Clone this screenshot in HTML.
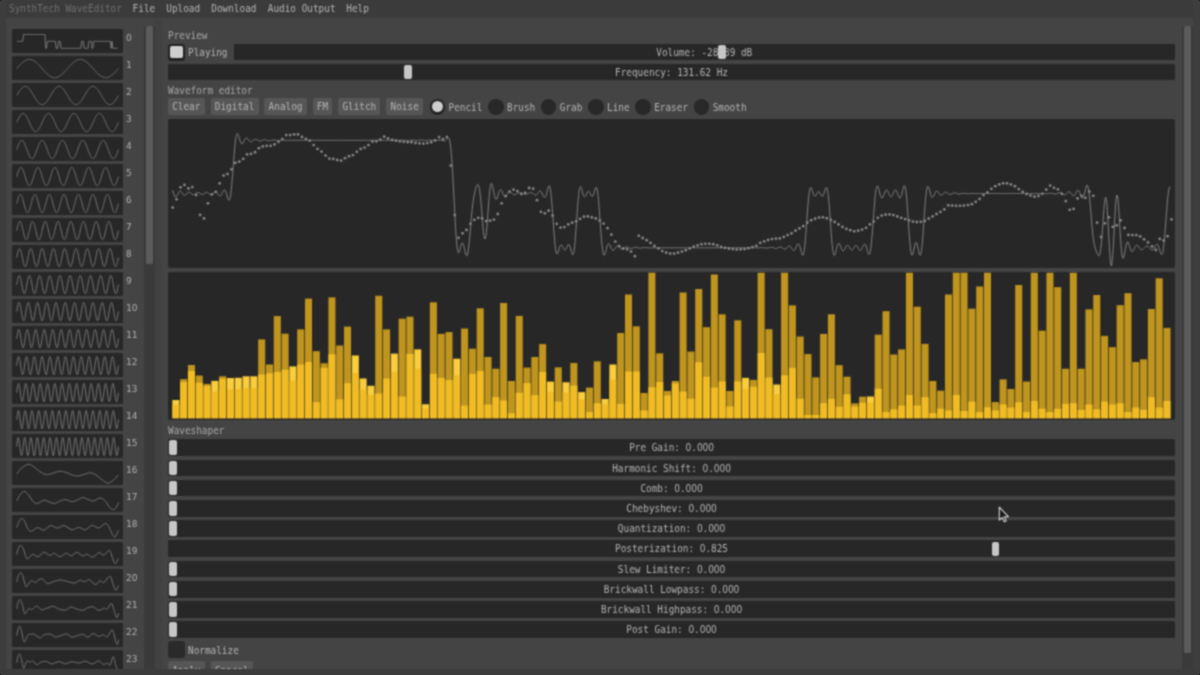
<!DOCTYPE html><html><head><meta charset="utf-8"><title>SynthTech WaveEditor</title><style>
html,body{margin:0;padding:0;background:#151515;overflow:hidden}
#app{position:relative;filter:url(#soft);border-radius:3px;width:1200px;height:675px;overflow:hidden;background:#444444;
 font-family:"DejaVu Sans Mono","Liberation Mono",monospace;font-size:9.4px;line-height:12px;color:#b4b4b4;white-space:pre}
#app div,#app span,#app svg{position:absolute}
.menubar{left:0;top:0;width:1200px;height:18px;background:#3b3b3b}
.menubar span{top:2.9px}
.dim{color:#6f6f6f}
#app b{display:inline-block;width:5.66px;text-align:center;font-weight:normal;font-family:"DejaVu Sans","Liberation Sans",sans-serif;font-size:9.1px;line-height:12px;vertical-align:baseline}
.menubar span,.lbl,.row span,.btn span,.rt,.tx{transform:scaleY(1.11);transform-origin:50% 52%}
.lbl{left:168px;color:#a8a8a8}
.row{left:168px;width:1007px;height:16.8px;background:#272727;border-radius:1.5px;text-align:center}
.row span{left:0;right:0;top:3.05px;text-align:center}
.h{width:7.8px;height:14.4px;background:#c6c6c6;border-radius:2px;top:1.2px}
.btn{top:98px;height:17px;background:#565656;border-radius:2px;text-align:center}
.btn span{left:0;right:0;top:3.3px}
.rad{top:99.3px;width:15.4px;height:15.4px;border-radius:50%;background:#282828}
.rad.on{background:#222}
.rad.on i{position:absolute;left:2.2px;top:2.2px;width:11px;height:11px;border-radius:50%;background:#cdcdcd}
.rt{top:101.5px}
.th{left:12px;width:110.7px;height:23.6px;background:#272727;border-radius:1.5px}
.num{left:126px;color:#b0b0b0}
.cb{width:17px;height:17px;border-radius:3px;background:#222}
.cb i{position:absolute;left:2.2px;top:2.2px;width:12.6px;height:12.6px;border-radius:2px;background:#cfcfcf}
</style></head><body><svg width="0" height="0" style="position:absolute"><defs><filter id="soft" x="0" y="0" width="100%" height="100%" color-interpolation-filters="sRGB"><feConvolveMatrix order="3" kernelMatrix="0.0529 0.1242 0.0529 0.1242 0.2916 0.1242 0.0529 0.1242 0.0529" divisor="1" edgeMode="duplicate" preserveAlpha="true"/></filter></defs></svg><div id="app">
<div class="menubar">
<span class="dim" style="left:9px">SynthTech WaveEditor</span>
<span class="" style="left:132.6px">File</span>
<span class="" style="left:166.3px">Upload</span>
<span class="" style="left:211.3px">Download</span>
<span class="" style="left:267.8px">Audio Output</span>
<span class="" style="left:346.3px">Help</span>
</div>
<div class="th" style="top:29.1px"></div>
<div class="num" style="top:32.1px"><b>0</b></div>
<div class="th" style="top:56.1px"></div>
<div class="num" style="top:59.1px">1</div>
<div class="th" style="top:83.1px"></div>
<div class="num" style="top:86.1px">2</div>
<div class="th" style="top:110.1px"></div>
<div class="num" style="top:113.1px">3</div>
<div class="th" style="top:137.1px"></div>
<div class="num" style="top:140.1px">4</div>
<div class="th" style="top:164.2px"></div>
<div class="num" style="top:167.2px">5</div>
<div class="th" style="top:191.2px"></div>
<div class="num" style="top:194.2px">6</div>
<div class="th" style="top:218.2px"></div>
<div class="num" style="top:221.2px">7</div>
<div class="th" style="top:245.2px"></div>
<div class="num" style="top:248.2px">8</div>
<div class="th" style="top:272.2px"></div>
<div class="num" style="top:275.2px">9</div>
<div class="th" style="top:299.2px"></div>
<div class="num" style="top:302.2px">1<b>0</b></div>
<div class="th" style="top:326.2px"></div>
<div class="num" style="top:329.2px">11</div>
<div class="th" style="top:353.2px"></div>
<div class="num" style="top:356.2px">12</div>
<div class="th" style="top:380.2px"></div>
<div class="num" style="top:383.2px">13</div>
<div class="th" style="top:407.2px"></div>
<div class="num" style="top:410.2px">14</div>
<div class="th" style="top:434.3px"></div>
<div class="num" style="top:437.3px">15</div>
<div class="th" style="top:461.3px"></div>
<div class="num" style="top:464.3px">16</div>
<div class="th" style="top:488.3px"></div>
<div class="num" style="top:491.3px">17</div>
<div class="th" style="top:515.3px"></div>
<div class="num" style="top:518.3px">18</div>
<div class="th" style="top:542.3px"></div>
<div class="num" style="top:545.3px">19</div>
<div class="th" style="top:569.3px"></div>
<div class="num" style="top:572.3px">2<b>0</b></div>
<div class="th" style="top:596.3px"></div>
<div class="num" style="top:599.3px">21</div>
<div class="th" style="top:623.3px"></div>
<div class="num" style="top:626.3px">22</div>
<div class="th" style="top:650.3px"></div>
<div class="num" style="top:653.3px">23</div>
<svg width="160" height="675" viewBox="0 0 160 675" style="left:0;top:0"><polyline fill="none" stroke="#777777" stroke-width="1.0" stroke-linejoin="round" points="17.1,41.3 17.9,41.3 18.7,41.3 19.5,41.3 20.3,41.3 21.1,41.3 21.9,41.3 22.7,41.3 23.5,34.5 24.3,34.5 25.1,34.5 25.9,34.5 26.7,34.5 27.5,34.5 28.3,34.5 29.1,34.5 29.9,34.5 30.7,34.5 31.5,34.5 32.3,34.5 33.1,34.5 33.8,34.5 34.6,34.5 35.4,34.5 36.2,34.5 37.0,34.5 37.8,34.5 38.6,34.5 39.4,34.5 40.2,34.5 41.0,34.5 41.8,34.5 42.6,34.5 43.4,34.5 44.2,34.5 45.0,34.5 45.8,48.3 46.6,48.3 47.4,41.3 48.2,41.3 49.0,41.3 49.8,41.3 50.6,41.3 51.4,41.3 52.2,41.3 53.0,41.3 53.8,41.3 54.6,41.3 55.4,41.3 56.2,48.3 57.0,48.3 57.8,48.3 58.6,41.3 59.4,41.3 60.2,41.3 61.0,48.3 61.8,48.3 62.6,48.3 63.4,48.3 64.2,48.3 65.0,48.3 65.8,48.3 66.6,48.3 67.4,48.3 68.1,48.3 68.9,48.3 69.7,48.3 70.5,48.3 71.3,48.3 72.1,48.3 72.9,48.3 73.7,48.3 74.5,48.3 75.3,48.3 76.1,48.3 76.9,48.3 77.7,48.3 78.5,48.3 79.3,48.3 80.1,48.3 80.9,48.3 81.7,41.3 82.5,41.3 83.3,41.3 84.1,48.3 84.9,48.3 85.7,48.3 86.5,48.3 87.3,48.3 88.1,48.3 88.9,41.3 89.7,41.3 90.5,41.3 91.3,41.3 92.1,48.3 92.9,48.3 93.7,41.3 94.5,41.3 95.3,41.3 96.1,41.3 96.9,41.3 97.7,41.3 98.5,41.3 99.3,41.3 100.1,41.3 100.9,41.3 101.6,41.3 102.4,41.3 103.2,41.3 104.0,41.3 104.8,41.3 105.6,41.3 106.4,41.3 107.2,41.3 108.0,41.3 108.8,41.3 109.6,41.3 110.4,41.3 111.2,48.3 112.0,41.3 112.8,48.3 113.6,48.3 114.4,48.3 115.2,48.3 116.0,48.3 116.8,48.3 117.6,48.3"/><polyline fill="none" stroke="#777777" stroke-width="1.0" stroke-linejoin="round" points="16.7,68.5 17.0,68.2 17.2,67.9 17.5,67.7 17.7,67.4 18.0,67.1 18.2,66.8 18.5,66.5 18.7,66.2 19.0,66.0 19.2,65.7 19.5,65.4 19.8,65.2 20.0,64.9 20.3,64.6 20.5,64.4 20.8,64.1 21.0,63.9 21.3,63.6 21.5,63.4 21.8,63.1 22.1,62.9 22.3,62.7 22.6,62.5 22.8,62.3 23.1,62.1 23.3,61.9 23.6,61.7 23.8,61.5 24.1,61.3 24.3,61.1 24.6,61.0 24.9,60.8 25.1,60.7 25.4,60.5 25.6,60.4 25.9,60.3 26.1,60.1 26.4,60.0 26.6,59.9 26.9,59.8 27.2,59.8 27.4,59.7 27.7,59.6 27.9,59.6 28.2,59.5 28.4,59.5 28.7,59.4 28.9,59.4 29.2,59.4 29.4,59.4 29.7,59.4 30.0,59.4 30.2,59.5 30.5,59.5 30.7,59.5 31.0,59.6 31.2,59.6 31.5,59.7 31.7,59.8 32.0,59.9 32.2,60.0 32.5,60.1 32.8,60.2 33.0,60.3 33.3,60.4 33.5,60.6 33.8,60.7 34.0,60.9 34.3,61.0 34.5,61.2 34.8,61.4 35.1,61.5 35.3,61.7 35.6,61.9 35.8,62.1 36.1,62.3 36.3,62.5 36.6,62.8 36.8,63.0 37.1,63.2 37.3,63.4 37.6,63.7 37.9,63.9 38.1,64.2 38.4,64.4 38.6,64.7 38.9,65.0 39.1,65.2 39.4,65.5 39.6,65.8 39.9,66.0 40.1,66.3 40.4,66.6 40.7,66.9 40.9,67.2 41.2,67.4 41.4,67.7 41.7,68.0 41.9,68.3 42.2,68.6 42.4,68.9 42.7,69.2 43.0,69.4 43.2,69.7 43.5,70.0 43.7,70.3 44.0,70.6 44.2,70.8 44.5,71.1 44.7,71.4 45.0,71.7 45.2,71.9 45.5,72.2 45.8,72.5 46.0,72.7 46.3,73.0 46.5,73.2 46.8,73.5 47.0,73.7 47.3,73.9 47.5,74.2 47.8,74.4 48.1,74.6 48.3,74.8 48.6,75.0 48.8,75.2 49.1,75.4 49.3,75.6 49.6,75.8 49.8,75.9 50.1,76.1 50.3,76.2 50.6,76.4 50.9,76.5 51.1,76.7 51.4,76.8 51.6,76.9 51.9,77.0 52.1,77.1 52.4,77.2 52.6,77.3 52.9,77.3 53.1,77.4 53.4,77.5 53.7,77.5 53.9,77.6 54.2,77.6 54.4,77.6 54.7,77.6 54.9,77.6 55.2,77.6 55.4,77.6 55.7,77.6 56.0,77.5 56.2,77.5 56.5,77.4 56.7,77.4 57.0,77.3 57.2,77.2 57.5,77.1 57.7,77.0 58.0,76.9 58.2,76.8 58.5,76.7 58.8,76.6 59.0,76.4 59.3,76.3 59.5,76.1 59.8,76.0 60.0,75.8 60.3,75.6 60.5,75.4 60.8,75.3 61.1,75.1 61.3,74.9 61.6,74.6 61.8,74.4 62.1,74.2 62.3,74.0 62.6,73.8 62.8,73.5 63.1,73.3 63.3,73.0 63.6,72.8 63.9,72.5 64.1,72.3 64.4,72.0 64.6,71.7 64.9,71.5 65.1,71.2 65.4,70.9 65.6,70.6 65.9,70.4 66.1,70.1 66.4,69.8 66.7,69.5 66.9,69.2 67.2,68.9 67.4,68.7 67.7,68.4 67.9,68.1 68.2,67.8 68.4,67.5 68.7,67.2 69.0,66.9 69.2,66.7 69.5,66.4 69.7,66.1 70.0,65.8 70.2,65.6 70.5,65.3 70.7,65.0 71.0,64.8 71.2,64.5 71.5,64.2 71.8,64.0 72.0,63.7 72.3,63.5 72.5,63.3 72.8,63.0 73.0,62.8 73.3,62.6 73.5,62.4 73.8,62.2 74.0,62.0 74.3,61.8 74.6,61.6 74.8,61.4 75.1,61.2 75.3,61.1 75.6,60.9 75.8,60.7 76.1,60.6 76.3,60.5 76.6,60.3 76.9,60.2 77.1,60.1 77.4,60.0 77.6,59.9 77.9,59.8 78.1,59.7 78.4,59.7 78.6,59.6 78.9,59.5 79.1,59.5 79.4,59.5 79.7,59.4 79.9,59.4 80.2,59.4 80.4,59.4 80.7,59.4 80.9,59.4 81.2,59.5 81.4,59.5 81.7,59.6 82.0,59.6 82.2,59.7 82.5,59.7 82.7,59.8 83.0,59.9 83.2,60.0 83.5,60.1 83.7,60.2 84.0,60.4 84.2,60.5 84.5,60.6 84.8,60.8 85.0,60.9 85.3,61.1 85.5,61.3 85.8,61.4 86.0,61.6 86.3,61.8 86.5,62.0 86.8,62.2 87.0,62.4 87.3,62.6 87.6,62.9 87.8,63.1 88.1,63.3 88.3,63.6 88.6,63.8 88.8,64.1 89.1,64.3 89.3,64.6 89.6,64.8 89.9,65.1 90.1,65.4 90.4,65.6 90.6,65.9 90.9,66.2 91.1,66.5 91.4,66.7 91.6,67.0 91.9,67.3 92.1,67.6 92.4,67.9 92.7,68.2 92.9,68.4 93.2,68.7 93.4,69.0 93.7,69.3 93.9,69.6 94.2,69.9 94.4,70.1 94.7,70.4 95.0,70.7 95.2,71.0 95.5,71.3 95.7,71.5 96.0,71.8 96.2,72.1 96.5,72.3 96.7,72.6 97.0,72.8 97.2,73.1 97.5,73.3 97.8,73.6 98.0,73.8 98.3,74.0 98.5,74.3 98.8,74.5 99.0,74.7 99.3,74.9 99.5,75.1 99.8,75.3 100.0,75.5 100.3,75.7 100.6,75.8 100.8,76.0 101.1,76.2 101.3,76.3 101.6,76.5 101.8,76.6 102.1,76.7 102.3,76.8 102.6,77.0 102.9,77.1 103.1,77.2 103.4,77.2 103.6,77.3 103.9,77.4 104.1,77.4 104.4,77.5 104.6,77.5 104.9,77.6 105.1,77.6 105.4,77.6 105.7,77.6 105.9,77.6 106.2,77.6 106.4,77.6 106.7,77.5 106.9,77.5 107.2,77.5 107.4,77.4 107.7,77.3 107.9,77.3 108.2,77.2 108.5,77.1 108.7,77.0 109.0,76.9 109.2,76.8 109.5,76.6 109.7,76.5 110.0,76.4 110.2,76.2 110.5,76.0 110.8,75.9 111.0,75.7 111.3,75.5 111.5,75.3 111.8,75.2 112.0,75.0 112.3,74.8 112.5,74.5 112.8,74.3 113.0,74.1 113.3,73.9 113.6,73.6 113.8,73.4 114.1,73.2 114.3,72.9 114.6,72.7 114.8,72.4 115.1,72.1 115.3,71.9 115.6,71.6 115.9,71.3 116.1,71.1 116.4,70.8 116.6,70.5 116.9,70.2 117.1,69.9 117.4,69.7 117.6,69.4 117.9,69.1 118.1,68.8 118.4,68.5"/><polyline fill="none" stroke="#777777" stroke-width="1.0" stroke-linejoin="round" points="16.7,95.5 17.0,95.1 17.2,94.7 17.5,94.2 17.7,93.8 18.0,93.4 18.2,93.0 18.5,92.6 18.7,92.2 19.0,91.8 19.2,91.4 19.5,91.0 19.8,90.6 20.0,90.3 20.3,89.9 20.5,89.6 20.8,89.3 21.0,89.0 21.3,88.7 21.5,88.4 21.8,88.1 22.1,87.9 22.3,87.7 22.6,87.5 22.8,87.3 23.1,87.1 23.3,86.9 23.6,86.8 23.8,86.7 24.1,86.6 24.3,86.5 24.6,86.5 24.9,86.4 25.1,86.4 25.4,86.4 25.6,86.5 25.9,86.5 26.1,86.6 26.4,86.6 26.6,86.8 26.9,86.9 27.2,87.0 27.4,87.2 27.7,87.4 27.9,87.6 28.2,87.8 28.4,88.0 28.7,88.3 28.9,88.5 29.2,88.8 29.4,89.1 29.7,89.4 30.0,89.8 30.2,90.1 30.5,90.5 30.7,90.8 31.0,91.2 31.2,91.6 31.5,92.0 31.7,92.4 32.0,92.8 32.2,93.2 32.5,93.6 32.8,94.0 33.0,94.4 33.3,94.9 33.5,95.3 33.8,95.7 34.0,96.2 34.3,96.6 34.5,97.0 34.8,97.4 35.1,97.9 35.3,98.3 35.6,98.7 35.8,99.1 36.1,99.5 36.3,99.9 36.6,100.2 36.8,100.6 37.1,100.9 37.3,101.3 37.6,101.6 37.9,101.9 38.1,102.2 38.4,102.5 38.6,102.8 38.9,103.0 39.1,103.3 39.4,103.5 39.6,103.7 39.9,103.9 40.1,104.0 40.4,104.2 40.7,104.3 40.9,104.4 41.2,104.5 41.4,104.5 41.7,104.6 41.9,104.6 42.2,104.6 42.4,104.6 42.7,104.6 43.0,104.5 43.2,104.4 43.5,104.3 43.7,104.2 44.0,104.1 44.2,103.9 44.5,103.8 44.7,103.6 45.0,103.4 45.2,103.1 45.5,102.9 45.8,102.6 46.0,102.4 46.3,102.1 46.5,101.8 46.8,101.4 47.0,101.1 47.3,100.8 47.5,100.4 47.8,100.0 48.1,99.7 48.3,99.3 48.6,98.9 48.8,98.5 49.1,98.1 49.3,97.6 49.6,97.2 49.8,96.8 50.1,96.4 50.3,95.9 50.6,95.5 50.9,95.1 51.1,94.7 51.4,94.2 51.6,93.8 51.9,93.4 52.1,93.0 52.4,92.6 52.6,92.2 52.9,91.8 53.1,91.4 53.4,91.0 53.7,90.6 53.9,90.3 54.2,89.9 54.4,89.6 54.7,89.3 54.9,89.0 55.2,88.7 55.4,88.4 55.7,88.1 56.0,87.9 56.2,87.7 56.5,87.5 56.7,87.3 57.0,87.1 57.2,86.9 57.5,86.8 57.7,86.7 58.0,86.6 58.2,86.5 58.5,86.5 58.8,86.4 59.0,86.4 59.3,86.4 59.5,86.5 59.8,86.5 60.0,86.6 60.3,86.6 60.5,86.8 60.8,86.9 61.1,87.0 61.3,87.2 61.6,87.4 61.8,87.6 62.1,87.8 62.3,88.0 62.6,88.3 62.8,88.5 63.1,88.8 63.3,89.1 63.6,89.4 63.9,89.8 64.1,90.1 64.4,90.5 64.6,90.8 64.9,91.2 65.1,91.6 65.4,92.0 65.6,92.4 65.9,92.8 66.1,93.2 66.4,93.6 66.7,94.0 66.9,94.4 67.2,94.9 67.4,95.3 67.7,95.7 67.9,96.2 68.2,96.6 68.4,97.0 68.7,97.4 69.0,97.9 69.2,98.3 69.5,98.7 69.7,99.1 70.0,99.5 70.2,99.9 70.5,100.2 70.7,100.6 71.0,100.9 71.2,101.3 71.5,101.6 71.8,101.9 72.0,102.2 72.3,102.5 72.5,102.8 72.8,103.0 73.0,103.3 73.3,103.5 73.5,103.7 73.8,103.9 74.0,104.0 74.3,104.2 74.6,104.3 74.8,104.4 75.1,104.5 75.3,104.5 75.6,104.6 75.8,104.6 76.1,104.6 76.3,104.6 76.6,104.6 76.9,104.5 77.1,104.4 77.4,104.3 77.6,104.2 77.9,104.1 78.1,103.9 78.4,103.8 78.6,103.6 78.9,103.4 79.1,103.1 79.4,102.9 79.7,102.6 79.9,102.4 80.2,102.1 80.4,101.8 80.7,101.4 80.9,101.1 81.2,100.8 81.4,100.4 81.7,100.0 82.0,99.7 82.2,99.3 82.5,98.9 82.7,98.5 83.0,98.1 83.2,97.6 83.5,97.2 83.7,96.8 84.0,96.4 84.2,95.9 84.5,95.5 84.8,95.1 85.0,94.7 85.3,94.2 85.5,93.8 85.8,93.4 86.0,93.0 86.3,92.6 86.5,92.2 86.8,91.8 87.0,91.4 87.3,91.0 87.6,90.6 87.8,90.3 88.1,89.9 88.3,89.6 88.6,89.3 88.8,89.0 89.1,88.7 89.3,88.4 89.6,88.1 89.9,87.9 90.1,87.7 90.4,87.5 90.6,87.3 90.9,87.1 91.1,86.9 91.4,86.8 91.6,86.7 91.9,86.6 92.1,86.5 92.4,86.5 92.7,86.4 92.9,86.4 93.2,86.4 93.4,86.5 93.7,86.5 93.9,86.6 94.2,86.6 94.4,86.8 94.7,86.9 95.0,87.0 95.2,87.2 95.5,87.4 95.7,87.6 96.0,87.8 96.2,88.0 96.5,88.3 96.7,88.5 97.0,88.8 97.2,89.1 97.5,89.4 97.8,89.8 98.0,90.1 98.3,90.5 98.5,90.8 98.8,91.2 99.0,91.6 99.3,92.0 99.5,92.4 99.8,92.8 100.0,93.2 100.3,93.6 100.6,94.0 100.8,94.4 101.1,94.9 101.3,95.3 101.6,95.7 101.8,96.2 102.1,96.6 102.3,97.0 102.6,97.4 102.9,97.9 103.1,98.3 103.4,98.7 103.6,99.1 103.9,99.5 104.1,99.9 104.4,100.2 104.6,100.6 104.9,100.9 105.1,101.3 105.4,101.6 105.7,101.9 105.9,102.2 106.2,102.5 106.4,102.8 106.7,103.0 106.9,103.3 107.2,103.5 107.4,103.7 107.7,103.9 107.9,104.0 108.2,104.2 108.5,104.3 108.7,104.4 109.0,104.5 109.2,104.5 109.5,104.6 109.7,104.6 110.0,104.6 110.2,104.6 110.5,104.6 110.8,104.5 111.0,104.4 111.3,104.3 111.5,104.2 111.8,104.1 112.0,103.9 112.3,103.8 112.5,103.6 112.8,103.4 113.0,103.1 113.3,102.9 113.6,102.6 113.8,102.4 114.1,102.1 114.3,101.8 114.6,101.4 114.8,101.1 115.1,100.8 115.3,100.4 115.6,100.0 115.9,99.7 116.1,99.3 116.4,98.9 116.6,98.5 116.9,98.1 117.1,97.6 117.4,97.2 117.6,96.8 117.9,96.4 118.1,95.9 118.4,95.5"/><polyline fill="none" stroke="#777777" stroke-width="1.0" stroke-linejoin="round" points="16.7,122.5 17.0,122.0 17.2,121.4 17.5,120.8 17.7,120.3 18.0,119.7 18.2,119.2 18.5,118.6 18.7,118.1 19.0,117.6 19.2,117.2 19.5,116.7 19.8,116.3 20.0,115.9 20.3,115.5 20.5,115.2 20.8,114.8 21.0,114.5 21.3,114.3 21.5,114.1 21.8,113.9 22.1,113.7 22.3,113.6 22.6,113.5 22.8,113.4 23.1,113.4 23.3,113.5 23.6,113.5 23.8,113.6 24.1,113.7 24.3,113.9 24.6,114.1 24.9,114.3 25.1,114.6 25.4,114.9 25.6,115.2 25.9,115.6 26.1,115.9 26.4,116.3 26.6,116.8 26.9,117.2 27.2,117.7 27.4,118.2 27.7,118.7 27.9,119.2 28.2,119.8 28.4,120.3 28.7,120.9 28.9,121.5 29.2,122.0 29.4,122.6 29.7,123.2 30.0,123.7 30.2,124.3 30.5,124.9 30.7,125.4 31.0,126.0 31.2,126.5 31.5,127.0 31.7,127.5 32.0,127.9 32.2,128.4 32.5,128.8 32.8,129.2 33.0,129.6 33.3,129.9 33.5,130.3 33.8,130.6 34.0,130.8 34.3,131.0 34.5,131.2 34.8,131.4 35.1,131.5 35.3,131.6 35.6,131.6 35.8,131.6 36.1,131.6 36.3,131.5 36.6,131.4 36.8,131.3 37.1,131.1 37.3,130.9 37.6,130.7 37.9,130.4 38.1,130.1 38.4,129.8 38.6,129.5 38.9,129.1 39.1,128.7 39.4,128.2 39.6,127.8 39.9,127.3 40.1,126.8 40.4,126.3 40.7,125.8 40.9,125.2 41.2,124.7 41.4,124.1 41.7,123.5 41.9,123.0 42.2,122.4 42.4,121.8 42.7,121.2 43.0,120.7 43.2,120.1 43.5,119.6 43.7,119.0 44.0,118.5 44.2,118.0 44.5,117.5 44.7,117.1 45.0,116.6 45.2,116.2 45.5,115.8 45.8,115.4 46.0,115.1 46.3,114.8 46.5,114.5 46.8,114.2 47.0,114.0 47.3,113.8 47.5,113.7 47.8,113.6 48.1,113.5 48.3,113.4 48.6,113.4 48.8,113.5 49.1,113.5 49.3,113.6 49.6,113.8 49.8,113.9 50.1,114.1 50.3,114.4 50.6,114.6 50.9,115.0 51.1,115.3 51.4,115.6 51.6,116.0 51.9,116.4 52.1,116.9 52.4,117.3 52.6,117.8 52.9,118.3 53.1,118.8 53.4,119.4 53.7,119.9 53.9,120.5 54.2,121.0 54.4,121.6 54.7,122.2 54.9,122.7 55.2,123.3 55.4,123.9 55.7,124.5 56.0,125.0 56.2,125.6 56.5,126.1 56.7,126.6 57.0,127.1 57.2,127.6 57.5,128.1 57.7,128.5 58.0,128.9 58.2,129.3 58.5,129.7 58.8,130.0 59.0,130.3 59.3,130.6 59.5,130.9 59.8,131.1 60.0,131.3 60.3,131.4 60.5,131.5 60.8,131.6 61.1,131.6 61.3,131.6 61.6,131.6 61.8,131.5 62.1,131.4 62.3,131.3 62.6,131.1 62.8,130.9 63.1,130.6 63.3,130.4 63.6,130.1 63.9,129.7 64.1,129.4 64.4,129.0 64.6,128.6 64.9,128.1 65.1,127.7 65.4,127.2 65.6,126.7 65.9,126.2 66.1,125.6 66.4,125.1 66.7,124.5 66.9,124.0 67.2,123.4 67.4,122.8 67.7,122.2 67.9,121.7 68.2,121.1 68.4,120.5 68.7,120.0 69.0,119.4 69.2,118.9 69.5,118.4 69.7,117.9 70.0,117.4 70.2,116.9 70.5,116.5 70.7,116.1 71.0,115.7 71.2,115.3 71.5,115.0 71.8,114.7 72.0,114.4 72.3,114.2 72.5,114.0 72.8,113.8 73.0,113.6 73.3,113.5 73.5,113.5 73.8,113.4 74.0,113.4 74.3,113.5 74.6,113.5 74.8,113.7 75.1,113.8 75.3,114.0 75.6,114.2 75.8,114.4 76.1,114.7 76.3,115.0 76.6,115.4 76.9,115.7 77.1,116.1 77.4,116.6 77.6,117.0 77.9,117.5 78.1,117.9 78.4,118.5 78.6,119.0 78.9,119.5 79.1,120.1 79.4,120.6 79.7,121.2 79.9,121.7 80.2,122.3 80.4,122.9 80.7,123.5 80.9,124.0 81.2,124.6 81.4,125.1 81.7,125.7 82.0,126.2 82.2,126.7 82.5,127.2 82.7,127.7 83.0,128.2 83.2,128.6 83.5,129.0 83.7,129.4 84.0,129.8 84.2,130.1 84.5,130.4 84.8,130.7 85.0,130.9 85.3,131.1 85.5,131.3 85.8,131.4 86.0,131.5 86.3,131.6 86.5,131.6 86.8,131.6 87.0,131.6 87.3,131.5 87.6,131.4 87.8,131.2 88.1,131.1 88.3,130.8 88.6,130.6 88.8,130.3 89.1,130.0 89.3,129.6 89.6,129.3 89.9,128.9 90.1,128.5 90.4,128.0 90.6,127.5 90.9,127.0 91.1,126.5 91.4,126.0 91.6,125.5 91.9,124.9 92.1,124.4 92.4,123.8 92.7,123.2 92.9,122.7 93.2,122.1 93.4,121.5 93.7,121.0 93.9,120.4 94.2,119.8 94.4,119.3 94.7,118.8 95.0,118.3 95.2,117.8 95.5,117.3 95.7,116.8 96.0,116.4 96.2,116.0 96.5,115.6 96.7,115.2 97.0,114.9 97.2,114.6 97.5,114.3 97.8,114.1 98.0,113.9 98.3,113.7 98.5,113.6 98.8,113.5 99.0,113.5 99.3,113.4 99.5,113.4 99.8,113.5 100.0,113.6 100.3,113.7 100.6,113.8 100.8,114.0 101.1,114.3 101.3,114.5 101.6,114.8 101.8,115.1 102.1,115.5 102.3,115.8 102.6,116.2 102.9,116.7 103.1,117.1 103.4,117.6 103.6,118.1 103.9,118.6 104.1,119.1 104.4,119.6 104.6,120.2 104.9,120.8 105.1,121.3 105.4,121.9 105.7,122.5 105.9,123.0 106.2,123.6 106.4,124.2 106.7,124.7 106.9,125.3 107.2,125.8 107.4,126.3 107.7,126.9 107.9,127.4 108.2,127.8 108.5,128.3 108.7,128.7 109.0,129.1 109.2,129.5 109.5,129.9 109.7,130.2 110.0,130.5 110.2,130.7 110.5,131.0 110.8,131.2 111.0,131.3 111.3,131.5 111.5,131.6 111.8,131.6 112.0,131.6 112.3,131.6 112.5,131.6 112.8,131.5 113.0,131.4 113.3,131.2 113.6,131.0 113.8,130.8 114.1,130.5 114.3,130.2 114.6,129.9 114.8,129.6 115.1,129.2 115.3,128.8 115.6,128.3 115.9,127.9 116.1,127.4 116.4,126.9 116.6,126.4 116.9,125.9 117.1,125.3 117.4,124.8 117.6,124.2 117.9,123.7 118.1,123.1 118.4,122.5"/><polyline fill="none" stroke="#777777" stroke-width="1.0" stroke-linejoin="round" points="16.7,149.5 17.0,148.8 17.2,148.1 17.5,147.4 17.7,146.7 18.0,146.0 18.2,145.4 18.5,144.8 18.7,144.2 19.0,143.6 19.2,143.1 19.5,142.6 19.8,142.2 20.0,141.8 20.3,141.4 20.5,141.1 20.8,140.9 21.0,140.7 21.3,140.5 21.5,140.5 21.8,140.4 22.1,140.5 22.3,140.6 22.6,140.7 22.8,140.9 23.1,141.1 23.3,141.5 23.6,141.8 23.8,142.2 24.1,142.7 24.3,143.1 24.6,143.7 24.9,144.2 25.1,144.8 25.4,145.5 25.6,146.1 25.9,146.8 26.1,147.5 26.4,148.2 26.6,148.9 26.9,149.6 27.2,150.3 27.4,151.0 27.7,151.7 27.9,152.4 28.2,153.1 28.4,153.7 28.7,154.4 28.9,155.0 29.2,155.5 29.4,156.0 29.7,156.5 30.0,157.0 30.2,157.3 30.5,157.7 30.7,158.0 31.0,158.2 31.2,158.4 31.5,158.5 31.7,158.6 32.0,158.6 32.2,158.6 32.5,158.5 32.8,158.4 33.0,158.2 33.3,157.9 33.5,157.6 33.8,157.2 34.0,156.8 34.3,156.4 34.5,155.9 34.8,155.4 35.1,154.8 35.3,154.2 35.6,153.6 35.8,152.9 36.1,152.2 36.3,151.5 36.6,150.8 36.8,150.1 37.1,149.4 37.3,148.7 37.6,148.0 37.9,147.3 38.1,146.6 38.4,145.9 38.6,145.3 38.9,144.7 39.1,144.1 39.4,143.5 39.6,143.0 39.9,142.5 40.1,142.1 40.4,141.7 40.7,141.4 40.9,141.1 41.2,140.8 41.4,140.7 41.7,140.5 41.9,140.5 42.2,140.4 42.4,140.5 42.7,140.6 43.0,140.7 43.2,140.9 43.5,141.2 43.7,141.5 44.0,141.9 44.2,142.3 44.5,142.7 44.7,143.2 45.0,143.8 45.2,144.4 45.5,145.0 45.8,145.6 46.0,146.2 46.3,146.9 46.5,147.6 46.8,148.3 47.0,149.0 47.3,149.8 47.5,150.5 47.8,151.2 48.1,151.9 48.3,152.6 48.6,153.2 48.8,153.9 49.1,154.5 49.3,155.1 49.6,155.6 49.8,156.1 50.1,156.6 50.3,157.0 50.6,157.4 50.9,157.8 51.1,158.0 51.4,158.3 51.6,158.4 51.9,158.6 52.1,158.6 52.4,158.6 52.6,158.6 52.9,158.5 53.1,158.3 53.4,158.1 53.7,157.8 53.9,157.5 54.2,157.2 54.4,156.7 54.7,156.3 54.9,155.8 55.2,155.2 55.4,154.7 55.7,154.1 56.0,153.4 56.2,152.8 56.5,152.1 56.7,151.4 57.0,150.7 57.2,150.0 57.5,149.3 57.7,148.5 58.0,147.8 58.2,147.1 58.5,146.5 58.8,145.8 59.0,145.1 59.3,144.5 59.5,144.0 59.8,143.4 60.0,142.9 60.3,142.4 60.5,142.0 60.8,141.6 61.1,141.3 61.3,141.0 61.6,140.8 61.8,140.6 62.1,140.5 62.3,140.4 62.6,140.4 62.8,140.5 63.1,140.6 63.3,140.8 63.6,141.0 63.9,141.3 64.1,141.6 64.4,142.0 64.6,142.4 64.9,142.8 65.1,143.4 65.4,143.9 65.6,144.5 65.9,145.1 66.1,145.7 66.4,146.4 66.7,147.1 66.9,147.8 67.2,148.5 67.4,149.2 67.7,149.9 67.9,150.6 68.2,151.3 68.4,152.0 68.7,152.7 69.0,153.4 69.2,154.0 69.5,154.6 69.7,155.2 70.0,155.7 70.2,156.2 70.5,156.7 70.7,157.1 71.0,157.5 71.2,157.8 71.5,158.1 71.8,158.3 72.0,158.5 72.3,158.6 72.5,158.6 72.8,158.6 73.0,158.6 73.3,158.5 73.5,158.3 73.8,158.1 74.0,157.8 74.3,157.5 74.6,157.1 74.8,156.7 75.1,156.2 75.3,155.7 75.6,155.1 75.8,154.5 76.1,153.9 76.3,153.3 76.6,152.6 76.9,151.9 77.1,151.2 77.4,150.5 77.6,149.8 77.9,149.1 78.1,148.4 78.4,147.7 78.6,147.0 78.9,146.3 79.1,145.7 79.4,145.0 79.7,144.4 79.9,143.8 80.2,143.3 80.4,142.8 80.7,142.3 80.9,141.9 81.2,141.6 81.4,141.2 81.7,141.0 82.0,140.8 82.2,140.6 82.5,140.5 82.7,140.4 83.0,140.5 83.2,140.5 83.5,140.6 83.7,140.8 84.0,141.0 84.2,141.3 84.5,141.7 84.8,142.0 85.0,142.5 85.3,142.9 85.5,143.5 85.8,144.0 86.0,144.6 86.3,145.2 86.5,145.9 86.8,146.5 87.0,147.2 87.3,147.9 87.6,148.6 87.8,149.3 88.1,150.0 88.3,150.8 88.6,151.5 88.8,152.2 89.1,152.8 89.3,153.5 89.6,154.1 89.9,154.7 90.1,155.3 90.4,155.8 90.6,156.3 90.9,156.8 91.1,157.2 91.4,157.6 91.6,157.9 91.9,158.1 92.1,158.3 92.4,158.5 92.7,158.6 92.9,158.6 93.2,158.6 93.4,158.6 93.7,158.4 93.9,158.2 94.2,158.0 94.4,157.7 94.7,157.4 95.0,157.0 95.2,156.6 95.5,156.1 95.7,155.6 96.0,155.0 96.2,154.4 96.5,153.8 96.7,153.2 97.0,152.5 97.2,151.8 97.5,151.1 97.8,150.4 98.0,149.7 98.3,149.0 98.5,148.3 98.8,147.6 99.0,146.9 99.3,146.2 99.5,145.5 99.8,144.9 100.0,144.3 100.3,143.7 100.6,143.2 100.8,142.7 101.1,142.3 101.3,141.8 101.6,141.5 101.8,141.2 102.1,140.9 102.3,140.7 102.6,140.6 102.9,140.5 103.1,140.4 103.4,140.5 103.6,140.5 103.9,140.7 104.1,140.9 104.4,141.1 104.6,141.4 104.9,141.7 105.1,142.1 105.4,142.6 105.7,143.0 105.9,143.6 106.2,144.1 106.4,144.7 106.7,145.3 106.9,146.0 107.2,146.7 107.4,147.3 107.7,148.0 107.9,148.8 108.2,149.5 108.5,150.2 108.7,150.9 109.0,151.6 109.2,152.3 109.5,153.0 109.7,153.6 110.0,154.2 110.2,154.8 110.5,155.4 110.8,155.9 111.0,156.4 111.3,156.9 111.5,157.3 111.8,157.6 112.0,157.9 112.3,158.2 112.5,158.4 112.8,158.5 113.0,158.6 113.3,158.6 113.6,158.6 113.8,158.5 114.1,158.4 114.3,158.2 114.6,158.0 114.8,157.7 115.1,157.3 115.3,156.9 115.6,156.5 115.9,156.0 116.1,155.5 116.4,154.9 116.6,154.3 116.9,153.7 117.1,153.0 117.4,152.4 117.6,151.7 117.9,151.0 118.1,150.3 118.4,149.5"/><polyline fill="none" stroke="#777777" stroke-width="1.0" stroke-linejoin="round" points="16.7,176.6 17.0,175.7 17.2,174.8 17.5,174.0 17.7,173.2 18.0,172.4 18.2,171.7 18.5,171.0 18.7,170.3 19.0,169.7 19.2,169.2 19.5,168.7 19.8,168.3 20.0,168.0 20.3,167.7 20.5,167.6 20.8,167.5 21.0,167.5 21.3,167.5 21.5,167.7 21.8,167.9 22.1,168.2 22.3,168.6 22.6,169.1 22.8,169.6 23.1,170.2 23.3,170.8 23.6,171.5 23.8,172.2 24.1,173.0 24.3,173.8 24.6,174.6 24.9,175.5 25.1,176.3 25.4,177.2 25.6,178.0 25.9,178.9 26.1,179.7 26.4,180.5 26.6,181.3 26.9,182.0 27.2,182.6 27.4,183.2 27.7,183.8 27.9,184.3 28.2,184.7 28.4,185.0 28.7,185.3 28.9,185.5 29.2,185.6 29.4,185.6 29.7,185.6 30.0,185.5 30.2,185.3 30.5,185.0 30.7,184.6 31.0,184.2 31.2,183.7 31.5,183.1 31.7,182.5 32.0,181.8 32.2,181.1 32.5,180.3 32.8,179.5 33.0,178.7 33.3,177.8 33.5,177.0 33.8,176.1 34.0,175.3 34.3,174.4 34.5,173.6 34.8,172.8 35.1,172.0 35.3,171.3 35.6,170.6 35.8,170.0 36.1,169.4 36.3,168.9 36.6,168.5 36.8,168.1 37.1,167.8 37.3,167.6 37.6,167.5 37.9,167.5 38.1,167.5 38.4,167.6 38.6,167.8 38.9,168.1 39.1,168.4 39.4,168.8 39.6,169.3 39.9,169.9 40.1,170.5 40.4,171.1 40.7,171.8 40.9,172.6 41.2,173.4 41.4,174.2 41.7,175.1 41.9,175.9 42.2,176.8 42.4,177.6 42.7,178.5 43.0,179.3 43.2,180.1 43.5,180.9 43.7,181.6 44.0,182.3 44.2,182.9 44.5,183.5 44.7,184.0 45.0,184.5 45.2,184.9 45.5,185.2 45.8,185.4 46.0,185.6 46.3,185.6 46.5,185.6 46.8,185.5 47.0,185.4 47.3,185.1 47.5,184.8 47.8,184.4 48.1,183.9 48.3,183.4 48.6,182.8 48.8,182.1 49.1,181.4 49.3,180.7 49.6,179.9 49.8,179.1 50.1,178.3 50.3,177.4 50.6,176.6 50.9,175.7 51.1,174.8 51.4,174.0 51.6,173.2 51.9,172.4 52.1,171.7 52.4,171.0 52.6,170.3 52.9,169.7 53.1,169.2 53.4,168.7 53.7,168.3 53.9,168.0 54.2,167.7 54.4,167.6 54.7,167.5 54.9,167.5 55.2,167.5 55.4,167.7 55.7,167.9 56.0,168.2 56.2,168.6 56.5,169.1 56.7,169.6 57.0,170.2 57.2,170.8 57.5,171.5 57.7,172.2 58.0,173.0 58.2,173.8 58.5,174.6 58.8,175.5 59.0,176.3 59.3,177.2 59.5,178.0 59.8,178.9 60.0,179.7 60.3,180.5 60.5,181.3 60.8,182.0 61.1,182.6 61.3,183.2 61.6,183.8 61.8,184.3 62.1,184.7 62.3,185.0 62.6,185.3 62.8,185.5 63.1,185.6 63.3,185.6 63.6,185.6 63.9,185.5 64.1,185.3 64.4,185.0 64.6,184.6 64.9,184.2 65.1,183.7 65.4,183.1 65.6,182.5 65.9,181.8 66.1,181.1 66.4,180.3 66.7,179.5 66.9,178.7 67.2,177.8 67.4,177.0 67.7,176.1 67.9,175.3 68.2,174.4 68.4,173.6 68.7,172.8 69.0,172.0 69.2,171.3 69.5,170.6 69.7,170.0 70.0,169.4 70.2,168.9 70.5,168.5 70.7,168.1 71.0,167.8 71.2,167.6 71.5,167.5 71.8,167.5 72.0,167.5 72.3,167.6 72.5,167.8 72.8,168.1 73.0,168.4 73.3,168.8 73.5,169.3 73.8,169.9 74.0,170.5 74.3,171.1 74.6,171.8 74.8,172.6 75.1,173.4 75.3,174.2 75.6,175.1 75.8,175.9 76.1,176.8 76.3,177.6 76.6,178.5 76.9,179.3 77.1,180.1 77.4,180.9 77.6,181.6 77.9,182.3 78.1,182.9 78.4,183.5 78.6,184.0 78.9,184.5 79.1,184.9 79.4,185.2 79.7,185.4 79.9,185.6 80.2,185.6 80.4,185.6 80.7,185.5 80.9,185.4 81.2,185.1 81.4,184.8 81.7,184.4 82.0,183.9 82.2,183.4 82.5,182.8 82.7,182.1 83.0,181.4 83.2,180.7 83.5,179.9 83.7,179.1 84.0,178.3 84.2,177.4 84.5,176.6 84.8,175.7 85.0,174.8 85.3,174.0 85.5,173.2 85.8,172.4 86.0,171.7 86.3,171.0 86.5,170.3 86.8,169.7 87.0,169.2 87.3,168.7 87.6,168.3 87.8,168.0 88.1,167.7 88.3,167.6 88.6,167.5 88.8,167.5 89.1,167.5 89.3,167.7 89.6,167.9 89.9,168.2 90.1,168.6 90.4,169.1 90.6,169.6 90.9,170.2 91.1,170.8 91.4,171.5 91.6,172.2 91.9,173.0 92.1,173.8 92.4,174.6 92.7,175.5 92.9,176.3 93.2,177.2 93.4,178.0 93.7,178.9 93.9,179.7 94.2,180.5 94.4,181.3 94.7,182.0 95.0,182.6 95.2,183.2 95.5,183.8 95.7,184.3 96.0,184.7 96.2,185.0 96.5,185.3 96.7,185.5 97.0,185.6 97.2,185.6 97.5,185.6 97.8,185.5 98.0,185.3 98.3,185.0 98.5,184.6 98.8,184.2 99.0,183.7 99.3,183.1 99.5,182.5 99.8,181.8 100.0,181.1 100.3,180.3 100.6,179.5 100.8,178.7 101.1,177.8 101.3,177.0 101.6,176.1 101.8,175.3 102.1,174.4 102.3,173.6 102.6,172.8 102.9,172.0 103.1,171.3 103.4,170.6 103.6,170.0 103.9,169.4 104.1,168.9 104.4,168.5 104.6,168.1 104.9,167.8 105.1,167.6 105.4,167.5 105.7,167.5 105.9,167.5 106.2,167.6 106.4,167.8 106.7,168.1 106.9,168.4 107.2,168.8 107.4,169.3 107.7,169.9 107.9,170.5 108.2,171.1 108.5,171.8 108.7,172.6 109.0,173.4 109.2,174.2 109.5,175.1 109.7,175.9 110.0,176.8 110.2,177.6 110.5,178.5 110.8,179.3 111.0,180.1 111.3,180.9 111.5,181.6 111.8,182.3 112.0,182.9 112.3,183.5 112.5,184.0 112.8,184.5 113.0,184.9 113.3,185.2 113.6,185.4 113.8,185.6 114.1,185.6 114.3,185.6 114.6,185.5 114.8,185.4 115.1,185.1 115.3,184.8 115.6,184.4 115.9,183.9 116.1,183.4 116.4,182.8 116.6,182.1 116.9,181.4 117.1,180.7 117.4,179.9 117.6,179.1 117.9,178.3 118.1,177.4 118.4,176.6"/><polyline fill="none" stroke="#777777" stroke-width="1.0" stroke-linejoin="round" points="16.7,203.6 17.0,202.6 17.2,201.6 17.5,200.6 17.7,199.7 18.0,198.8 18.2,198.0 18.5,197.2 18.7,196.5 19.0,195.9 19.2,195.4 19.5,195.0 19.8,194.7 20.0,194.5 20.3,194.5 20.5,194.5 20.8,194.6 21.0,194.9 21.3,195.2 21.5,195.7 21.8,196.2 22.1,196.9 22.3,197.6 22.6,198.4 22.8,199.2 23.1,200.1 23.3,201.1 23.6,202.1 23.8,203.1 24.1,204.1 24.3,205.1 24.6,206.0 24.9,207.0 25.1,207.9 25.4,208.7 25.6,209.5 25.9,210.3 26.1,210.9 26.4,211.4 26.6,211.9 26.9,212.2 27.2,212.5 27.4,212.6 27.7,212.7 27.9,212.6 28.2,212.4 28.4,212.1 28.7,211.7 28.9,211.2 29.2,210.6 29.4,209.9 29.7,209.1 30.0,208.3 30.2,207.4 30.5,206.5 30.7,205.5 31.0,204.6 31.2,203.6 31.5,202.6 31.7,201.6 32.0,200.6 32.2,199.7 32.5,198.8 32.8,198.0 33.0,197.2 33.3,196.5 33.5,195.9 33.8,195.4 34.0,195.0 34.3,194.7 34.5,194.5 34.8,194.5 35.1,194.5 35.3,194.6 35.6,194.9 35.8,195.2 36.1,195.7 36.3,196.2 36.6,196.9 36.8,197.6 37.1,198.4 37.3,199.2 37.6,200.1 37.9,201.1 38.1,202.1 38.4,203.1 38.6,204.1 38.9,205.1 39.1,206.0 39.4,207.0 39.6,207.9 39.9,208.7 40.1,209.5 40.4,210.3 40.7,210.9 40.9,211.4 41.2,211.9 41.4,212.2 41.7,212.5 41.9,212.6 42.2,212.7 42.4,212.6 42.7,212.4 43.0,212.1 43.2,211.7 43.5,211.2 43.7,210.6 44.0,209.9 44.2,209.1 44.5,208.3 44.7,207.4 45.0,206.5 45.2,205.5 45.5,204.6 45.8,203.6 46.0,202.6 46.3,201.6 46.5,200.6 46.8,199.7 47.0,198.8 47.3,198.0 47.5,197.2 47.8,196.5 48.1,195.9 48.3,195.4 48.6,195.0 48.8,194.7 49.1,194.5 49.3,194.5 49.6,194.5 49.8,194.6 50.1,194.9 50.3,195.2 50.6,195.7 50.9,196.2 51.1,196.9 51.4,197.6 51.6,198.4 51.9,199.2 52.1,200.1 52.4,201.1 52.6,202.1 52.9,203.1 53.1,204.1 53.4,205.1 53.7,206.0 53.9,207.0 54.2,207.9 54.4,208.7 54.7,209.5 54.9,210.3 55.2,210.9 55.4,211.4 55.7,211.9 56.0,212.2 56.2,212.5 56.5,212.6 56.7,212.7 57.0,212.6 57.2,212.4 57.5,212.1 57.7,211.7 58.0,211.2 58.2,210.6 58.5,209.9 58.8,209.1 59.0,208.3 59.3,207.4 59.5,206.5 59.8,205.5 60.0,204.6 60.3,203.6 60.5,202.6 60.8,201.6 61.1,200.6 61.3,199.7 61.6,198.8 61.8,198.0 62.1,197.2 62.3,196.5 62.6,195.9 62.8,195.4 63.1,195.0 63.3,194.7 63.6,194.5 63.9,194.5 64.1,194.5 64.4,194.6 64.6,194.9 64.9,195.2 65.1,195.7 65.4,196.2 65.6,196.9 65.9,197.6 66.1,198.4 66.4,199.2 66.7,200.1 66.9,201.1 67.2,202.1 67.4,203.1 67.7,204.1 67.9,205.1 68.2,206.0 68.4,207.0 68.7,207.9 69.0,208.7 69.2,209.5 69.5,210.3 69.7,210.9 70.0,211.4 70.2,211.9 70.5,212.2 70.7,212.5 71.0,212.6 71.2,212.7 71.5,212.6 71.8,212.4 72.0,212.1 72.3,211.7 72.5,211.2 72.8,210.6 73.0,209.9 73.3,209.1 73.5,208.3 73.8,207.4 74.0,206.5 74.3,205.5 74.6,204.6 74.8,203.6 75.1,202.6 75.3,201.6 75.6,200.6 75.8,199.7 76.1,198.8 76.3,198.0 76.6,197.2 76.9,196.5 77.1,195.9 77.4,195.4 77.6,195.0 77.9,194.7 78.1,194.5 78.4,194.5 78.6,194.5 78.9,194.6 79.1,194.9 79.4,195.2 79.7,195.7 79.9,196.2 80.2,196.9 80.4,197.6 80.7,198.4 80.9,199.2 81.2,200.1 81.4,201.1 81.7,202.1 82.0,203.1 82.2,204.1 82.5,205.1 82.7,206.0 83.0,207.0 83.2,207.9 83.5,208.7 83.7,209.5 84.0,210.3 84.2,210.9 84.5,211.4 84.8,211.9 85.0,212.2 85.3,212.5 85.5,212.6 85.8,212.7 86.0,212.6 86.3,212.4 86.5,212.1 86.8,211.7 87.0,211.2 87.3,210.6 87.6,209.9 87.8,209.1 88.1,208.3 88.3,207.4 88.6,206.5 88.8,205.5 89.1,204.6 89.3,203.6 89.6,202.6 89.9,201.6 90.1,200.6 90.4,199.7 90.6,198.8 90.9,198.0 91.1,197.2 91.4,196.5 91.6,195.9 91.9,195.4 92.1,195.0 92.4,194.7 92.7,194.5 92.9,194.5 93.2,194.5 93.4,194.6 93.7,194.9 93.9,195.2 94.2,195.7 94.4,196.2 94.7,196.9 95.0,197.6 95.2,198.4 95.5,199.2 95.7,200.1 96.0,201.1 96.2,202.1 96.5,203.1 96.7,204.1 97.0,205.1 97.2,206.0 97.5,207.0 97.8,207.9 98.0,208.7 98.3,209.5 98.5,210.3 98.8,210.9 99.0,211.4 99.3,211.9 99.5,212.2 99.8,212.5 100.0,212.6 100.3,212.7 100.6,212.6 100.8,212.4 101.1,212.1 101.3,211.7 101.6,211.2 101.8,210.6 102.1,209.9 102.3,209.1 102.6,208.3 102.9,207.4 103.1,206.5 103.4,205.5 103.6,204.6 103.9,203.6 104.1,202.6 104.4,201.6 104.6,200.6 104.9,199.7 105.1,198.8 105.4,198.0 105.7,197.2 105.9,196.5 106.2,195.9 106.4,195.4 106.7,195.0 106.9,194.7 107.2,194.5 107.4,194.5 107.7,194.5 107.9,194.6 108.2,194.9 108.5,195.2 108.7,195.7 109.0,196.2 109.2,196.9 109.5,197.6 109.7,198.4 110.0,199.2 110.2,200.1 110.5,201.1 110.8,202.1 111.0,203.1 111.3,204.1 111.5,205.1 111.8,206.0 112.0,207.0 112.3,207.9 112.5,208.7 112.8,209.5 113.0,210.3 113.3,210.9 113.6,211.4 113.8,211.9 114.1,212.2 114.3,212.5 114.6,212.6 114.8,212.7 115.1,212.6 115.3,212.4 115.6,212.1 115.9,211.7 116.1,211.2 116.4,210.6 116.6,209.9 116.9,209.1 117.1,208.3 117.4,207.4 117.6,206.5 117.9,205.5 118.1,204.6 118.4,203.6"/><polyline fill="none" stroke="#777777" stroke-width="1.0" stroke-linejoin="round" points="16.7,230.6 17.0,229.4 17.2,228.3 17.5,227.2 17.7,226.2 18.0,225.2 18.2,224.3 18.5,223.5 18.7,222.9 19.0,222.3 19.2,221.9 19.5,221.6 19.8,221.5 20.0,221.5 20.3,221.6 20.5,221.9 20.8,222.4 21.0,222.9 21.3,223.6 21.5,224.4 21.8,225.3 22.1,226.2 22.3,227.3 22.6,228.4 22.8,229.5 23.1,230.6 23.3,231.8 23.6,232.9 23.8,234.0 24.1,235.0 24.3,236.0 24.6,236.9 24.9,237.6 25.1,238.3 25.4,238.8 25.6,239.3 25.9,239.5 26.1,239.7 26.4,239.6 26.6,239.5 26.9,239.2 27.2,238.8 27.4,238.2 27.7,237.5 27.9,236.7 28.2,235.8 28.4,234.8 28.7,233.8 28.9,232.7 29.2,231.6 29.4,230.4 29.7,229.3 30.0,228.2 30.2,227.1 30.5,226.1 30.7,225.1 31.0,224.2 31.2,223.5 31.5,222.8 31.7,222.3 32.0,221.9 32.2,221.6 32.5,221.5 32.8,221.5 33.0,221.7 33.3,222.0 33.5,222.4 33.8,223.0 34.0,223.7 34.3,224.5 34.5,225.4 34.8,226.4 35.1,227.4 35.3,228.5 35.6,229.6 35.8,230.8 36.1,231.9 36.3,233.0 36.6,234.1 36.8,235.2 37.1,236.1 37.3,237.0 37.6,237.7 37.9,238.4 38.1,238.9 38.4,239.3 38.6,239.6 38.9,239.7 39.1,239.6 39.4,239.5 39.6,239.1 39.9,238.7 40.1,238.1 40.4,237.4 40.7,236.6 40.9,235.7 41.2,234.7 41.4,233.7 41.7,232.6 41.9,231.4 42.2,230.3 42.4,229.1 42.7,228.0 43.0,226.9 43.2,225.9 43.5,225.0 43.7,224.1 44.0,223.4 44.2,222.7 44.5,222.2 44.7,221.8 45.0,221.6 45.2,221.5 45.5,221.5 45.8,221.7 46.0,222.0 46.3,222.5 46.5,223.1 46.8,223.8 47.0,224.6 47.3,225.5 47.5,226.5 47.8,227.5 48.1,228.6 48.3,229.8 48.6,230.9 48.8,232.1 49.1,233.2 49.3,234.3 49.6,235.3 49.8,236.2 50.1,237.1 50.3,237.8 50.6,238.5 50.9,239.0 51.1,239.3 51.4,239.6 51.6,239.7 51.9,239.6 52.1,239.4 52.4,239.1 52.6,238.6 52.9,238.0 53.1,237.3 53.4,236.5 53.7,235.6 53.9,234.6 54.2,233.5 54.4,232.4 54.7,231.3 54.9,230.1 55.2,229.0 55.4,227.9 55.7,226.8 56.0,225.8 56.2,224.9 56.5,224.0 56.7,223.3 57.0,222.7 57.2,222.2 57.5,221.8 57.7,221.6 58.0,221.5 58.2,221.5 58.5,221.7 58.8,222.1 59.0,222.5 59.3,223.2 59.5,223.9 59.8,224.7 60.0,225.6 60.3,226.6 60.5,227.7 60.8,228.8 61.1,229.9 61.3,231.1 61.6,232.2 61.8,233.3 62.1,234.4 62.3,235.4 62.6,236.3 62.8,237.2 63.1,237.9 63.3,238.5 63.6,239.0 63.9,239.4 64.1,239.6 64.4,239.7 64.6,239.6 64.9,239.4 65.1,239.0 65.4,238.6 65.6,237.9 65.9,237.2 66.1,236.4 66.4,235.5 66.7,234.5 66.9,233.4 67.2,232.3 67.4,231.1 67.7,230.0 67.9,228.9 68.2,227.8 68.4,226.7 68.7,225.7 69.0,224.8 69.2,223.9 69.5,223.2 69.7,222.6 70.0,222.1 70.2,221.7 70.5,221.5 70.7,221.5 71.0,221.5 71.2,221.8 71.5,222.1 71.8,222.6 72.0,223.2 72.3,224.0 72.5,224.8 72.8,225.7 73.0,226.8 73.3,227.8 73.5,228.9 73.8,230.1 74.0,231.2 74.3,232.3 74.6,233.5 74.8,234.5 75.1,235.5 75.3,236.4 75.6,237.3 75.8,238.0 76.1,238.6 76.3,239.1 76.6,239.4 76.9,239.6 77.1,239.7 77.4,239.6 77.6,239.4 77.9,239.0 78.1,238.5 78.4,237.9 78.6,237.1 78.9,236.3 79.1,235.3 79.4,234.3 79.7,233.3 79.9,232.1 80.2,231.0 80.4,229.9 80.7,228.7 80.9,227.6 81.2,226.6 81.4,225.6 81.7,224.6 82.0,223.8 82.2,223.1 82.5,222.5 82.7,222.0 83.0,221.7 83.2,221.5 83.5,221.5 83.7,221.6 84.0,221.8 84.2,222.2 84.5,222.7 84.8,223.3 85.0,224.1 85.3,224.9 85.5,225.9 85.8,226.9 86.0,228.0 86.3,229.1 86.5,230.2 86.8,231.4 87.0,232.5 87.3,233.6 87.6,234.6 87.8,235.6 88.1,236.5 88.3,237.4 88.6,238.1 88.8,238.7 89.1,239.1 89.3,239.4 89.6,239.6 89.9,239.7 90.1,239.6 90.4,239.3 90.6,238.9 90.9,238.4 91.1,237.8 91.4,237.0 91.6,236.2 91.9,235.2 92.1,234.2 92.4,233.1 92.7,232.0 92.9,230.9 93.2,229.7 93.4,228.6 93.7,227.5 93.9,226.4 94.2,225.4 94.4,224.5 94.7,223.7 95.0,223.0 95.2,222.5 95.5,222.0 95.7,221.7 96.0,221.5 96.2,221.5 96.5,221.6 96.7,221.8 97.0,222.2 97.2,222.8 97.5,223.4 97.8,224.2 98.0,225.0 98.3,226.0 98.5,227.0 98.8,228.1 99.0,229.2 99.3,230.4 99.5,231.5 99.8,232.6 100.0,233.7 100.3,234.8 100.6,235.8 100.8,236.7 101.1,237.5 101.3,238.1 101.6,238.7 101.8,239.2 102.1,239.5 102.3,239.6 102.6,239.7 102.9,239.5 103.1,239.3 103.4,238.9 103.6,238.3 103.9,237.7 104.1,236.9 104.4,236.0 104.6,235.1 104.9,234.1 105.1,233.0 105.4,231.9 105.7,230.7 105.9,229.6 106.2,228.4 106.4,227.3 106.7,226.3 106.9,225.3 107.2,224.4 107.4,223.6 107.7,223.0 107.9,222.4 108.2,222.0 108.5,221.7 108.7,221.5 109.0,221.5 109.2,221.6 109.5,221.9 109.7,222.3 110.0,222.8 110.2,223.5 110.5,224.3 110.8,225.2 111.0,226.1 111.3,227.1 111.5,228.2 111.8,229.4 112.0,230.5 112.3,231.6 112.5,232.8 112.8,233.9 113.0,234.9 113.3,235.9 113.6,236.8 113.8,237.5 114.1,238.2 114.3,238.8 114.6,239.2 114.8,239.5 115.1,239.6 115.3,239.7 115.6,239.5 115.9,239.2 116.1,238.8 116.4,238.3 116.6,237.6 116.9,236.8 117.1,235.9 117.4,235.0 117.6,233.9 117.9,232.8 118.1,231.7 118.4,230.6"/><polyline fill="none" stroke="#777777" stroke-width="1.0" stroke-linejoin="round" points="16.7,257.6 17.0,256.3 17.2,255.0 17.5,253.8 17.7,252.7 18.0,251.7 18.2,250.7 18.5,250.0 18.7,249.3 19.0,248.9 19.2,248.6 19.5,248.5 19.8,248.6 20.0,248.8 20.3,249.2 20.5,249.8 20.8,250.6 21.0,251.5 21.3,252.5 21.5,253.6 21.8,254.8 22.1,256.1 22.3,257.4 22.6,258.7 22.8,259.9 23.1,261.1 23.3,262.3 23.6,263.3 23.8,264.3 24.1,265.1 24.3,265.7 24.6,266.2 24.9,266.5 25.1,266.7 25.4,266.6 25.6,266.4 25.9,266.0 26.1,265.4 26.4,264.7 26.6,263.8 26.9,262.8 27.2,261.7 27.4,260.5 27.7,259.3 27.9,258.0 28.2,256.7 28.4,255.5 28.7,254.2 28.9,253.1 29.2,252.0 29.4,251.0 29.7,250.2 30.0,249.5 30.2,249.0 30.5,248.7 30.7,248.5 31.0,248.5 31.2,248.7 31.5,249.1 31.7,249.6 32.0,250.3 32.2,251.2 32.5,252.2 32.8,253.2 33.0,254.4 33.3,255.7 33.5,256.9 33.8,258.2 34.0,259.5 34.3,260.7 34.5,261.9 34.8,263.0 35.1,264.0 35.3,264.8 35.6,265.5 35.8,266.1 36.1,266.5 36.3,266.6 36.6,266.7 36.8,266.5 37.1,266.2 37.3,265.6 37.6,265.0 37.9,264.1 38.1,263.2 38.4,262.1 38.6,260.9 38.9,259.7 39.1,258.4 39.4,257.2 39.6,255.9 39.9,254.6 40.1,253.4 40.4,252.3 40.7,251.3 40.9,250.5 41.2,249.7 41.4,249.2 41.7,248.8 41.9,248.5 42.2,248.5 42.4,248.6 42.7,248.9 43.0,249.4 43.2,250.1 43.5,250.9 43.7,251.8 44.0,252.9 44.2,254.0 44.5,255.2 44.7,256.5 45.0,257.8 45.2,259.1 45.5,260.3 45.8,261.5 46.0,262.6 46.3,263.7 46.5,264.6 46.8,265.3 47.0,265.9 47.3,266.3 47.5,266.6 47.8,266.7 48.1,266.6 48.3,266.3 48.6,265.8 48.8,265.2 49.1,264.4 49.3,263.5 49.6,262.5 49.8,261.3 50.1,260.1 50.3,258.9 50.6,257.6 50.9,256.3 51.1,255.0 51.4,253.8 51.6,252.7 51.9,251.7 52.1,250.7 52.4,250.0 52.6,249.3 52.9,248.9 53.1,248.6 53.4,248.5 53.7,248.6 53.9,248.8 54.2,249.2 54.4,249.8 54.7,250.6 54.9,251.5 55.2,252.5 55.4,253.6 55.7,254.8 56.0,256.1 56.2,257.4 56.5,258.7 56.7,259.9 57.0,261.1 57.2,262.3 57.5,263.3 57.7,264.3 58.0,265.1 58.2,265.7 58.5,266.2 58.8,266.5 59.0,266.7 59.3,266.6 59.5,266.4 59.8,266.0 60.0,265.4 60.3,264.7 60.5,263.8 60.8,262.8 61.1,261.7 61.3,260.5 61.6,259.3 61.8,258.0 62.1,256.7 62.3,255.5 62.6,254.2 62.8,253.1 63.1,252.0 63.3,251.0 63.6,250.2 63.9,249.5 64.1,249.0 64.4,248.7 64.6,248.5 64.9,248.5 65.1,248.7 65.4,249.1 65.6,249.6 65.9,250.3 66.1,251.2 66.4,252.2 66.7,253.2 66.9,254.4 67.2,255.7 67.4,256.9 67.7,258.2 67.9,259.5 68.2,260.7 68.4,261.9 68.7,263.0 69.0,264.0 69.2,264.8 69.5,265.5 69.7,266.1 70.0,266.5 70.2,266.6 70.5,266.7 70.7,266.5 71.0,266.2 71.2,265.6 71.5,265.0 71.8,264.1 72.0,263.2 72.3,262.1 72.5,260.9 72.8,259.7 73.0,258.4 73.3,257.2 73.5,255.9 73.8,254.6 74.0,253.4 74.3,252.3 74.6,251.3 74.8,250.5 75.1,249.7 75.3,249.2 75.6,248.8 75.8,248.5 76.1,248.5 76.3,248.6 76.6,248.9 76.9,249.4 77.1,250.1 77.4,250.9 77.6,251.8 77.9,252.9 78.1,254.0 78.4,255.2 78.6,256.5 78.9,257.8 79.1,259.1 79.4,260.3 79.7,261.5 79.9,262.6 80.2,263.7 80.4,264.6 80.7,265.3 80.9,265.9 81.2,266.3 81.4,266.6 81.7,266.7 82.0,266.6 82.2,266.3 82.5,265.8 82.7,265.2 83.0,264.4 83.2,263.5 83.5,262.5 83.7,261.3 84.0,260.1 84.2,258.9 84.5,257.6 84.8,256.3 85.0,255.0 85.3,253.8 85.5,252.7 85.8,251.7 86.0,250.7 86.3,250.0 86.5,249.3 86.8,248.9 87.0,248.6 87.3,248.5 87.6,248.6 87.8,248.8 88.1,249.2 88.3,249.8 88.6,250.6 88.8,251.5 89.1,252.5 89.3,253.6 89.6,254.8 89.9,256.1 90.1,257.4 90.4,258.7 90.6,259.9 90.9,261.1 91.1,262.3 91.4,263.3 91.6,264.3 91.9,265.1 92.1,265.7 92.4,266.2 92.7,266.5 92.9,266.7 93.2,266.6 93.4,266.4 93.7,266.0 93.9,265.4 94.2,264.7 94.4,263.8 94.7,262.8 95.0,261.7 95.2,260.5 95.5,259.3 95.7,258.0 96.0,256.7 96.2,255.5 96.5,254.2 96.7,253.1 97.0,252.0 97.2,251.0 97.5,250.2 97.8,249.5 98.0,249.0 98.3,248.7 98.5,248.5 98.8,248.5 99.0,248.7 99.3,249.1 99.5,249.6 99.8,250.3 100.0,251.2 100.3,252.2 100.6,253.2 100.8,254.4 101.1,255.7 101.3,256.9 101.6,258.2 101.8,259.5 102.1,260.7 102.3,261.9 102.6,263.0 102.9,264.0 103.1,264.8 103.4,265.5 103.6,266.1 103.9,266.5 104.1,266.6 104.4,266.7 104.6,266.5 104.9,266.2 105.1,265.6 105.4,265.0 105.7,264.1 105.9,263.2 106.2,262.1 106.4,260.9 106.7,259.7 106.9,258.4 107.2,257.2 107.4,255.9 107.7,254.6 107.9,253.4 108.2,252.3 108.5,251.3 108.7,250.5 109.0,249.7 109.2,249.2 109.5,248.8 109.7,248.5 110.0,248.5 110.2,248.6 110.5,248.9 110.8,249.4 111.0,250.1 111.3,250.9 111.5,251.8 111.8,252.9 112.0,254.0 112.3,255.2 112.5,256.5 112.8,257.8 113.0,259.1 113.3,260.3 113.6,261.5 113.8,262.6 114.1,263.7 114.3,264.6 114.6,265.3 114.8,265.9 115.1,266.3 115.3,266.6 115.6,266.7 115.9,266.6 116.1,266.3 116.4,265.8 116.6,265.2 116.9,264.4 117.1,263.5 117.4,262.5 117.6,261.3 117.9,260.1 118.1,258.9 118.4,257.6"/><polyline fill="none" stroke="#777777" stroke-width="1.0" stroke-linejoin="round" points="16.7,284.6 17.0,283.2 17.2,281.8 17.5,280.4 17.7,279.2 18.0,278.1 18.2,277.2 18.5,276.5 18.7,275.9 19.0,275.6 19.2,275.5 19.5,275.6 19.8,275.9 20.0,276.5 20.3,277.3 20.5,278.2 20.8,279.3 21.0,280.5 21.3,281.8 21.5,283.2 21.8,284.7 22.1,286.1 22.3,287.5 22.6,288.8 22.8,290.0 23.1,291.1 23.3,292.0 23.6,292.7 23.8,293.3 24.1,293.6 24.3,293.7 24.6,293.6 24.9,293.2 25.1,292.6 25.4,291.9 25.6,290.9 25.9,289.8 26.1,288.6 26.4,287.3 26.6,285.9 26.9,284.4 27.2,283.0 27.4,281.6 27.7,280.3 27.9,279.1 28.2,278.0 28.4,277.1 28.7,276.4 28.9,275.9 29.2,275.6 29.4,275.5 29.7,275.6 30.0,276.0 30.2,276.6 30.5,277.3 30.7,278.3 31.0,279.4 31.2,280.6 31.5,282.0 31.7,283.4 32.0,284.8 32.2,286.2 32.5,287.6 32.8,288.9 33.0,290.1 33.3,291.2 33.5,292.1 33.8,292.8 34.0,293.3 34.3,293.6 34.5,293.7 34.8,293.5 35.1,293.2 35.3,292.6 35.6,291.8 35.8,290.8 36.1,289.7 36.3,288.5 36.6,287.1 36.8,285.7 37.1,284.3 37.3,282.9 37.6,281.5 37.9,280.2 38.1,279.0 38.4,277.9 38.6,277.1 38.9,276.3 39.1,275.8 39.4,275.6 39.6,275.5 39.9,275.7 40.1,276.0 40.4,276.6 40.7,277.4 40.9,278.4 41.2,279.5 41.4,280.8 41.7,282.1 41.9,283.5 42.2,284.9 42.4,286.4 42.7,287.7 43.0,289.0 43.2,290.2 43.5,291.3 43.7,292.2 44.0,292.9 44.2,293.4 44.5,293.6 44.7,293.7 45.0,293.5 45.2,293.1 45.5,292.5 45.8,291.7 46.0,290.7 46.3,289.6 46.5,288.3 46.8,287.0 47.0,285.6 47.3,284.2 47.5,282.7 47.8,281.4 48.1,280.1 48.3,278.9 48.6,277.8 48.8,277.0 49.1,276.3 49.3,275.8 49.6,275.5 49.8,275.5 50.1,275.7 50.3,276.1 50.6,276.7 50.9,277.5 51.1,278.5 51.4,279.6 51.6,280.9 51.9,282.3 52.1,283.7 52.4,285.1 52.6,286.5 52.9,287.9 53.1,289.2 53.4,290.3 53.7,291.4 53.9,292.2 54.2,292.9 54.4,293.4 54.7,293.6 54.9,293.7 55.2,293.5 55.4,293.1 55.7,292.4 56.0,291.6 56.2,290.6 56.5,289.5 56.7,288.2 57.0,286.9 57.2,285.4 57.5,284.0 57.7,282.6 58.0,281.2 58.2,279.9 58.5,278.8 58.8,277.8 59.0,276.9 59.3,276.2 59.5,275.8 59.8,275.5 60.0,275.5 60.3,275.7 60.5,276.1 60.8,276.8 61.1,277.6 61.3,278.6 61.6,279.8 61.8,281.0 62.1,282.4 62.3,283.8 62.6,285.2 62.8,286.6 63.1,288.0 63.3,289.3 63.6,290.5 63.9,291.5 64.1,292.3 64.4,293.0 64.6,293.4 64.9,293.7 65.1,293.7 65.4,293.4 65.6,293.0 65.9,292.4 66.1,291.5 66.4,290.5 66.7,289.4 66.9,288.1 67.2,286.7 67.4,285.3 67.7,283.9 67.9,282.5 68.2,281.1 68.4,279.8 68.7,278.7 69.0,277.7 69.2,276.8 69.5,276.2 69.7,275.7 70.0,275.5 70.2,275.5 70.5,275.8 70.7,276.2 71.0,276.9 71.2,277.7 71.5,278.7 71.8,279.9 72.0,281.2 72.3,282.5 72.5,283.9 72.8,285.4 73.0,286.8 73.3,288.1 73.5,289.4 73.8,290.6 74.0,291.6 74.3,292.4 74.6,293.0 74.8,293.5 75.1,293.7 75.3,293.7 75.6,293.4 75.8,293.0 76.1,292.3 76.3,291.4 76.6,290.4 76.9,289.2 77.1,287.9 77.4,286.6 77.6,285.2 77.9,283.7 78.1,282.3 78.4,281.0 78.6,279.7 78.9,278.6 79.1,277.6 79.4,276.7 79.7,276.1 79.9,275.7 80.2,275.5 80.4,275.5 80.7,275.8 80.9,276.3 81.2,276.9 81.4,277.8 81.7,278.8 82.0,280.0 82.2,281.3 82.5,282.7 82.7,284.1 83.0,285.5 83.2,286.9 83.5,288.3 83.7,289.5 84.0,290.7 84.2,291.7 84.5,292.5 84.8,293.1 85.0,293.5 85.3,293.7 85.5,293.6 85.8,293.4 86.0,292.9 86.3,292.2 86.5,291.3 86.8,290.3 87.0,289.1 87.3,287.8 87.6,286.4 87.8,285.0 88.1,283.6 88.3,282.2 88.6,280.8 88.8,279.6 89.1,278.5 89.3,277.5 89.6,276.7 89.9,276.1 90.1,275.7 90.4,275.5 90.6,275.5 90.9,275.8 91.1,276.3 91.4,277.0 91.6,277.9 91.9,278.9 92.1,280.1 92.4,281.4 92.7,282.8 92.9,284.2 93.2,285.7 93.4,287.1 93.7,288.4 93.9,289.7 94.2,290.8 94.4,291.7 94.7,292.5 95.0,293.1 95.2,293.5 95.5,293.7 95.7,293.6 96.0,293.3 96.2,292.8 96.5,292.1 96.7,291.2 97.0,290.2 97.2,289.0 97.5,287.7 97.8,286.3 98.0,284.9 98.3,283.4 98.5,282.0 98.8,280.7 99.0,279.5 99.3,278.3 99.5,277.4 99.8,276.6 100.0,276.0 100.3,275.6 100.6,275.5 100.8,275.6 101.1,275.9 101.3,276.4 101.6,277.1 101.8,278.0 102.1,279.1 102.3,280.3 102.6,281.6 102.9,283.0 103.1,284.4 103.4,285.8 103.6,287.2 103.9,288.5 104.1,289.8 104.4,290.9 104.6,291.8 104.9,292.6 105.1,293.2 105.4,293.5 105.7,293.7 105.9,293.6 106.2,293.3 106.4,292.8 106.7,292.0 106.9,291.1 107.2,290.1 107.4,288.9 107.7,287.5 107.9,286.2 108.2,284.7 108.5,283.3 108.7,281.9 109.0,280.6 109.2,279.3 109.5,278.2 109.7,277.3 110.0,276.5 110.2,276.0 110.5,275.6 110.8,275.5 111.0,275.6 111.3,275.9 111.5,276.4 111.8,277.2 112.0,278.1 112.3,279.2 112.5,280.4 112.8,281.7 113.0,283.1 113.3,284.5 113.6,285.9 113.8,287.3 114.1,288.7 114.3,289.9 114.6,291.0 114.8,291.9 115.1,292.7 115.3,293.2 115.6,293.6 115.9,293.7 116.1,293.6 116.4,293.3 116.6,292.7 116.9,292.0 117.1,291.0 117.4,290.0 117.6,288.7 117.9,287.4 118.1,286.0 118.4,284.6"/><polyline fill="none" stroke="#777777" stroke-width="1.0" stroke-linejoin="round" points="16.7,311.6 17.0,310.0 17.2,308.5 17.5,307.1 17.7,305.8 18.0,304.7 18.2,303.8 18.5,303.1 18.7,302.7 19.0,302.5 19.2,302.6 19.5,303.0 19.8,303.6 20.0,304.5 20.3,305.6 20.5,306.9 20.8,308.3 21.0,309.8 21.3,311.4 21.5,313.0 21.8,314.5 22.1,315.9 22.3,317.2 22.6,318.4 22.8,319.3 23.1,320.0 23.3,320.5 23.6,320.7 23.8,320.6 24.1,320.3 24.3,319.7 24.6,318.8 24.9,317.7 25.1,316.5 25.4,315.1 25.6,313.6 25.9,312.0 26.1,310.5 26.4,308.9 26.6,307.5 26.9,306.1 27.2,305.0 27.4,304.0 27.7,303.2 27.9,302.7 28.2,302.5 28.4,302.6 28.7,302.9 28.9,303.4 29.2,304.3 29.4,305.3 29.7,306.5 30.0,307.9 30.2,309.4 30.5,311.0 30.7,312.5 31.0,314.1 31.2,315.5 31.5,316.9 31.7,318.1 32.0,319.1 32.2,319.9 32.5,320.4 32.8,320.7 33.0,320.7 33.3,320.4 33.5,319.8 33.8,319.1 34.0,318.0 34.3,316.8 34.5,315.5 34.8,314.0 35.1,312.5 35.3,310.9 35.6,309.3 35.8,307.8 36.1,306.5 36.3,305.3 36.6,304.2 36.8,303.4 37.1,302.9 37.3,302.6 37.6,302.5 37.9,302.8 38.1,303.3 38.4,304.0 38.6,305.0 38.9,306.2 39.1,307.5 39.4,309.0 39.6,310.5 39.9,312.1 40.1,313.7 40.4,315.2 40.7,316.5 40.9,317.8 41.2,318.8 41.4,319.7 41.7,320.3 41.9,320.6 42.2,320.7 42.4,320.5 42.7,320.0 43.0,319.3 43.2,318.3 43.5,317.2 43.7,315.9 44.0,314.4 44.2,312.9 44.5,311.3 44.7,309.8 45.0,308.2 45.2,306.8 45.5,305.6 45.8,304.5 46.0,303.6 46.3,303.0 46.5,302.6 46.8,302.5 47.0,302.7 47.3,303.1 47.5,303.8 47.8,304.7 48.1,305.8 48.3,307.1 48.6,308.6 48.8,310.1 49.1,311.7 49.3,313.2 49.6,314.8 49.8,316.2 50.1,317.5 50.3,318.6 50.6,319.5 50.9,320.1 51.1,320.6 51.4,320.7 51.6,320.6 51.9,320.2 52.1,319.5 52.4,318.6 52.6,317.5 52.9,316.2 53.1,314.8 53.4,313.3 53.7,311.7 53.9,310.2 54.2,308.6 54.4,307.2 54.7,305.9 54.9,304.8 55.2,303.8 55.4,303.1 55.7,302.7 56.0,302.5 56.2,302.6 56.5,303.0 56.7,303.6 57.0,304.4 57.2,305.5 57.5,306.8 57.7,308.2 58.0,309.7 58.2,311.2 58.5,312.8 58.8,314.4 59.0,315.8 59.3,317.1 59.5,318.3 59.8,319.3 60.0,320.0 60.3,320.5 60.5,320.7 60.8,320.6 61.1,320.3 61.3,319.7 61.6,318.9 61.8,317.8 62.1,316.6 62.3,315.2 62.6,313.7 62.8,312.2 63.1,310.6 63.3,309.1 63.6,307.6 63.9,306.2 64.1,305.1 64.4,304.1 64.6,303.3 64.9,302.8 65.1,302.5 65.4,302.5 65.6,302.8 65.9,303.4 66.1,304.2 66.4,305.2 66.7,306.4 66.9,307.8 67.2,309.3 67.4,310.8 67.7,312.4 67.9,313.9 68.2,315.4 68.4,316.8 68.7,318.0 69.0,319.0 69.2,319.8 69.5,320.4 69.7,320.7 70.0,320.7 70.2,320.4 70.5,319.9 70.7,319.1 71.0,318.1 71.2,317.0 71.5,315.6 71.8,314.1 72.0,312.6 72.3,311.0 72.5,309.5 72.8,308.0 73.0,306.6 73.3,305.4 73.5,304.3 73.8,303.5 74.0,302.9 74.3,302.6 74.6,302.5 74.8,302.7 75.1,303.2 75.3,303.9 75.6,304.9 75.8,306.1 76.1,307.4 76.3,308.8 76.6,310.4 76.9,312.0 77.1,313.5 77.4,315.0 77.6,316.4 77.9,317.7 78.1,318.8 78.4,319.6 78.6,320.2 78.9,320.6 79.1,320.7 79.4,320.5 79.7,320.1 79.9,319.4 80.2,318.4 80.4,317.3 80.7,316.0 80.9,314.6 81.2,313.0 81.4,311.5 81.7,309.9 82.0,308.4 82.2,307.0 82.5,305.7 82.7,304.6 83.0,303.7 83.2,303.0 83.5,302.6 83.7,302.5 84.0,302.6 84.2,303.1 84.5,303.7 84.8,304.6 85.0,305.7 85.3,307.0 85.5,308.4 85.8,310.0 86.0,311.5 86.3,313.1 86.5,314.6 86.8,316.1 87.0,317.4 87.3,318.5 87.6,319.4 87.8,320.1 88.1,320.5 88.3,320.7 88.6,320.6 88.8,320.2 89.1,319.6 89.3,318.7 89.6,317.6 89.9,316.4 90.1,315.0 90.4,313.4 90.6,311.9 90.9,310.3 91.1,308.8 91.4,307.3 91.6,306.0 91.9,304.9 92.1,303.9 92.4,303.2 92.7,302.7 92.9,302.5 93.2,302.6 93.4,302.9 93.7,303.5 93.9,304.4 94.2,305.4 94.4,306.7 94.7,308.0 95.0,309.5 95.2,311.1 95.5,312.7 95.7,314.2 96.0,315.7 96.2,317.0 96.5,318.2 96.7,319.2 97.0,319.9 97.2,320.4 97.5,320.7 97.8,320.6 98.0,320.3 98.3,319.8 98.5,319.0 98.8,317.9 99.0,316.7 99.3,315.4 99.5,313.9 99.8,312.3 100.0,310.7 100.3,309.2 100.6,307.7 100.8,306.4 101.1,305.2 101.3,304.1 101.6,303.4 101.8,302.8 102.1,302.5 102.3,302.5 102.6,302.8 102.9,303.3 103.1,304.1 103.4,305.1 103.6,306.3 103.9,307.7 104.1,309.1 104.4,310.7 104.6,312.2 104.9,313.8 105.1,315.3 105.4,316.7 105.7,317.9 105.9,318.9 106.2,319.8 106.4,320.3 106.7,320.6 106.9,320.7 107.2,320.5 107.4,320.0 107.7,319.2 107.9,318.2 108.2,317.1 108.5,315.7 108.7,314.3 109.0,312.7 109.2,311.2 109.5,309.6 109.7,308.1 110.0,306.7 110.2,305.5 110.5,304.4 110.8,303.5 111.0,302.9 111.3,302.6 111.5,302.5 111.8,302.7 112.0,303.2 112.3,303.9 112.5,304.8 112.8,306.0 113.0,307.3 113.3,308.7 113.6,310.2 113.8,311.8 114.1,313.4 114.3,314.9 114.6,316.3 114.8,317.6 115.1,318.7 115.3,319.6 115.6,320.2 115.9,320.6 116.1,320.7 116.4,320.5 116.6,320.1 116.9,319.4 117.1,318.5 117.4,317.4 117.6,316.1 117.9,314.7 118.1,313.2 118.4,311.6"/><polyline fill="none" stroke="#777777" stroke-width="1.0" stroke-linejoin="round" points="16.7,338.6 17.0,336.9 17.2,335.3 17.5,333.7 17.7,332.4 18.0,331.2 18.2,330.4 18.5,329.8 18.7,329.5 19.0,329.6 19.2,330.0 19.5,330.7 19.8,331.6 20.0,332.9 20.3,334.3 20.5,335.9 20.8,337.5 21.0,339.3 21.3,340.9 21.5,342.6 21.8,344.0 22.1,345.3 22.3,346.3 22.6,347.1 22.8,347.6 23.1,347.7 23.3,347.5 23.6,347.0 23.8,346.2 24.1,345.2 24.3,343.9 24.6,342.4 24.9,340.7 25.1,339.0 25.4,337.3 25.6,335.7 25.9,334.1 26.1,332.7 26.4,331.5 26.6,330.6 26.9,329.9 27.2,329.6 27.4,329.5 27.7,329.8 27.9,330.5 28.2,331.4 28.4,332.5 28.7,333.9 28.9,335.5 29.2,337.1 29.4,338.8 29.7,340.5 30.0,342.2 30.2,343.7 30.5,345.0 30.7,346.1 31.0,346.9 31.2,347.5 31.5,347.7 31.7,347.6 32.0,347.2 32.2,346.5 32.5,345.4 32.8,344.2 33.0,342.8 33.3,341.2 33.5,339.5 33.8,337.8 34.0,336.1 34.3,334.5 34.5,333.0 34.8,331.8 35.1,330.8 35.3,330.0 35.6,329.6 35.8,329.5 36.1,329.7 36.3,330.3 36.6,331.1 36.8,332.2 37.1,333.5 37.3,335.1 37.6,336.7 37.9,338.4 38.1,340.1 38.4,341.8 38.6,343.3 38.9,344.7 39.1,345.9 39.4,346.8 39.6,347.4 39.9,347.7 40.1,347.7 40.4,347.3 40.7,346.7 40.9,345.7 41.2,344.5 41.4,343.1 41.7,341.6 41.9,339.9 42.2,338.2 42.4,336.5 42.7,334.9 43.0,333.4 43.2,332.1 43.5,331.0 43.7,330.2 44.0,329.7 44.2,329.5 44.5,329.7 44.7,330.1 45.0,330.9 45.2,331.9 45.5,333.2 45.8,334.7 46.0,336.3 46.3,338.0 46.5,339.7 46.8,341.4 47.0,342.9 47.3,344.4 47.5,345.6 47.8,346.6 48.1,347.3 48.3,347.6 48.6,347.7 48.8,347.4 49.1,346.9 49.3,346.0 49.6,344.9 49.8,343.5 50.1,342.0 50.3,340.3 50.6,338.6 50.9,336.9 51.1,335.3 51.4,333.7 51.6,332.4 51.9,331.2 52.1,330.4 52.4,329.8 52.6,329.5 52.9,329.6 53.1,330.0 53.4,330.7 53.7,331.6 53.9,332.9 54.2,334.3 54.4,335.9 54.7,337.5 54.9,339.3 55.2,340.9 55.4,342.6 55.7,344.0 56.0,345.3 56.2,346.3 56.5,347.1 56.7,347.6 57.0,347.7 57.2,347.5 57.5,347.0 57.7,346.2 58.0,345.2 58.2,343.9 58.5,342.4 58.8,340.7 59.0,339.0 59.3,337.3 59.5,335.7 59.8,334.1 60.0,332.7 60.3,331.5 60.5,330.6 60.8,329.9 61.1,329.6 61.3,329.5 61.6,329.8 61.8,330.5 62.1,331.4 62.3,332.5 62.6,333.9 62.8,335.5 63.1,337.1 63.3,338.8 63.6,340.5 63.9,342.2 64.1,343.7 64.4,345.0 64.6,346.1 64.9,346.9 65.1,347.5 65.4,347.7 65.6,347.6 65.9,347.2 66.1,346.5 66.4,345.4 66.7,344.2 66.9,342.8 67.2,341.2 67.4,339.5 67.7,337.8 67.9,336.1 68.2,334.5 68.4,333.0 68.7,331.8 69.0,330.8 69.2,330.0 69.5,329.6 69.7,329.5 70.0,329.7 70.2,330.3 70.5,331.1 70.7,332.2 71.0,333.5 71.2,335.1 71.5,336.7 71.8,338.4 72.0,340.1 72.3,341.8 72.5,343.3 72.8,344.7 73.0,345.9 73.3,346.8 73.5,347.4 73.8,347.7 74.0,347.7 74.3,347.3 74.6,346.7 74.8,345.7 75.1,344.5 75.3,343.1 75.6,341.6 75.8,339.9 76.1,338.2 76.3,336.5 76.6,334.9 76.9,333.4 77.1,332.1 77.4,331.0 77.6,330.2 77.9,329.7 78.1,329.5 78.4,329.7 78.6,330.1 78.9,330.9 79.1,331.9 79.4,333.2 79.7,334.7 79.9,336.3 80.2,338.0 80.4,339.7 80.7,341.4 80.9,342.9 81.2,344.4 81.4,345.6 81.7,346.6 82.0,347.3 82.2,347.6 82.5,347.7 82.7,347.4 83.0,346.9 83.2,346.0 83.5,344.9 83.7,343.5 84.0,342.0 84.2,340.3 84.5,338.6 84.8,336.9 85.0,335.3 85.3,333.7 85.5,332.4 85.8,331.2 86.0,330.4 86.3,329.8 86.5,329.5 86.8,329.6 87.0,330.0 87.3,330.7 87.6,331.6 87.8,332.9 88.1,334.3 88.3,335.9 88.6,337.5 88.8,339.3 89.1,340.9 89.3,342.6 89.6,344.0 89.9,345.3 90.1,346.3 90.4,347.1 90.6,347.6 90.9,347.7 91.1,347.5 91.4,347.0 91.6,346.2 91.9,345.2 92.1,343.9 92.4,342.4 92.7,340.7 92.9,339.0 93.2,337.3 93.4,335.7 93.7,334.1 93.9,332.7 94.2,331.5 94.4,330.6 94.7,329.9 95.0,329.6 95.2,329.5 95.5,329.8 95.7,330.5 96.0,331.4 96.2,332.5 96.5,333.9 96.7,335.5 97.0,337.1 97.2,338.8 97.5,340.5 97.8,342.2 98.0,343.7 98.3,345.0 98.5,346.1 98.8,346.9 99.0,347.5 99.3,347.7 99.5,347.6 99.8,347.2 100.0,346.5 100.3,345.4 100.6,344.2 100.8,342.8 101.1,341.2 101.3,339.5 101.6,337.8 101.8,336.1 102.1,334.5 102.3,333.0 102.6,331.8 102.9,330.8 103.1,330.0 103.4,329.6 103.6,329.5 103.9,329.7 104.1,330.3 104.4,331.1 104.6,332.2 104.9,333.5 105.1,335.1 105.4,336.7 105.7,338.4 105.9,340.1 106.2,341.8 106.4,343.3 106.7,344.7 106.9,345.9 107.2,346.8 107.4,347.4 107.7,347.7 107.9,347.7 108.2,347.3 108.5,346.7 108.7,345.7 109.0,344.5 109.2,343.1 109.5,341.6 109.7,339.9 110.0,338.2 110.2,336.5 110.5,334.9 110.8,333.4 111.0,332.1 111.3,331.0 111.5,330.2 111.8,329.7 112.0,329.5 112.3,329.7 112.5,330.1 112.8,330.9 113.0,331.9 113.3,333.2 113.6,334.7 113.8,336.3 114.1,338.0 114.3,339.7 114.6,341.4 114.8,342.9 115.1,344.4 115.3,345.6 115.6,346.6 115.9,347.3 116.1,347.6 116.4,347.7 116.6,347.4 116.9,346.9 117.1,346.0 117.4,344.9 117.6,343.5 117.9,342.0 118.1,340.3 118.4,338.6"/><polyline fill="none" stroke="#777777" stroke-width="1.0" stroke-linejoin="round" points="16.7,365.6 17.0,363.8 17.2,362.0 17.5,360.4 17.7,359.0 18.0,357.8 18.2,357.0 18.5,356.6 18.7,356.5 19.0,356.9 19.2,357.5 19.5,358.6 19.8,359.9 20.0,361.4 20.3,363.1 20.5,365.0 20.8,366.8 21.0,368.6 21.3,370.3 21.5,371.8 21.8,373.0 22.1,374.0 22.3,374.5 22.6,374.7 22.8,374.5 23.1,374.0 23.3,373.1 23.6,371.9 23.8,370.4 24.1,368.7 24.3,366.9 24.6,365.0 24.9,363.2 25.1,361.5 25.4,359.9 25.6,358.6 25.9,357.6 26.1,356.9 26.4,356.5 26.6,356.6 26.9,357.0 27.2,357.8 27.4,358.9 27.7,360.3 27.9,361.9 28.2,363.7 28.4,365.5 28.7,367.4 28.9,369.2 29.2,370.8 29.4,372.2 29.7,373.4 30.0,374.2 30.2,374.6 30.5,374.7 30.7,374.4 31.0,373.7 31.2,372.7 31.5,371.4 31.7,369.9 32.0,368.2 32.2,366.3 32.5,364.5 32.8,362.7 33.0,361.0 33.3,359.5 33.5,358.2 33.8,357.3 34.0,356.7 34.3,356.5 34.5,356.7 34.8,357.2 35.1,358.1 35.3,359.3 35.6,360.8 35.8,362.5 36.1,364.3 36.3,366.1 36.6,368.0 36.8,369.7 37.1,371.3 37.3,372.6 37.6,373.6 37.9,374.3 38.1,374.7 38.4,374.7 38.6,374.2 38.9,373.5 39.1,372.4 39.4,371.0 39.6,369.4 39.9,367.6 40.1,365.8 40.4,363.9 40.7,362.1 40.9,360.5 41.2,359.1 41.4,357.9 41.7,357.1 41.9,356.6 42.2,356.5 42.4,356.8 42.7,357.5 43.0,358.5 43.2,359.8 43.5,361.3 43.7,363.0 44.0,364.8 44.2,366.7 44.5,368.5 44.7,370.2 45.0,371.7 45.2,373.0 45.5,373.9 45.8,374.5 46.0,374.7 46.3,374.6 46.5,374.0 46.8,373.2 47.0,372.0 47.3,370.5 47.5,368.8 47.8,367.0 48.1,365.2 48.3,363.4 48.6,361.6 48.8,360.0 49.1,358.7 49.3,357.6 49.6,356.9 49.8,356.6 50.1,356.6 50.3,357.0 50.6,357.7 50.9,358.8 51.1,360.2 51.4,361.8 51.6,363.6 51.9,365.4 52.1,367.3 52.4,369.0 52.6,370.7 52.9,372.1 53.1,373.3 53.4,374.1 53.7,374.6 53.9,374.7 54.2,374.4 54.4,373.8 54.7,372.8 54.9,371.5 55.2,370.0 55.4,368.3 55.7,366.5 56.0,364.6 56.2,362.8 56.5,361.1 56.7,359.6 57.0,358.3 57.2,357.4 57.5,356.8 57.7,356.5 58.0,356.7 58.2,357.2 58.5,358.0 58.8,359.2 59.0,360.7 59.3,362.3 59.5,364.1 59.8,366.0 60.0,367.8 60.3,369.6 60.5,371.2 60.8,372.5 61.1,373.6 61.3,374.3 61.6,374.7 61.8,374.7 62.1,374.3 62.3,373.5 62.6,372.5 62.8,371.1 63.1,369.5 63.3,367.7 63.6,365.9 63.9,364.1 64.1,362.3 64.4,360.6 64.6,359.2 64.9,358.0 65.1,357.1 65.4,356.7 65.6,356.5 65.9,356.8 66.1,357.4 66.4,358.4 66.7,359.6 66.9,361.2 67.2,362.9 67.4,364.7 67.7,366.5 67.9,368.4 68.2,370.1 68.4,371.6 68.7,372.9 69.0,373.8 69.2,374.5 69.5,374.7 69.7,374.6 70.0,374.1 70.2,373.2 70.5,372.1 70.7,370.6 71.0,369.0 71.2,367.2 71.5,365.3 71.8,363.5 72.0,361.7 72.3,360.1 72.5,358.8 72.8,357.7 73.0,357.0 73.3,356.6 73.5,356.6 73.8,356.9 74.0,357.7 74.3,358.7 74.6,360.1 74.8,361.7 75.1,363.4 75.3,365.3 75.6,367.1 75.8,368.9 76.1,370.6 76.3,372.0 76.6,373.2 76.9,374.1 77.1,374.6 77.4,374.7 77.6,374.5 77.9,373.9 78.1,372.9 78.4,371.7 78.6,370.1 78.9,368.4 79.1,366.6 79.4,364.8 79.7,362.9 79.9,361.2 80.2,359.7 80.4,358.4 80.7,357.4 80.9,356.8 81.2,356.5 81.4,356.6 81.7,357.1 82.0,358.0 82.2,359.1 82.5,360.6 82.7,362.2 83.0,364.0 83.2,365.8 83.5,367.7 83.7,369.4 84.0,371.0 84.2,372.4 84.5,373.5 84.8,374.3 85.0,374.7 85.3,374.7 85.5,374.3 85.8,373.6 86.0,372.6 86.3,371.2 86.5,369.6 86.8,367.9 87.0,366.0 87.3,364.2 87.6,362.4 87.8,360.7 88.1,359.3 88.3,358.1 88.6,357.2 88.8,356.7 89.1,356.5 89.3,356.7 89.6,357.3 89.9,358.3 90.1,359.5 90.4,361.0 90.6,362.7 90.9,364.5 91.1,366.4 91.4,368.2 91.6,370.0 91.9,371.5 92.1,372.8 92.4,373.8 92.7,374.4 92.9,374.7 93.2,374.6 93.4,374.1 93.7,373.3 93.9,372.2 94.2,370.7 94.4,369.1 94.7,367.3 95.0,365.5 95.2,363.6 95.5,361.9 95.7,360.3 96.0,358.9 96.2,357.8 96.5,357.0 96.7,356.6 97.0,356.6 97.2,356.9 97.5,357.6 97.8,358.6 98.0,360.0 98.3,361.5 98.5,363.3 98.8,365.1 99.0,367.0 99.3,368.8 99.5,370.4 99.8,371.9 100.0,373.1 100.3,374.0 100.6,374.6 100.8,374.7 101.1,374.5 101.3,373.9 101.6,373.0 101.8,371.8 102.1,370.3 102.3,368.6 102.6,366.8 102.9,364.9 103.1,363.1 103.4,361.4 103.6,359.8 103.9,358.5 104.1,357.5 104.4,356.8 104.6,356.5 104.9,356.6 105.1,357.1 105.4,357.9 105.7,359.0 105.9,360.4 106.2,362.1 106.4,363.8 106.7,365.7 106.9,367.5 107.2,369.3 107.4,370.9 107.7,372.3 107.9,373.4 108.2,374.2 108.5,374.6 108.7,374.7 109.0,374.4 109.2,373.7 109.5,372.6 109.7,371.3 110.0,369.8 110.2,368.0 110.5,366.2 110.8,364.3 111.0,362.5 111.3,360.9 111.5,359.4 111.8,358.2 112.0,357.3 112.3,356.7 112.5,356.5 112.8,356.7 113.0,357.3 113.3,358.2 113.6,359.4 113.8,360.9 114.1,362.6 114.3,364.4 114.6,366.3 114.8,368.1 115.1,369.8 115.3,371.4 115.6,372.7 115.9,373.7 116.1,374.4 116.4,374.7 116.6,374.6 116.9,374.2 117.1,373.4 117.4,372.3 117.6,370.9 117.9,369.2 118.1,367.5 118.4,365.6"/><polyline fill="none" stroke="#777777" stroke-width="1.0" stroke-linejoin="round" points="16.7,392.6 17.0,390.6 17.2,388.7 17.5,387.0 17.7,385.6 18.0,384.5 18.2,383.8 18.5,383.5 18.7,383.7 19.0,384.3 19.2,385.3 19.5,386.7 19.8,388.3 20.0,390.2 20.3,392.1 20.5,394.1 20.8,396.1 21.0,397.8 21.3,399.3 21.5,400.5 21.8,401.3 22.1,401.7 22.3,401.6 22.6,401.2 22.8,400.2 23.1,399.0 23.3,397.4 23.6,395.6 23.8,393.6 24.1,391.6 24.3,389.7 24.6,387.9 24.9,386.3 25.1,385.0 25.4,384.1 25.6,383.6 25.9,383.6 26.1,383.9 26.4,384.7 26.6,385.9 26.9,387.4 27.2,389.2 27.4,391.1 27.7,393.1 27.9,395.1 28.2,397.0 28.4,398.6 28.7,400.0 28.9,401.0 29.2,401.6 29.4,401.7 29.7,401.5 30.0,400.7 30.2,399.7 30.5,398.2 30.7,396.5 31.0,394.6 31.2,392.6 31.5,390.6 31.7,388.7 32.0,387.0 32.2,385.6 32.5,384.5 32.8,383.8 33.0,383.5 33.3,383.7 33.5,384.3 33.8,385.3 34.0,386.7 34.3,388.3 34.5,390.2 34.8,392.1 35.1,394.1 35.3,396.1 35.6,397.8 35.8,399.3 36.1,400.5 36.3,401.3 36.6,401.7 36.8,401.6 37.1,401.2 37.3,400.2 37.6,399.0 37.9,397.4 38.1,395.6 38.4,393.6 38.6,391.6 38.9,389.7 39.1,387.9 39.4,386.3 39.6,385.0 39.9,384.1 40.1,383.6 40.4,383.6 40.7,383.9 40.9,384.7 41.2,385.9 41.4,387.4 41.7,389.2 41.9,391.1 42.2,393.1 42.4,395.1 42.7,397.0 43.0,398.6 43.2,400.0 43.5,401.0 43.7,401.6 44.0,401.7 44.2,401.5 44.5,400.7 44.7,399.7 45.0,398.2 45.2,396.5 45.5,394.6 45.8,392.6 46.0,390.6 46.3,388.7 46.5,387.0 46.8,385.6 47.0,384.5 47.3,383.8 47.5,383.5 47.8,383.7 48.1,384.3 48.3,385.3 48.6,386.7 48.8,388.3 49.1,390.2 49.3,392.1 49.6,394.1 49.8,396.1 50.1,397.8 50.3,399.3 50.6,400.5 50.9,401.3 51.1,401.7 51.4,401.6 51.6,401.2 51.9,400.2 52.1,399.0 52.4,397.4 52.6,395.6 52.9,393.6 53.1,391.6 53.4,389.7 53.7,387.9 53.9,386.3 54.2,385.0 54.4,384.1 54.7,383.6 54.9,383.6 55.2,383.9 55.4,384.7 55.7,385.9 56.0,387.4 56.2,389.2 56.5,391.1 56.7,393.1 57.0,395.1 57.2,397.0 57.5,398.6 57.7,400.0 58.0,401.0 58.2,401.6 58.5,401.7 58.8,401.5 59.0,400.7 59.3,399.7 59.5,398.2 59.8,396.5 60.0,394.6 60.3,392.6 60.5,390.6 60.8,388.7 61.1,387.0 61.3,385.6 61.6,384.5 61.8,383.8 62.1,383.5 62.3,383.7 62.6,384.3 62.8,385.3 63.1,386.7 63.3,388.3 63.6,390.2 63.9,392.1 64.1,394.1 64.4,396.1 64.6,397.8 64.9,399.3 65.1,400.5 65.4,401.3 65.6,401.7 65.9,401.6 66.1,401.2 66.4,400.2 66.7,399.0 66.9,397.4 67.2,395.6 67.4,393.6 67.7,391.6 67.9,389.7 68.2,387.9 68.4,386.3 68.7,385.0 69.0,384.1 69.2,383.6 69.5,383.6 69.7,383.9 70.0,384.7 70.2,385.9 70.5,387.4 70.7,389.2 71.0,391.1 71.2,393.1 71.5,395.1 71.8,397.0 72.0,398.6 72.3,400.0 72.5,401.0 72.8,401.6 73.0,401.7 73.3,401.5 73.5,400.7 73.8,399.7 74.0,398.2 74.3,396.5 74.6,394.6 74.8,392.6 75.1,390.6 75.3,388.7 75.6,387.0 75.8,385.6 76.1,384.5 76.3,383.8 76.6,383.5 76.9,383.7 77.1,384.3 77.4,385.3 77.6,386.7 77.9,388.3 78.1,390.2 78.4,392.1 78.6,394.1 78.9,396.1 79.1,397.8 79.4,399.3 79.7,400.5 79.9,401.3 80.2,401.7 80.4,401.6 80.7,401.2 80.9,400.2 81.2,399.0 81.4,397.4 81.7,395.6 82.0,393.6 82.2,391.6 82.5,389.7 82.7,387.9 83.0,386.3 83.2,385.0 83.5,384.1 83.7,383.6 84.0,383.6 84.2,383.9 84.5,384.7 84.8,385.9 85.0,387.4 85.3,389.2 85.5,391.1 85.8,393.1 86.0,395.1 86.3,397.0 86.5,398.6 86.8,400.0 87.0,401.0 87.3,401.6 87.6,401.7 87.8,401.5 88.1,400.7 88.3,399.7 88.6,398.2 88.8,396.5 89.1,394.6 89.3,392.6 89.6,390.6 89.9,388.7 90.1,387.0 90.4,385.6 90.6,384.5 90.9,383.8 91.1,383.5 91.4,383.7 91.6,384.3 91.9,385.3 92.1,386.7 92.4,388.3 92.7,390.2 92.9,392.1 93.2,394.1 93.4,396.1 93.7,397.8 93.9,399.3 94.2,400.5 94.4,401.3 94.7,401.7 95.0,401.6 95.2,401.2 95.5,400.2 95.7,399.0 96.0,397.4 96.2,395.6 96.5,393.6 96.7,391.6 97.0,389.7 97.2,387.9 97.5,386.3 97.8,385.0 98.0,384.1 98.3,383.6 98.5,383.6 98.8,383.9 99.0,384.7 99.3,385.9 99.5,387.4 99.8,389.2 100.0,391.1 100.3,393.1 100.6,395.1 100.8,397.0 101.1,398.6 101.3,400.0 101.6,401.0 101.8,401.6 102.1,401.7 102.3,401.5 102.6,400.7 102.9,399.7 103.1,398.2 103.4,396.5 103.6,394.6 103.9,392.6 104.1,390.6 104.4,388.7 104.6,387.0 104.9,385.6 105.1,384.5 105.4,383.8 105.7,383.5 105.9,383.7 106.2,384.3 106.4,385.3 106.7,386.7 106.9,388.3 107.2,390.2 107.4,392.1 107.7,394.1 107.9,396.1 108.2,397.8 108.5,399.3 108.7,400.5 109.0,401.3 109.2,401.7 109.5,401.6 109.7,401.2 110.0,400.2 110.2,399.0 110.5,397.4 110.8,395.6 111.0,393.6 111.3,391.6 111.5,389.7 111.8,387.9 112.0,386.3 112.3,385.0 112.5,384.1 112.8,383.6 113.0,383.6 113.3,383.9 113.6,384.7 113.8,385.9 114.1,387.4 114.3,389.2 114.6,391.1 114.8,393.1 115.1,395.1 115.3,397.0 115.6,398.6 115.9,400.0 116.1,401.0 116.4,401.6 116.6,401.7 116.9,401.5 117.1,400.7 117.4,399.7 117.6,398.2 117.9,396.5 118.1,394.6 118.4,392.6"/><polyline fill="none" stroke="#777777" stroke-width="1.0" stroke-linejoin="round" points="16.7,419.6 17.0,417.5 17.2,415.5 17.5,413.7 17.7,412.3 18.0,411.2 18.2,410.6 18.5,410.6 18.7,411.0 19.0,411.9 19.2,413.2 19.5,414.9 19.8,416.9 20.0,419.0 20.3,421.1 20.5,423.2 20.8,425.1 21.0,426.6 21.3,427.8 21.5,428.5 21.8,428.7 22.1,428.5 22.3,427.7 22.6,426.5 22.8,424.9 23.1,423.0 23.3,420.9 23.6,418.8 23.8,416.7 24.1,414.8 24.3,413.1 24.6,411.8 24.9,410.9 25.1,410.6 25.4,410.7 25.6,411.3 25.9,412.4 26.1,413.9 26.4,415.7 26.6,417.7 26.9,419.9 27.2,422.0 27.4,424.0 27.7,425.7 27.9,427.1 28.2,428.1 28.4,428.7 28.7,428.7 28.9,428.2 29.2,427.3 29.4,425.9 29.7,424.2 30.0,422.2 30.2,420.1 30.5,417.9 30.7,415.9 31.0,414.1 31.2,412.5 31.5,411.4 31.7,410.7 32.0,410.5 32.2,410.9 32.5,411.7 32.8,412.9 33.0,414.6 33.3,416.5 33.5,418.6 33.8,420.7 34.0,422.8 34.3,424.7 34.5,426.3 34.8,427.6 35.1,428.4 35.3,428.7 35.6,428.6 35.8,427.9 36.1,426.8 36.3,425.2 36.6,423.4 36.8,421.3 37.1,419.2 37.3,417.1 37.6,415.1 37.9,413.4 38.1,412.0 38.4,411.1 38.6,410.6 38.9,410.6 39.1,411.1 39.4,412.1 39.6,413.6 39.9,415.3 40.1,417.3 40.4,419.4 40.7,421.6 40.9,423.6 41.2,425.4 41.4,426.9 41.7,428.0 41.9,428.6 42.2,428.7 42.4,428.3 42.7,427.5 43.0,426.2 43.2,424.5 43.5,422.6 43.7,420.5 44.0,418.4 44.2,416.3 44.5,414.4 44.7,412.8 45.0,411.6 45.2,410.8 45.5,410.5 45.8,410.8 46.0,411.5 46.3,412.7 46.5,414.2 46.8,416.1 47.0,418.1 47.3,420.3 47.5,422.4 47.8,424.3 48.1,426.0 48.3,427.4 48.6,428.3 48.8,428.7 49.1,428.6 49.3,428.1 49.6,427.0 49.8,425.6 50.1,423.8 50.3,421.8 50.6,419.6 50.9,417.5 51.1,415.5 51.4,413.7 51.6,412.3 51.9,411.2 52.1,410.6 52.4,410.6 52.6,411.0 52.9,411.9 53.1,413.2 53.4,414.9 53.7,416.9 53.9,419.0 54.2,421.1 54.4,423.2 54.7,425.1 54.9,426.6 55.2,427.8 55.4,428.5 55.7,428.7 56.0,428.5 56.2,427.7 56.5,426.5 56.7,424.9 57.0,423.0 57.2,420.9 57.5,418.8 57.7,416.7 58.0,414.8 58.2,413.1 58.5,411.8 58.8,410.9 59.0,410.6 59.3,410.7 59.5,411.3 59.8,412.4 60.0,413.9 60.3,415.7 60.5,417.7 60.8,419.9 61.1,422.0 61.3,424.0 61.6,425.7 61.8,427.1 62.1,428.1 62.3,428.7 62.6,428.7 62.8,428.2 63.1,427.3 63.3,425.9 63.6,424.2 63.9,422.2 64.1,420.1 64.4,417.9 64.6,415.9 64.9,414.1 65.1,412.5 65.4,411.4 65.6,410.7 65.9,410.5 66.1,410.9 66.4,411.7 66.7,412.9 66.9,414.6 67.2,416.5 67.4,418.6 67.7,420.7 67.9,422.8 68.2,424.7 68.4,426.3 68.7,427.6 69.0,428.4 69.2,428.7 69.5,428.6 69.7,427.9 70.0,426.8 70.2,425.2 70.5,423.4 70.7,421.3 71.0,419.2 71.2,417.1 71.5,415.1 71.8,413.4 72.0,412.0 72.3,411.1 72.5,410.6 72.8,410.6 73.0,411.1 73.3,412.1 73.5,413.6 73.8,415.3 74.0,417.3 74.3,419.4 74.6,421.6 74.8,423.6 75.1,425.4 75.3,426.9 75.6,428.0 75.8,428.6 76.1,428.7 76.3,428.3 76.6,427.5 76.9,426.2 77.1,424.5 77.4,422.6 77.6,420.5 77.9,418.4 78.1,416.3 78.4,414.4 78.6,412.8 78.9,411.6 79.1,410.8 79.4,410.5 79.7,410.8 79.9,411.5 80.2,412.7 80.4,414.2 80.7,416.1 80.9,418.1 81.2,420.3 81.4,422.4 81.7,424.3 82.0,426.0 82.2,427.4 82.5,428.3 82.7,428.7 83.0,428.6 83.2,428.1 83.5,427.0 83.7,425.6 84.0,423.8 84.2,421.8 84.5,419.6 84.8,417.5 85.0,415.5 85.3,413.7 85.5,412.3 85.8,411.2 86.0,410.6 86.3,410.6 86.5,411.0 86.8,411.9 87.0,413.2 87.3,414.9 87.6,416.9 87.8,419.0 88.1,421.1 88.3,423.2 88.6,425.1 88.8,426.6 89.1,427.8 89.3,428.5 89.6,428.7 89.9,428.5 90.1,427.7 90.4,426.5 90.6,424.9 90.9,423.0 91.1,420.9 91.4,418.8 91.6,416.7 91.9,414.8 92.1,413.1 92.4,411.8 92.7,410.9 92.9,410.6 93.2,410.7 93.4,411.3 93.7,412.4 93.9,413.9 94.2,415.7 94.4,417.7 94.7,419.9 95.0,422.0 95.2,424.0 95.5,425.7 95.7,427.1 96.0,428.1 96.2,428.7 96.5,428.7 96.7,428.2 97.0,427.3 97.2,425.9 97.5,424.2 97.8,422.2 98.0,420.1 98.3,417.9 98.5,415.9 98.8,414.1 99.0,412.5 99.3,411.4 99.5,410.7 99.8,410.5 100.0,410.9 100.3,411.7 100.6,412.9 100.8,414.6 101.1,416.5 101.3,418.6 101.6,420.7 101.8,422.8 102.1,424.7 102.3,426.3 102.6,427.6 102.9,428.4 103.1,428.7 103.4,428.6 103.6,427.9 103.9,426.8 104.1,425.2 104.4,423.4 104.6,421.3 104.9,419.2 105.1,417.1 105.4,415.1 105.7,413.4 105.9,412.0 106.2,411.1 106.4,410.6 106.7,410.6 106.9,411.1 107.2,412.1 107.4,413.6 107.7,415.3 107.9,417.3 108.2,419.4 108.5,421.6 108.7,423.6 109.0,425.4 109.2,426.9 109.5,428.0 109.7,428.6 110.0,428.7 110.2,428.3 110.5,427.5 110.8,426.2 111.0,424.5 111.3,422.6 111.5,420.5 111.8,418.4 112.0,416.3 112.3,414.4 112.5,412.8 112.8,411.6 113.0,410.8 113.3,410.5 113.6,410.8 113.8,411.5 114.1,412.7 114.3,414.2 114.6,416.1 114.8,418.1 115.1,420.3 115.3,422.4 115.6,424.3 115.9,426.0 116.1,427.4 116.4,428.3 116.6,428.7 116.9,428.6 117.1,428.1 117.4,427.0 117.6,425.6 117.9,423.8 118.1,421.8 118.4,419.6"/><polyline fill="none" stroke="#777777" stroke-width="1.0" stroke-linejoin="round" points="16.7,446.7 17.0,444.4 17.2,442.3 17.5,440.4 17.7,439.0 18.0,438.0 18.2,437.6 18.5,437.7 18.7,438.4 19.0,439.7 19.2,441.3 19.5,443.4 19.8,445.6 20.0,447.9 20.3,450.1 20.5,452.1 20.8,453.7 21.0,454.9 21.3,455.6 21.5,455.7 21.8,455.3 22.1,454.3 22.3,452.8 22.6,450.9 22.8,448.8 23.1,446.5 23.3,444.2 23.6,442.1 23.8,440.3 24.1,438.9 24.3,437.9 24.6,437.6 24.9,437.7 25.1,438.5 25.4,439.8 25.6,441.5 25.9,443.5 26.1,445.7 26.4,448.0 26.6,450.2 26.9,452.2 27.2,453.8 27.4,455.0 27.7,455.6 27.9,455.7 28.2,455.2 28.4,454.2 28.7,452.7 28.9,450.8 29.2,448.6 29.4,446.4 29.7,444.1 30.0,442.0 30.2,440.2 30.5,438.8 30.7,437.9 31.0,437.6 31.2,437.8 31.5,438.6 31.7,439.9 32.0,441.6 32.2,443.6 32.5,445.9 32.8,448.1 33.0,450.3 33.3,452.3 33.5,453.9 33.8,455.0 34.0,455.7 34.3,455.7 34.5,455.2 34.8,454.1 35.1,452.6 35.3,450.7 35.6,448.5 35.8,446.2 36.1,444.0 36.3,441.9 36.6,440.1 36.8,438.7 37.1,437.9 37.3,437.6 37.6,437.8 37.9,438.6 38.1,440.0 38.4,441.7 38.6,443.8 38.9,446.0 39.1,448.3 39.4,450.5 39.6,452.4 39.9,454.0 40.1,455.1 40.4,455.7 40.7,455.7 40.9,455.1 41.2,454.0 41.4,452.5 41.7,450.5 41.9,448.4 42.2,446.1 42.4,443.8 42.7,441.8 43.0,440.0 43.2,438.7 43.5,437.8 43.7,437.6 44.0,437.8 44.2,438.7 44.5,440.1 44.7,441.8 45.0,443.9 45.2,446.1 45.5,448.4 45.8,450.6 46.0,452.5 46.3,454.1 46.5,455.1 46.8,455.7 47.0,455.7 47.3,455.1 47.5,453.9 47.8,452.4 48.1,450.4 48.3,448.2 48.6,445.9 48.8,443.7 49.1,441.6 49.3,439.9 49.6,438.6 49.8,437.8 50.1,437.6 50.3,437.9 50.6,438.8 50.9,440.2 51.1,441.9 51.4,444.0 51.6,446.3 51.9,448.6 52.1,450.7 52.4,452.6 52.6,454.1 52.9,455.2 53.1,455.7 53.4,455.6 53.7,455.0 53.9,453.9 54.2,452.2 54.4,450.3 54.7,448.1 54.9,445.8 55.2,443.6 55.4,441.5 55.7,439.8 56.0,438.5 56.2,437.8 56.5,437.6 56.7,437.9 57.0,438.8 57.2,440.3 57.5,442.1 57.7,444.2 58.0,446.4 58.2,448.7 58.5,450.9 58.8,452.7 59.0,454.2 59.3,455.2 59.5,455.7 59.8,455.6 60.0,455.0 60.3,453.8 60.5,452.1 60.8,450.1 61.1,447.9 61.3,445.6 61.6,443.4 61.8,441.4 62.1,439.7 62.3,438.5 62.6,437.7 62.8,437.6 63.1,438.0 63.3,438.9 63.6,440.4 63.9,442.2 64.1,444.3 64.4,446.6 64.6,448.8 64.9,451.0 65.1,452.8 65.4,454.3 65.6,455.3 65.9,455.7 66.1,455.6 66.4,454.9 66.7,453.7 66.9,452.0 67.2,450.0 67.4,447.8 67.7,445.5 67.9,443.3 68.2,441.3 68.4,439.6 68.7,438.4 69.0,437.7 69.2,437.6 69.5,438.0 69.7,439.0 70.0,440.5 70.2,442.3 70.5,444.5 70.7,446.7 71.0,449.0 71.2,451.1 71.5,452.9 71.8,454.4 72.0,455.3 72.3,455.7 72.5,455.6 72.8,454.8 73.0,453.6 73.3,451.9 73.5,449.9 73.8,447.7 74.0,445.4 74.3,443.2 74.6,441.2 74.8,439.5 75.1,438.3 75.3,437.7 75.6,437.6 75.8,438.1 76.1,439.1 76.3,440.6 76.6,442.4 76.9,444.6 77.1,446.9 77.4,449.1 77.6,451.2 77.9,453.0 78.1,454.5 78.4,455.4 78.6,455.7 78.9,455.5 79.1,454.8 79.4,453.5 79.7,451.8 79.9,449.7 80.2,447.5 80.4,445.2 80.7,443.0 80.9,441.1 81.2,439.4 81.4,438.3 81.7,437.7 82.0,437.6 82.2,438.1 82.5,439.2 82.7,440.7 83.0,442.6 83.2,444.7 83.5,447.0 83.7,449.3 84.0,451.4 84.2,453.1 84.5,454.5 84.8,455.4 85.0,455.7 85.3,455.5 85.5,454.7 85.8,453.4 86.0,451.7 86.3,449.6 86.5,447.4 86.8,445.1 87.0,442.9 87.3,440.9 87.6,439.4 87.8,438.2 88.1,437.6 88.3,437.6 88.6,438.2 88.8,439.2 89.1,440.8 89.3,442.7 89.6,444.9 89.9,447.2 90.1,449.4 90.4,451.5 90.6,453.2 90.9,454.6 91.1,455.5 91.4,455.7 91.6,455.5 91.9,454.6 92.1,453.3 92.4,451.5 92.7,449.5 92.9,447.2 93.2,444.9 93.4,442.8 93.7,440.8 93.9,439.3 94.2,438.2 94.4,437.6 94.7,437.6 95.0,438.2 95.2,439.3 95.5,440.9 95.7,442.8 96.0,445.0 96.2,447.3 96.5,449.5 96.7,451.6 97.0,453.3 97.2,454.7 97.5,455.5 97.8,455.7 98.0,455.4 98.3,454.6 98.5,453.2 98.8,451.4 99.0,449.3 99.3,447.1 99.5,444.8 99.8,442.6 100.0,440.7 100.3,439.2 100.6,438.1 100.8,437.6 101.1,437.6 101.3,438.3 101.6,439.4 101.8,441.0 102.1,443.0 102.3,445.2 102.6,447.4 102.9,449.7 103.1,451.7 103.4,453.4 103.6,454.7 103.9,455.5 104.1,455.7 104.4,455.4 104.6,454.5 104.9,453.1 105.1,451.3 105.4,449.2 105.7,446.9 105.9,444.7 106.2,442.5 106.4,440.6 106.7,439.1 106.9,438.1 107.2,437.6 107.4,437.7 107.7,438.3 107.9,439.5 108.2,441.1 108.5,443.1 108.7,445.3 109.0,447.6 109.2,449.8 109.5,451.8 109.7,453.5 110.0,454.8 110.2,455.6 110.5,455.7 110.8,455.4 111.0,454.4 111.3,453.0 111.5,451.2 111.8,449.1 112.0,446.8 112.3,444.5 112.5,442.4 112.8,440.5 113.0,439.0 113.3,438.0 113.6,437.6 113.8,437.7 114.1,438.4 114.3,439.6 114.6,441.2 114.8,443.2 115.1,445.4 115.3,447.7 115.6,449.9 115.9,452.0 116.1,453.6 116.4,454.9 116.6,455.6 116.9,455.7 117.1,455.3 117.4,454.3 117.6,452.9 117.9,451.0 118.1,448.9 118.4,446.7"/><polyline fill="none" stroke="#777777" stroke-width="1.0" stroke-linejoin="round" points="16.7,474.1 17.0,473.6 17.5,473.0 18.0,472.3 18.6,471.4 19.2,470.6 19.9,469.8 20.6,469.0 21.3,468.3 22.1,467.7 22.9,467.1 23.7,466.4 24.6,465.8 25.5,465.3 26.4,464.9 27.2,464.5 28.0,464.3 28.7,464.3 29.4,464.3 30.0,464.5 30.7,464.7 31.3,465.1 31.9,465.5 32.6,465.9 33.3,466.3 34.1,466.9 34.9,467.5 35.7,468.2 36.6,468.9 37.4,469.7 38.3,470.4 39.2,471.1 40.0,471.7 40.8,472.2 41.7,472.7 42.5,473.1 43.3,473.6 44.2,473.9 45.0,474.2 45.8,474.5 46.7,474.6 47.5,474.6 48.3,474.5 49.2,474.3 50.0,474.1 50.8,473.8 51.7,473.5 52.5,473.2 53.3,473.0 54.2,472.8 55.0,472.5 55.8,472.2 56.7,471.9 57.5,471.7 58.3,471.5 59.2,471.3 60.0,471.3 60.8,471.3 61.7,471.4 62.5,471.5 63.3,471.7 64.2,472.0 65.0,472.2 65.8,472.5 66.7,472.7 67.5,473.0 68.4,473.4 69.2,473.7 70.1,474.1 70.9,474.5 71.8,474.9 72.6,475.2 73.3,475.4 74.1,475.6 74.7,475.7 75.4,475.9 76.0,475.9 76.6,476.0 77.3,476.0 77.9,476.0 78.7,475.9 79.4,475.8 80.3,475.6 81.1,475.4 82.0,475.1 82.9,474.8 83.7,474.6 84.6,474.3 85.3,474.1 86.1,473.8 86.8,473.6 87.4,473.4 88.1,473.1 88.7,472.9 89.4,472.8 90.0,472.7 90.7,472.7 91.3,472.8 92.0,473.0 92.6,473.2 93.2,473.4 93.9,473.8 94.6,474.1 95.3,474.5 96.0,475.0 96.8,475.5 97.6,476.2 98.5,476.9 99.3,477.6 100.2,478.4 101.1,479.1 101.9,479.8 102.7,480.3 103.4,480.8 104.1,481.3 104.8,481.8 105.4,482.2 106.1,482.5 106.7,482.8 107.3,482.9 108.0,483.0 108.7,482.9 109.3,482.8 110.0,482.5 110.7,482.2 111.4,481.8 112.0,481.3 112.7,480.8 113.3,480.3 114.0,479.8 114.7,479.1 115.5,478.3 116.2,477.5 116.9,476.7 117.5,476.0 118.0,475.4 118.4,475.0"/><polyline fill="none" stroke="#777777" stroke-width="1.0" stroke-linejoin="round" points="16.7,501.0 16.9,500.5 17.3,499.9 17.6,499.1 18.1,498.2 18.6,497.3 19.0,496.5 19.5,495.7 20.0,495.0 20.5,494.4 21.0,493.7 21.5,493.1 22.0,492.6 22.5,492.1 23.0,491.7 23.5,491.4 24.0,491.3 24.5,491.3 25.0,491.5 25.4,491.7 25.9,492.1 26.4,492.6 26.9,493.1 27.4,493.7 28.0,494.3 28.6,495.1 29.3,496.0 30.0,497.0 30.7,498.1 31.4,499.1 32.1,500.1 32.7,501.0 33.3,501.7 33.9,502.2 34.4,502.6 34.8,502.9 35.2,503.2 35.7,503.3 36.2,503.4 36.7,503.5 37.3,503.4 38.0,503.2 38.8,502.9 39.7,502.4 40.6,501.9 41.5,501.3 42.4,500.9 43.2,500.5 44.0,500.3 44.7,500.3 45.4,500.4 46.1,500.6 46.8,500.9 47.4,501.2 48.0,501.5 48.7,501.8 49.3,502.1 50.0,502.3 50.7,502.5 51.3,502.8 52.0,503.0 52.7,503.2 53.3,503.3 54.0,503.4 54.7,503.4 55.3,503.3 56.0,503.0 56.7,502.7 57.3,502.4 58.0,502.0 58.7,501.6 59.3,501.3 60.0,501.0 60.7,500.8 61.3,500.5 61.9,500.3 62.6,500.1 63.2,499.9 63.9,499.7 64.6,499.7 65.3,499.7 66.1,499.8 66.9,500.0 67.8,500.3 68.7,500.7 69.5,501.0 70.4,501.4 71.2,501.6 72.0,501.7 72.7,501.6 73.4,501.5 74.1,501.3 74.7,501.1 75.4,500.8 76.0,500.5 76.7,500.2 77.3,499.9 78.0,499.6 78.7,499.3 79.3,498.9 80.0,498.6 80.7,498.2 81.3,498.0 82.0,497.8 82.7,497.7 83.3,497.7 84.0,497.8 84.7,498.0 85.3,498.3 86.0,498.6 86.7,498.9 87.3,499.2 88.0,499.4 88.7,499.6 89.3,499.9 89.9,500.2 90.6,500.5 91.2,500.7 91.9,500.9 92.6,501.0 93.3,501.0 94.1,500.8 94.9,500.4 95.8,500.0 96.7,499.4 97.5,498.9 98.4,498.5 99.2,498.2 100.0,498.1 100.7,498.1 101.5,498.3 102.2,498.6 102.8,499.0 103.5,499.4 104.1,499.9 104.7,500.4 105.3,501.0 105.9,501.6 106.4,502.4 106.9,503.2 107.4,504.0 107.9,504.9 108.4,505.7 108.8,506.4 109.3,507.0 109.8,507.5 110.4,508.0 110.9,508.4 111.4,508.8 111.9,509.2 112.4,509.4 112.9,509.6 113.3,509.7 113.7,509.7 114.1,509.6 114.4,509.4 114.8,509.2 115.1,508.9 115.4,508.5 115.7,508.1 116.0,507.7 116.4,507.1 116.7,506.4 117.1,505.7 117.5,504.9 117.9,504.1 118.2,503.4 118.5,502.8 118.7,502.3"/><polyline fill="none" stroke="#777777" stroke-width="1.0" stroke-linejoin="round" points="16.7,527.7 16.9,527.1 17.1,526.4 17.5,525.5 17.8,524.5 18.2,523.5 18.6,522.5 19.0,521.7 19.3,521.0 19.7,520.4 20.0,519.9 20.3,519.4 20.7,519.0 21.0,518.7 21.3,518.5 21.7,518.4 22.0,518.3 22.3,518.4 22.7,518.7 23.0,519.0 23.3,519.4 23.6,519.9 24.0,520.4 24.3,521.0 24.7,521.7 25.1,522.4 25.5,523.3 25.9,524.3 26.3,525.4 26.7,526.4 27.2,527.4 27.6,528.3 28.0,529.0 28.4,529.6 28.8,530.1 29.1,530.5 29.5,530.8 29.9,531.1 30.3,531.2 30.8,531.3 31.3,531.3 32.0,531.1 32.6,530.6 33.4,530.1 34.1,529.5 34.9,528.8 35.7,528.3 36.5,527.9 37.3,527.7 38.1,527.7 39.0,528.0 39.8,528.4 40.6,528.9 41.5,529.4 42.3,529.8 43.2,530.1 44.0,530.1 44.8,529.8 45.7,529.3 46.5,528.6 47.3,527.9 48.2,527.1 49.0,526.5 49.8,525.9 50.7,525.7 51.5,525.7 52.3,525.9 53.2,526.2 54.0,526.7 54.8,527.1 55.7,527.5 56.5,527.8 57.3,527.9 58.2,527.8 59.0,527.5 59.8,527.1 60.6,526.7 61.4,526.3 62.2,525.9 63.1,525.7 64.0,525.7 64.9,525.9 65.9,526.4 67.0,527.0 68.0,527.7 69.0,528.4 70.1,529.0 71.1,529.4 72.0,529.7 72.9,529.7 73.8,529.4 74.6,529.1 75.4,528.6 76.2,528.2 77.0,527.8 77.8,527.5 78.7,527.4 79.5,527.5 80.3,527.8 81.2,528.2 82.0,528.7 82.8,529.1 83.7,529.5 84.5,529.7 85.3,529.7 86.2,529.4 87.0,528.9 87.8,528.2 88.7,527.5 89.5,526.8 90.3,526.1 91.2,525.7 92.0,525.4 92.8,525.4 93.7,525.7 94.5,526.2 95.3,526.7 96.2,527.2 97.0,527.6 97.8,527.9 98.7,527.9 99.5,527.6 100.4,527.1 101.3,526.4 102.2,525.6 103.0,524.8 103.9,524.1 104.6,523.6 105.3,523.4 106.0,523.5 106.5,523.8 107.1,524.2 107.5,524.8 108.0,525.5 108.4,526.2 108.9,526.9 109.3,527.7 109.8,528.5 110.2,529.4 110.7,530.4 111.1,531.5 111.5,532.5 111.9,533.5 112.3,534.3 112.7,535.0 113.0,535.5 113.4,536.0 113.7,536.4 114.0,536.7 114.3,536.9 114.7,537.0 115.0,536.9 115.3,536.7 115.7,536.3 116.1,535.6 116.6,534.6 117.0,533.6 117.5,532.6 117.8,531.7 118.2,530.9 118.4,530.3"/><polyline fill="none" stroke="#777777" stroke-width="1.0" stroke-linejoin="round" points="16.7,554.6 16.8,554.0 17.0,553.2 17.3,552.3 17.5,551.3 17.8,550.2 18.1,549.2 18.4,548.4 18.7,547.7 18.9,547.1 19.2,546.6 19.4,546.2 19.6,545.9 19.9,545.6 20.1,545.4 20.4,545.4 20.7,545.4 21.0,545.5 21.3,545.8 21.6,546.1 22.0,546.6 22.3,547.1 22.7,547.7 23.0,548.3 23.3,549.0 23.7,549.8 24.0,550.8 24.4,552.0 24.7,553.1 25.0,554.3 25.4,555.3 25.7,556.3 26.0,557.0 26.3,557.5 26.5,558.0 26.7,558.3 26.9,558.6 27.1,558.7 27.3,558.8 27.6,558.7 28.0,558.6 28.5,558.3 29.0,557.8 29.5,557.1 30.1,556.4 30.8,555.7 31.4,555.1 32.0,554.6 32.7,554.3 33.3,554.4 33.9,554.6 34.6,555.0 35.2,555.5 35.9,556.0 36.6,556.5 37.3,556.7 38.0,556.7 38.7,556.5 39.5,555.9 40.2,555.3 41.0,554.5 41.7,553.7 42.5,553.1 43.2,552.6 44.0,552.3 44.8,552.4 45.5,552.7 46.3,553.2 47.1,553.7 47.9,554.3 48.6,554.8 49.3,555.2 50.0,555.4 50.6,555.3 51.1,555.1 51.6,554.7 52.0,554.3 52.4,553.9 52.9,553.5 53.4,553.3 54.0,553.3 54.7,553.5 55.4,553.9 56.1,554.5 56.9,555.1 57.7,555.7 58.5,556.2 59.2,556.6 60.0,556.7 60.8,556.6 61.5,556.2 62.3,555.7 63.0,555.1 63.8,554.4 64.5,553.9 65.3,553.5 66.0,553.3 66.7,553.3 67.4,553.6 68.0,554.0 68.7,554.5 69.4,554.9 70.0,555.3 70.7,555.6 71.3,555.7 72.0,555.5 72.7,555.1 73.3,554.5 74.0,553.9 74.6,553.3 75.3,552.8 76.0,552.5 76.7,552.3 77.4,552.5 78.2,552.8 78.9,553.3 79.7,553.9 80.5,554.5 81.2,555.0 82.0,555.4 82.7,555.7 83.3,555.7 83.9,555.6 84.5,555.3 85.0,555.0 85.6,554.7 86.2,554.5 86.7,554.3 87.3,554.3 88.0,554.5 88.6,554.9 89.3,555.4 89.9,556.0 90.6,556.5 91.3,557.0 92.0,557.2 92.7,557.3 93.4,557.0 94.1,556.5 94.9,555.8 95.7,555.0 96.4,554.3 97.2,553.6 97.9,553.0 98.7,552.7 99.4,552.7 100.0,553.0 100.7,553.4 101.4,553.9 102.0,554.4 102.7,554.8 103.3,555.0 104.0,555.0 104.7,554.7 105.4,554.0 106.1,553.2 106.8,552.3 107.5,551.5 108.1,550.8 108.8,550.4 109.3,550.3 109.9,550.7 110.3,551.5 110.8,552.5 111.2,553.7 111.6,555.0 111.9,556.2 112.3,557.4 112.7,558.3 113.0,559.2 113.4,560.1 113.7,561.0 114.0,561.8 114.3,562.6 114.7,563.1 115.0,563.5 115.3,563.7 115.7,563.5 116.1,563.0 116.6,562.2 117.0,561.3 117.5,560.4 117.8,559.5 118.2,558.8 118.4,558.3"/><polyline fill="none" stroke="#777777" stroke-width="1.0" stroke-linejoin="round" points="16.7,582.1 16.8,581.5 17.0,580.7 17.3,579.7 17.5,578.7 17.8,577.6 18.1,576.6 18.4,575.7 18.7,575.0 18.9,574.4 19.2,573.9 19.4,573.5 19.7,573.2 19.9,572.9 20.2,572.7 20.4,572.6 20.7,572.6 20.9,572.7 21.2,572.8 21.4,573.1 21.6,573.4 21.9,573.8 22.1,574.3 22.4,574.9 22.7,575.7 23.0,576.6 23.3,577.7 23.7,579.0 24.0,580.4 24.4,581.8 24.7,583.1 25.1,584.2 25.3,585.0 25.5,585.6 25.7,586.1 25.8,586.5 25.9,586.8 26.0,586.9 26.1,586.9 26.3,586.8 26.7,586.6 27.1,586.2 27.6,585.5 28.2,584.6 28.8,583.7 29.5,582.7 30.1,581.9 30.8,581.2 31.3,580.7 31.9,580.6 32.3,580.7 32.8,581.0 33.2,581.4 33.7,581.8 34.2,582.1 34.7,582.3 35.3,582.3 36.0,582.1 36.7,581.6 37.4,581.0 38.2,580.3 39.0,579.7 39.8,579.2 40.6,578.8 41.3,578.7 42.1,579.0 42.8,579.5 43.6,580.2 44.3,581.0 45.1,581.8 45.8,582.5 46.6,583.1 47.3,583.4 48.1,583.5 48.8,583.4 49.6,583.2 50.3,582.9 51.0,582.6 51.8,582.2 52.6,581.9 53.3,581.7 54.1,581.4 55.0,581.2 55.8,580.9 56.6,580.6 57.5,580.4 58.3,580.2 59.2,580.0 60.0,579.9 60.8,580.0 61.6,580.0 62.4,580.2 63.3,580.4 64.1,580.6 64.9,580.8 65.8,581.1 66.7,581.3 67.6,581.5 68.6,581.8 69.7,582.1 70.8,582.4 71.8,582.7 72.8,582.9 73.8,583.0 74.7,583.0 75.5,582.8 76.2,582.5 76.9,582.1 77.5,581.7 78.2,581.2 78.8,580.8 79.4,580.5 80.0,580.3 80.6,580.3 81.2,580.5 81.8,580.7 82.4,581.0 82.9,581.2 83.5,581.5 84.1,581.6 84.7,581.7 85.2,581.5 85.8,581.2 86.4,580.9 86.9,580.5 87.5,580.1 88.1,579.8 88.7,579.6 89.3,579.7 90.0,580.0 90.8,580.6 91.5,581.3 92.3,582.1 93.1,582.9 93.9,583.6 94.6,584.1 95.3,584.3 96.0,584.3 96.6,584.0 97.2,583.5 97.8,582.9 98.4,582.3 98.9,581.7 99.5,581.2 100.0,581.0 100.5,581.0 101.0,581.2 101.5,581.5 101.9,581.8 102.4,582.2 102.9,582.4 103.4,582.5 104.0,582.3 104.7,581.8 105.4,581.0 106.2,580.0 107.0,578.9 107.9,577.8 108.6,577.0 109.4,576.4 110.0,576.3 110.5,576.7 111.0,577.5 111.5,578.7 111.9,580.0 112.2,581.3 112.6,582.7 113.0,584.0 113.3,585.0 113.7,585.9 114.1,586.8 114.4,587.7 114.7,588.5 115.0,589.2 115.4,589.8 115.7,590.2 116.0,590.3 116.3,590.2 116.7,589.8 117.0,589.1 117.4,588.3 117.7,587.5 118.0,586.7 118.2,586.1 118.4,585.7"/><polyline fill="none" stroke="#777777" stroke-width="1.0" stroke-linejoin="round" points="16.7,609.0 16.8,608.4 17.0,607.6 17.2,606.6 17.4,605.5 17.7,604.3 17.9,603.3 18.2,602.4 18.4,601.7 18.6,601.1 18.8,600.7 19.0,600.3 19.2,600.0 19.4,599.7 19.6,599.6 19.8,599.6 20.0,599.7 20.2,599.9 20.5,600.2 20.7,600.6 21.0,601.0 21.2,601.6 21.5,602.2 21.7,602.9 22.0,603.7 22.3,604.5 22.5,605.5 22.8,606.6 23.0,607.8 23.3,608.9 23.5,610.0 23.8,610.9 24.0,611.7 24.2,612.3 24.3,612.8 24.5,613.2 24.6,613.5 24.7,613.7 24.9,613.8 25.1,613.8 25.3,613.7 25.7,613.3 26.0,612.8 26.4,612.1 26.9,611.3 27.3,610.5 27.8,609.7 28.2,609.1 28.7,608.7 29.1,608.6 29.5,608.6 29.9,608.7 30.2,609.0 30.7,609.2 31.1,609.4 31.5,609.5 32.0,609.4 32.5,609.1 33.1,608.7 33.7,608.1 34.2,607.5 34.9,607.0 35.5,606.5 36.1,606.2 36.7,606.1 37.2,606.2 37.8,606.6 38.4,607.1 39.0,607.7 39.5,608.4 40.1,609.0 40.7,609.4 41.3,609.7 42.0,609.7 42.6,609.7 43.2,609.6 43.9,609.4 44.5,609.1 45.2,608.8 45.9,608.6 46.7,608.3 47.4,608.1 48.3,607.8 49.1,607.4 50.0,607.1 50.9,606.8 51.7,606.5 52.6,606.4 53.3,606.3 54.1,606.5 54.7,606.7 55.4,607.1 56.0,607.5 56.6,607.9 57.3,608.3 57.9,608.7 58.7,609.0 59.4,609.2 60.3,609.5 61.1,609.7 62.0,609.9 62.9,610.0 63.7,610.1 64.6,610.1 65.3,610.1 66.1,609.8 66.8,609.5 67.4,609.0 68.1,608.5 68.7,608.0 69.4,607.5 70.0,607.2 70.7,607.0 71.3,607.0 72.0,607.1 72.6,607.3 73.2,607.6 73.9,607.9 74.6,608.2 75.3,608.5 76.0,608.7 76.8,609.0 77.6,609.2 78.5,609.5 79.3,609.8 80.2,610.1 81.1,610.2 81.9,610.3 82.7,610.3 83.4,610.2 84.1,609.9 84.8,609.6 85.4,609.1 86.1,608.7 86.7,608.3 87.3,607.9 88.0,607.7 88.7,607.5 89.3,607.3 90.0,607.1 90.7,607.0 91.3,606.9 92.0,606.8 92.7,606.9 93.3,607.0 94.0,607.3 94.7,607.7 95.3,608.2 96.0,608.8 96.7,609.3 97.3,609.8 98.0,610.1 98.7,610.3 99.3,610.3 100.0,610.1 100.8,609.9 101.5,609.5 102.1,609.1 102.8,608.8 103.4,608.5 104.0,608.3 104.5,608.3 105.0,608.5 105.4,608.7 105.8,608.9 106.1,609.1 106.5,609.2 106.9,609.2 107.3,609.0 107.8,608.5 108.3,607.7 108.8,606.8 109.4,605.8 109.9,604.9 110.4,604.1 110.9,603.5 111.3,603.4 111.7,603.7 112.1,604.2 112.4,605.1 112.8,606.1 113.1,607.2 113.4,608.3 113.7,609.4 114.0,610.3 114.3,611.3 114.7,612.4 115.0,613.6 115.4,614.7 115.7,615.8 116.0,616.7 116.4,617.3 116.7,617.7 117.0,617.6 117.3,617.2 117.6,616.6 117.8,615.8 118.1,614.9 118.3,614.1 118.5,613.4 118.7,613.0"/><polyline fill="none" stroke="#777777" stroke-width="1.0" stroke-linejoin="round" points="16.7,635.7 16.8,635.1 17.0,634.2 17.2,633.2 17.4,632.1 17.7,631.0 18.0,630.0 18.2,629.0 18.4,628.3 18.6,627.8 18.8,627.3 18.9,626.9 19.1,626.6 19.2,626.4 19.4,626.3 19.6,626.3 19.7,626.3 19.9,626.5 20.1,626.8 20.3,627.2 20.5,627.6 20.7,628.2 20.9,628.8 21.1,629.5 21.3,630.3 21.6,631.3 21.8,632.5 22.1,633.8 22.3,635.1 22.6,636.5 22.9,637.7 23.1,638.8 23.3,639.7 23.5,640.3 23.7,640.9 23.8,641.3 23.9,641.7 24.0,641.9 24.2,641.9 24.4,641.9 24.7,641.7 25.0,641.2 25.4,640.5 25.8,639.5 26.2,638.5 26.7,637.5 27.1,636.5 27.6,635.6 28.0,635.0 28.4,634.6 28.8,634.3 29.2,634.2 29.7,634.1 30.1,634.1 30.5,634.1 30.9,634.1 31.3,634.1 31.7,634.0 32.1,634.0 32.5,634.0 32.9,634.1 33.3,634.2 33.7,634.3 34.2,634.4 34.7,634.6 35.2,634.9 35.9,635.3 36.5,635.8 37.2,636.4 38.0,636.9 38.7,637.3 39.4,637.6 40.0,637.7 40.6,637.6 41.2,637.3 41.7,636.8 42.3,636.3 42.8,635.8 43.4,635.3 44.0,634.9 44.7,634.6 45.4,634.4 46.1,634.3 46.8,634.2 47.6,634.1 48.4,634.1 49.2,634.1 49.9,634.2 50.7,634.3 51.4,634.6 52.0,634.9 52.7,635.3 53.4,635.8 54.0,636.2 54.7,636.6 55.3,636.9 56.0,637.0 56.7,637.0 57.3,636.9 58.0,636.7 58.7,636.4 59.3,636.2 60.0,635.9 60.7,635.6 61.3,635.4 62.0,635.2 62.7,634.9 63.3,634.7 64.0,634.5 64.7,634.2 65.3,634.1 66.0,634.0 66.7,634.1 67.3,634.3 68.0,634.6 68.7,635.0 69.3,635.5 70.0,636.0 70.7,636.5 71.3,636.8 72.0,637.0 72.7,637.0 73.3,637.0 74.0,636.8 74.7,636.6 75.3,636.4 76.0,636.1 76.7,635.9 77.3,635.7 78.0,635.5 78.7,635.2 79.3,635.0 80.0,634.8 80.7,634.5 81.3,634.4 82.0,634.3 82.7,634.3 83.3,634.5 84.0,634.9 84.7,635.3 85.3,635.8 86.0,636.3 86.7,636.7 87.3,636.9 88.0,637.0 88.7,636.8 89.3,636.4 90.0,635.9 90.7,635.3 91.3,634.7 92.0,634.2 92.7,633.8 93.3,633.7 94.0,633.7 94.7,634.0 95.4,634.4 96.0,634.9 96.7,635.4 97.4,635.8 98.0,636.2 98.7,636.3 99.3,636.3 99.9,636.2 100.5,636.0 101.1,635.7 101.7,635.5 102.2,635.2 102.8,635.0 103.3,635.0 103.9,635.1 104.4,635.4 104.9,635.8 105.4,636.2 105.9,636.5 106.3,636.8 106.8,636.9 107.3,636.7 107.8,636.3 108.4,635.5 108.9,634.6 109.5,633.6 110.0,632.5 110.5,631.6 110.9,630.8 111.3,630.3 111.7,630.1 112.0,629.9 112.2,629.9 112.4,629.9 112.6,630.1 112.8,630.5 113.1,631.0 113.3,631.7 113.6,632.6 114.0,633.9 114.3,635.4 114.7,637.0 115.0,638.6 115.4,640.1 115.7,641.4 116.0,642.3 116.3,643.0 116.5,643.6 116.7,644.0 116.9,644.3 117.1,644.5 117.3,644.5 117.4,644.5 117.6,644.3 117.8,644.0 117.9,643.5 118.1,642.9 118.2,642.1 118.4,641.4 118.5,640.7 118.6,640.1 118.7,639.7"/><polyline fill="none" stroke="#777777" stroke-width="1.0" stroke-linejoin="round" points="16.7,663.0 16.8,662.5 16.9,661.7 17.1,660.8 17.2,659.8 17.4,658.8 17.6,657.9 17.8,657.0 18.0,656.3 18.2,655.8 18.4,655.3 18.6,654.9 18.8,654.5 19.0,654.2 19.2,654.0 19.4,653.9 19.6,653.9 19.8,654.1 20.0,654.3 20.1,654.7 20.3,655.1 20.5,655.6 20.7,656.2 20.9,656.9 21.1,657.7 21.3,658.6 21.5,659.7 21.8,660.9 22.0,662.1 22.3,663.4 22.5,664.5 22.7,665.6 22.9,666.3 23.1,666.9 23.2,667.4 23.3,667.8 23.4,668.1 23.5,668.2 23.6,668.3 23.8,668.2 24.0,667.9 24.3,667.4 24.5,666.7 24.9,665.7 25.2,664.7 25.5,663.6 25.9,662.6 26.3,661.8 26.7,661.3 27.1,661.0 27.5,661.0 27.9,661.1 28.3,661.3 28.8,661.6 29.2,661.8 29.6,662.0 30.0,662.1 30.4,662.0 30.7,661.8 31.0,661.5 31.3,661.2 31.6,660.9 31.9,660.7 32.3,660.7 32.7,660.7 33.1,661.0 33.6,661.5 34.0,662.1 34.5,662.8 35.1,663.5 35.6,664.1 36.1,664.5 36.7,664.7 37.2,664.7 37.8,664.5 38.3,664.1 38.9,663.7 39.5,663.2 40.1,662.7 40.7,662.3 41.3,662.1 42.0,661.9 42.6,661.7 43.3,661.6 44.0,661.6 44.6,661.5 45.3,661.5 46.0,661.6 46.7,661.7 47.3,661.9 48.0,662.2 48.6,662.5 49.2,662.9 49.9,663.3 50.6,663.6 51.3,663.8 52.0,663.9 52.8,663.8 53.6,663.6 54.4,663.2 55.2,662.8 56.1,662.4 57.0,662.0 57.8,661.8 58.7,661.7 59.5,661.7 60.3,662.0 61.2,662.3 62.0,662.6 62.8,663.0 63.7,663.3 64.5,663.6 65.3,663.7 66.2,663.6 67.0,663.4 67.8,663.1 68.7,662.7 69.5,662.3 70.3,662.0 71.2,661.8 72.0,661.7 72.8,661.7 73.7,661.8 74.5,662.1 75.3,662.3 76.2,662.6 77.0,662.8 77.8,663.0 78.7,663.0 79.5,662.9 80.3,662.7 81.2,662.4 82.0,662.0 82.8,661.7 83.7,661.5 84.5,661.3 85.3,661.3 86.2,661.4 87.0,661.8 87.8,662.2 88.7,662.7 89.5,663.2 90.3,663.6 91.2,663.8 92.0,663.9 92.8,663.8 93.7,663.4 94.6,663.0 95.5,662.4 96.3,661.9 97.1,661.4 97.9,661.1 98.7,661.0 99.4,661.1 100.0,661.5 100.6,662.0 101.2,662.6 101.7,663.1 102.3,663.7 102.8,664.1 103.3,664.3 103.9,664.4 104.4,664.2 104.9,664.0 105.5,663.8 106.0,663.5 106.4,663.2 106.9,663.0 107.3,663.0 107.7,663.2 108.1,663.5 108.4,664.0 108.7,664.4 109.0,664.9 109.3,665.1 109.7,665.2 110.0,665.0 110.4,664.4 110.8,663.4 111.2,662.1 111.6,660.7 112.0,659.4 112.4,658.2 112.8,657.2 113.1,656.7 113.3,656.6 113.6,656.8 113.8,657.3 113.9,657.9 114.1,658.6 114.3,659.4 114.5,660.2 114.7,661.0 114.9,661.8 115.2,662.7 115.4,663.7 115.7,664.7 115.9,665.7 116.2,666.7 116.4,667.6 116.7,668.3 116.9,669.0 117.1,669.5 117.3,670.0 117.5,670.5 117.6,670.8 117.8,671.2 117.9,671.4 118.0,671.7"/></svg>
<div style="left:144.3px;top:25.5px;width:10.4px;height:643px;background:#3a3a3a"></div>
<div style="left:154.7px;top:19px;width:7.3px;height:650px;background:#414141"></div>
<div style="left:146.2px;top:26px;width:6.9px;height:238px;background:#5b5b5b;border-radius:1.5px"></div>
<div class="lbl" style="top:29.5px">Preview</div>
<div class="cb" style="left:168px;top:43.5px"><i></i></div>
<div class="tx" style="left:188px;top:46.8px">Playing</div>
<div class="row" style="left:233.5px;width:941.5px;top:43.7px"><span>Volume: -28.89 dB</span><div class="h" style="left:484.5px"></div></div>
<div class="row" style="top:63.6px"><span>Frequency: 131.62 Hz</span><div class="h" style="left:236.3px"></div></div>
<div class="lbl" style="top:84.5px">Waveform editor</div>
<div class="btn" style="left:168px;width:36.6px"><span>Clear</span></div>
<div class="btn" style="left:210.6px;width:48px"><span>Digital</span></div>
<div class="btn" style="left:264.4px;width:42.3px"><span>Analog</span></div>
<div class="btn" style="left:312.6px;width:19.7px"><span>FM</span></div>
<div class="btn" style="left:338.2px;width:42.3px"><span>Glitch</span></div>
<div class="btn" style="left:386.4px;width:36.6px"><span>Noise</span></div>
<div class="rad on" style="left:429.7px"><i></i></div>
<div class="rt" style="left:448.5px">Pencil</div>
<div class="rad" style="left:488.2px"></div>
<div class="rt" style="left:507px">Brush</div>
<div class="rad" style="left:541px"></div>
<div class="rt" style="left:559.8px">Grab</div>
<div class="rad" style="left:588.2px"></div>
<div class="rt" style="left:607px">Line</div>
<div class="rad" style="left:635.4px"></div>
<div class="rt" style="left:654.2px">Eraser</div>
<div class="rad" style="left:693.9px"></div>
<div class="rt" style="left:712.7px">Smooth</div>
<div style="left:168px;top:118.9px;width:1007px;height:149.2px;background:#272727;border-radius:2px"></div>
<svg width="1012" height="156" viewBox="166 117 1012 156" style="left:166px;top:117px"><polyline fill="none" stroke="#808080" stroke-width="1.0" stroke-linejoin="round" points="172.7,190.3 173.2,192.0 173.7,193.7 174.2,195.1 174.7,196.2 175.1,196.8 175.6,197.0 176.1,196.8 176.6,196.2 177.1,195.4 177.6,194.4 178.1,193.5 178.6,192.6 179.0,191.9 179.5,191.4 180.0,191.2 180.5,191.3 181.0,191.7 181.5,192.2 182.0,192.8 182.5,193.5 182.9,194.1 183.4,194.7 183.9,195.0 184.4,195.2 184.9,195.1 185.4,194.9 185.9,194.5 186.4,194.0 186.8,193.5 187.3,193.0 187.8,192.6 188.3,192.3 188.8,192.2 189.3,192.2 189.8,192.4 190.3,192.7 190.7,193.1 191.2,193.5 191.7,193.9 192.2,194.3 192.7,194.5 193.2,194.6 193.7,194.6 194.2,194.4 194.7,194.2 195.1,193.8 195.6,193.5 196.1,193.1 196.6,192.8 197.1,192.6 197.6,192.5 198.1,192.5 198.6,192.6 199.0,192.9 199.5,193.2 200.0,193.5 200.5,193.9 201.0,194.2 201.5,194.4 202.0,194.5 202.5,194.5 202.9,194.4 203.4,194.1 203.9,193.8 204.4,193.4 204.9,193.1 205.4,192.7 205.9,192.5 206.4,192.4 206.8,192.4 207.3,192.5 207.8,192.8 208.3,193.1 208.8,193.6 209.3,194.0 209.8,194.4 210.3,194.7 210.7,194.8 211.2,194.8 211.7,194.7 212.2,194.4 212.7,194.0 213.2,193.5 213.7,192.9 214.2,192.4 214.7,192.1 215.1,191.8 215.6,191.8 216.1,192.0 216.6,192.3 217.1,192.9 217.6,193.5 218.1,194.2 218.6,194.9 219.0,195.4 219.5,195.7 220.0,195.8 220.5,195.6 221.0,195.2 221.5,194.5 222.0,193.6 222.5,192.6 222.9,191.6 223.4,190.8 223.9,190.2 224.4,190.0 224.9,190.2 225.4,190.8 225.9,191.8 226.4,193.3 226.8,194.9 227.3,196.6 227.8,198.2 228.3,199.4 228.8,200.1 229.3,200.1 229.8,199.1 230.3,197.2 230.7,194.2 231.2,190.2 231.7,185.3 232.2,179.6 232.7,173.4 233.2,166.9 233.7,160.4 234.2,154.2 234.7,148.5 235.1,143.6 235.6,139.6 236.1,136.6 236.6,134.7 237.1,133.7 237.6,133.7 238.1,134.4 238.6,135.6 239.0,137.2 239.5,138.9 240.0,140.5 240.5,141.9 241.0,143.0 241.5,143.6 242.0,143.8 242.5,143.6 242.9,143.0 243.4,142.2 243.9,141.2 244.4,140.3 244.9,139.4 245.4,138.7 245.9,138.2 246.4,138.0 246.8,138.1 247.3,138.4 247.8,139.0 248.3,139.6 248.8,140.2 249.3,140.9 249.8,141.4 250.3,141.7 250.8,141.9 251.2,141.9 251.7,141.7 252.2,141.3 252.7,140.9 253.2,140.4 253.7,140.0 254.2,139.6 254.7,139.3 255.1,139.2 255.6,139.2 256.1,139.3 256.6,139.5 257.1,139.8 257.6,140.2 258.1,140.5 258.6,140.8 259.0,141.0 259.5,141.1 260.0,141.1 260.5,141.1 261.0,140.9 261.5,140.7 262.0,140.4 262.5,140.2 262.9,140.0 263.4,139.8 263.9,139.7 264.4,139.7 264.9,139.7 265.4,139.8 265.9,140.0 266.4,140.2 266.8,140.4 267.3,140.5 267.8,140.6 268.3,140.7 268.8,140.7 269.3,140.7 269.8,140.6 270.3,140.5 270.8,140.4 271.2,140.3 271.7,140.2 272.2,140.1 272.7,140.0 273.2,140.0 273.7,140.0 274.2,140.1 274.7,140.1 275.1,140.2 275.6,140.3 276.1,140.4 276.6,140.4 277.1,140.5 277.6,140.5 278.1,140.5 278.6,140.5 279.0,140.4 279.5,140.4 280.0,140.3 280.5,140.3 281.0,140.2 281.5,140.2 282.0,140.2 282.5,140.2 282.9,140.2 283.4,140.2 283.9,140.3 284.4,140.3 284.9,140.3 285.4,140.3 285.9,140.4 286.4,140.4 286.8,140.4 287.3,140.4 287.8,140.3 288.3,140.3 288.8,140.3 289.3,140.3 289.8,140.3 290.3,140.3 290.8,140.3 291.2,140.3 291.7,140.3 292.2,140.3 292.7,140.3 293.2,140.3 293.7,140.3 294.2,140.3 294.7,140.3 295.1,140.3 295.6,140.3 296.1,140.3 296.6,140.3 297.1,140.3 297.6,140.3 298.1,140.3 298.6,140.3 299.0,140.3 299.5,140.3 300.0,140.3 300.5,140.3 301.0,140.3 301.5,140.3 302.0,140.3 302.5,140.3 302.9,140.3 303.4,140.3 303.9,140.3 304.4,140.3 304.9,140.3 305.4,140.3 305.9,140.3 306.4,140.3 306.8,140.3 307.3,140.3 307.8,140.3 308.3,140.3 308.8,140.3 309.3,140.3 309.8,140.3 310.3,140.3 310.8,140.3 311.2,140.3 311.7,140.3 312.2,140.3 312.7,140.3 313.2,140.3 313.7,140.3 314.2,140.3 314.7,140.3 315.1,140.3 315.6,140.3 316.1,140.3 316.6,140.3 317.1,140.3 317.6,140.3 318.1,140.3 318.6,140.3 319.0,140.3 319.5,140.3 320.0,140.3 320.5,140.3 321.0,140.3 321.5,140.3 322.0,140.3 322.5,140.3 322.9,140.3 323.4,140.3 323.9,140.3 324.4,140.3 324.9,140.3 325.4,140.3 325.9,140.3 326.4,140.3 326.8,140.3 327.3,140.3 327.8,140.3 328.3,140.3 328.8,140.3 329.3,140.3 329.8,140.3 330.3,140.3 330.8,140.3 331.2,140.3 331.7,140.3 332.2,140.3 332.7,140.3 333.2,140.3 333.7,140.3 334.2,140.3 334.7,140.3 335.1,140.3 335.6,140.3 336.1,140.3 336.6,140.3 337.1,140.3 337.6,140.3 338.1,140.3 338.6,140.3 339.0,140.3 339.5,140.3 340.0,140.3 340.5,140.3 341.0,140.3 341.5,140.3 342.0,140.3 342.5,140.3 342.9,140.3 343.4,140.3 343.9,140.3 344.4,140.3 344.9,140.3 345.4,140.3 345.9,140.3 346.4,140.3 346.8,140.3 347.3,140.3 347.8,140.3 348.3,140.3 348.8,140.3 349.3,140.3 349.8,140.3 350.3,140.3 350.8,140.3 351.2,140.3 351.7,140.3 352.2,140.3 352.7,140.3 353.2,140.3 353.7,140.3 354.2,140.3 354.7,140.3 355.1,140.3 355.6,140.3 356.1,140.3 356.6,140.3 357.1,140.3 357.6,140.3 358.1,140.3 358.6,140.3 359.0,140.3 359.5,140.3 360.0,140.3 360.5,140.3 361.0,140.3 361.5,140.3 362.0,140.3 362.5,140.3 362.9,140.3 363.4,140.3 363.9,140.3 364.4,140.3 364.9,140.3 365.4,140.3 365.9,140.3 366.4,140.3 366.8,140.3 367.3,140.3 367.8,140.3 368.3,140.3 368.8,140.3 369.3,140.3 369.8,140.3 370.3,140.3 370.8,140.3 371.2,140.3 371.7,140.3 372.2,140.3 372.7,140.3 373.2,140.3 373.7,140.3 374.2,140.3 374.7,140.3 375.1,140.3 375.6,140.3 376.1,140.3 376.6,140.3 377.1,140.3 377.6,140.3 378.1,140.3 378.6,140.3 379.0,140.3 379.5,140.3 380.0,140.3 380.5,140.3 381.0,140.3 381.5,140.3 382.0,140.3 382.5,140.3 382.9,140.3 383.4,140.3 383.9,140.3 384.4,140.3 384.9,140.3 385.4,140.3 385.9,140.3 386.4,140.3 386.8,140.3 387.3,140.3 387.8,140.3 388.3,140.3 388.8,140.3 389.3,140.4 389.8,140.4 390.3,140.4 390.8,140.3 391.2,140.3 391.7,140.3 392.2,140.3 392.7,140.3 393.2,140.2 393.7,140.2 394.2,140.2 394.7,140.2 395.1,140.2 395.6,140.3 396.1,140.3 396.6,140.3 397.1,140.3 397.6,140.4 398.1,140.4 398.6,140.4 399.0,140.4 399.5,140.4 400.0,140.4 400.5,140.3 401.0,140.3 401.5,140.2 402.0,140.2 402.5,140.2 402.9,140.2 403.4,140.2 403.9,140.2 404.4,140.2 404.9,140.3 405.4,140.3 405.9,140.4 406.4,140.4 406.8,140.4 407.3,140.5 407.8,140.5 408.3,140.4 408.8,140.4 409.3,140.4 409.8,140.3 410.3,140.3 410.8,140.2 411.2,140.2 411.7,140.1 412.2,140.1 412.7,140.1 413.2,140.2 413.7,140.2 414.2,140.3 414.7,140.3 415.1,140.4 415.6,140.4 416.1,140.5 416.6,140.5 417.1,140.5 417.6,140.4 418.1,140.4 418.6,140.3 419.0,140.3 419.5,140.2 420.0,140.2 420.5,140.1 421.0,140.1 421.5,140.1 422.0,140.2 422.5,140.2 422.9,140.2 423.4,140.3 423.9,140.3 424.4,140.4 424.9,140.4 425.4,140.5 425.9,140.5 426.4,140.5 426.9,140.4 427.3,140.4 427.8,140.3 428.3,140.3 428.8,140.2 429.3,140.2 429.8,140.2 430.3,140.1 430.8,140.1 431.2,140.2 431.7,140.2 432.2,140.2 432.7,140.3 433.2,140.3 433.7,140.4 434.2,140.4 434.7,140.5 435.1,140.5 435.6,140.5 436.1,140.5 436.6,140.4 437.1,140.3 437.6,140.3 438.1,140.2 438.6,140.1 439.0,140.1 439.5,140.0 440.0,140.0 440.5,140.1 441.0,140.2 441.5,140.3 442.0,140.5 442.5,140.6 442.9,140.8 443.4,140.9 443.9,141.0 444.4,140.9 444.9,140.7 445.4,140.4 445.9,139.9 446.4,139.4 446.9,138.8 447.3,138.3 447.8,137.9 448.3,137.8 448.8,138.3 449.3,139.3 449.8,141.1 450.3,143.9 450.8,147.7 451.2,152.6 451.7,158.6 452.2,165.7 452.7,173.8 453.2,182.6 453.7,192.0 454.2,201.6 454.7,211.1 455.1,220.2 455.6,228.6 456.1,236.0 456.6,242.2 457.1,247.0 457.6,250.3 458.1,252.3 458.6,252.9 459.0,252.5 459.5,251.2 460.0,249.4 460.5,247.4 461.0,245.5 461.5,244.0 462.0,243.1 462.5,242.9 462.9,243.4 463.4,244.6 463.9,246.4 464.4,248.6 464.9,250.8 465.4,253.0 465.9,254.6 466.4,255.6 466.9,255.8 467.3,254.9 467.8,252.9 468.3,249.9 468.8,246.0 469.3,241.3 469.8,236.0 470.3,230.5 470.8,224.8 471.2,219.3 471.7,214.0 472.2,209.2 472.7,204.9 473.2,201.2 473.7,198.0 474.2,195.2 474.7,192.7 475.1,190.7 475.6,188.8 476.1,187.2 476.6,185.9 477.1,185.0 477.6,184.5 478.1,184.5 478.6,185.3 479.0,186.9 479.5,189.4 480.0,192.8 480.5,197.2 481.0,202.4 481.5,208.2 482.0,214.3 482.5,220.4 482.9,226.2 483.4,231.3 483.9,235.3 484.4,238.0 484.9,239.1 485.4,238.5 485.9,236.3 486.4,232.6 486.9,227.5 487.3,221.5 487.8,214.9 488.3,208.1 488.8,201.5 489.3,195.6 489.8,190.7 490.3,186.9 490.8,184.5 491.2,183.3 491.7,183.4 492.2,184.6 492.7,186.6 493.2,189.1 493.7,191.7 494.2,194.3 494.7,196.5 495.1,198.2 495.6,199.1 496.1,199.4 496.6,199.0 497.1,198.0 497.6,196.6 498.1,195.0 498.6,193.3 499.0,191.8 499.5,190.7 500.0,189.9 500.5,189.6 501.0,189.7 501.5,190.3 502.0,191.1 502.5,192.2 502.9,193.4 503.4,194.4 503.9,195.3 504.4,195.9 504.9,196.2 505.4,196.2 505.9,195.9 506.4,195.3 506.9,194.6 507.3,193.8 507.8,193.0 508.3,192.4 508.8,191.9 509.3,191.6 509.8,191.6 510.3,191.8 510.8,192.1 511.2,192.6 511.7,193.1 512.2,193.6 512.7,194.1 513.2,194.5 513.7,194.7 514.2,194.8 514.7,194.7 515.1,194.5 515.6,194.3 516.1,194.0 516.6,193.6 517.1,193.3 517.6,193.1 518.1,192.9 518.6,192.8 519.0,192.8 519.5,192.8 520.0,192.9 520.5,193.0 521.0,193.2 521.5,193.3 522.0,193.5 522.5,193.6 522.9,193.7 523.4,193.8 523.9,193.9 524.4,194.0 524.9,194.0 525.4,194.1 525.9,194.1 526.4,194.0 526.9,193.9 527.3,193.8 527.8,193.6 528.3,193.4 528.8,193.2 529.3,193.0 529.8,192.7 530.3,192.6 530.8,192.5 531.2,192.5 531.7,192.6 532.2,192.9 532.7,193.2 533.2,193.6 533.7,194.1 534.2,194.5 534.7,194.8 535.1,195.1 535.6,195.1 536.1,195.0 536.6,194.7 537.1,194.2 537.6,193.6 538.1,192.9 538.6,192.2 539.0,191.6 539.5,191.2 540.0,191.0 540.5,191.1 541.0,191.5 541.5,192.2 542.0,193.1 542.5,194.2 542.9,195.3 543.4,196.3 543.9,197.1 544.4,197.5 544.9,197.4 545.4,196.9 545.9,195.8 546.4,194.3 546.9,192.5 547.3,190.5 547.8,188.7 548.3,187.1 548.8,186.1 549.3,186.0 549.8,186.8 550.3,188.8 550.8,191.9 551.2,196.2 551.7,201.6 552.2,207.7 552.7,214.5 553.2,221.5 553.7,228.4 554.2,234.9 554.7,240.8 555.1,245.7 555.6,249.5 556.1,252.1 556.6,253.6 557.1,254.0 557.6,253.5 558.1,252.3 558.6,250.8 559.0,249.1 559.5,247.5 560.0,246.1 560.5,245.3 561.0,244.9 561.5,245.0 562.0,245.6 562.5,246.5 563.0,247.5 563.4,248.6 563.9,249.4 564.4,250.0 564.9,250.1 565.4,249.8 565.9,249.2 566.4,248.2 566.9,247.1 567.3,246.0 567.8,245.1 568.3,244.5 568.8,244.5 569.3,245.0 569.8,246.0 570.3,247.5 570.8,249.3 571.2,251.2 571.7,252.9 572.2,254.2 572.7,254.7 573.2,254.3 573.7,252.7 574.2,249.9 574.7,245.9 575.1,240.7 575.6,234.6 576.1,227.8 576.6,220.6 577.1,213.5 577.6,206.7 578.1,200.6 578.6,195.4 579.0,191.4 579.5,188.6 580.0,187.1 580.5,186.6 581.0,187.2 581.5,188.5 582.0,190.2 582.5,192.0 583.0,193.8 583.4,195.3 583.9,196.3 584.4,196.8 584.9,196.7 585.4,196.2 585.9,195.3 586.4,194.2 586.9,193.1 587.3,192.1 587.8,191.5 588.3,191.2 588.8,191.4 589.3,191.9 589.8,192.8 590.3,193.8 590.8,194.8 591.2,195.7 591.7,196.3 592.2,196.4 592.7,196.0 593.2,195.1 593.7,193.8 594.2,192.2 594.7,190.5 595.1,188.9 595.6,187.8 596.1,187.3 596.6,187.7 597.1,189.2 597.6,191.9 598.1,195.7 598.6,200.6 599.0,206.4 599.5,212.9 600.0,219.9 600.5,226.8 601.0,233.6 601.5,239.7 602.0,245.0 602.5,249.3 603.0,252.5 603.4,254.5 603.9,255.3 604.4,255.2 604.9,254.2 605.4,252.7 605.9,250.8 606.4,248.8 606.9,247.0 607.3,245.5 607.8,244.4 608.3,243.8 608.8,243.8 609.3,244.2 609.8,244.9 610.3,246.0 610.8,247.1 611.2,248.2 611.7,249.2 612.2,249.9 612.7,250.3 613.2,250.4 613.7,250.2 614.2,249.8 614.7,249.1 615.1,248.4 615.6,247.6 616.1,246.9 616.6,246.4 617.1,246.1 617.6,246.0 618.1,246.1 618.6,246.3 619.0,246.8 619.5,247.3 620.0,247.8 620.5,248.3 621.0,248.7 621.5,249.0 622.0,249.1 622.5,249.1 623.0,248.9 623.4,248.6 623.9,248.2 624.4,247.9 624.9,247.5 625.4,247.2 625.9,247.0 626.4,246.9 626.9,246.9 627.3,247.0 627.8,247.2 628.3,247.4 628.8,247.7 629.3,248.0 629.8,248.2 630.3,248.3 630.8,248.4 631.2,248.5 631.7,248.4 632.2,248.3 632.7,248.1 633.2,247.9 633.7,247.7 634.2,247.6 634.7,247.5 635.1,247.4 635.6,247.3 636.1,247.4 636.6,247.4 637.1,247.5 637.6,247.7 638.1,247.8 638.6,247.9 639.0,248.0 639.5,248.1 640.0,248.1 640.5,248.1 641.0,248.1 641.5,248.0 642.0,247.9 642.5,247.8 643.0,247.8 643.4,247.7 643.9,247.6 644.4,247.6 644.9,247.6 645.4,247.6 645.9,247.7 646.4,247.7 646.9,247.8 647.3,247.8 647.8,247.8 648.3,247.9 648.8,247.9 649.3,247.9 649.8,247.9 650.3,247.9 650.8,247.9 651.2,247.8 651.7,247.8 652.2,247.8 652.7,247.8 653.2,247.8 653.7,247.8 654.2,247.8 654.7,247.8 655.1,247.8 655.6,247.8 656.1,247.8 656.6,247.8 657.1,247.8 657.6,247.8 658.1,247.8 658.6,247.8 659.0,247.8 659.5,247.8 660.0,247.8 660.5,247.8 661.0,247.8 661.5,247.8 662.0,247.8 662.5,247.8 663.0,247.8 663.4,247.8 663.9,247.8 664.4,247.8 664.9,247.8 665.4,247.8 665.9,247.8 666.4,247.8 666.9,247.8 667.3,247.8 667.8,247.8 668.3,247.8 668.8,247.8 669.3,247.8 669.8,247.8 670.3,247.8 670.8,247.8 671.2,247.8 671.7,247.8 672.2,247.8 672.7,247.8 673.2,247.8 673.7,247.8 674.2,247.8 674.7,247.8 675.1,247.8 675.6,247.8 676.1,247.8 676.6,247.8 677.1,247.8 677.6,247.8 678.1,247.8 678.6,247.8 679.0,247.8 679.5,247.8 680.0,247.8 680.5,247.8 681.0,247.8 681.5,247.8 682.0,247.8 682.5,247.8 683.0,247.8 683.4,247.8 683.9,247.8 684.4,247.8 684.9,247.8 685.4,247.8 685.9,247.8 686.4,247.8 686.9,247.8 687.3,247.8 687.8,247.8 688.3,247.8 688.8,247.8 689.3,247.8 689.8,247.8 690.3,247.8 690.8,247.8 691.2,247.8 691.7,247.8 692.2,247.8 692.7,247.8 693.2,247.8 693.7,247.8 694.2,247.8 694.7,247.8 695.1,247.8 695.6,247.8 696.1,247.8 696.6,247.8 697.1,247.8 697.6,247.8 698.1,247.8 698.6,247.8 699.0,247.8 699.5,247.8 700.0,247.8 700.5,247.8 701.0,247.8 701.5,247.8 702.0,247.8 702.5,247.8 703.0,247.8 703.4,247.8 703.9,247.8 704.4,247.8 704.9,247.8 705.4,247.8 705.9,247.8 706.4,247.8 706.9,247.8 707.3,247.8 707.8,247.8 708.3,247.8 708.8,247.8 709.3,247.8 709.8,247.8 710.3,247.8 710.8,247.8 711.2,247.8 711.7,247.8 712.2,247.8 712.7,247.8 713.2,247.8 713.7,247.8 714.2,247.8 714.7,247.8 715.1,247.8 715.6,247.8 716.1,247.8 716.6,247.8 717.1,247.8 717.6,247.8 718.1,247.8 718.6,247.8 719.0,247.8 719.5,247.8 720.0,247.8 720.5,247.8 721.0,247.8 721.5,247.8 722.0,247.8 722.5,247.8 723.0,247.8 723.4,247.8 723.9,247.8 724.4,247.8 724.9,247.8 725.4,247.8 725.9,247.8 726.4,247.8 726.9,247.8 727.3,247.8 727.8,247.8 728.3,247.8 728.8,247.8 729.3,247.8 729.8,247.8 730.3,247.8 730.8,247.8 731.2,247.8 731.7,247.8 732.2,247.8 732.7,247.8 733.2,247.8 733.7,247.8 734.2,247.8 734.7,247.8 735.1,247.8 735.6,247.8 736.1,247.8 736.6,247.8 737.1,247.8 737.6,247.8 738.1,247.8 738.6,247.8 739.1,247.8 739.5,247.8 740.0,247.8 740.5,247.8 741.0,247.8 741.5,247.8 742.0,247.8 742.5,247.8 743.0,247.8 743.4,247.8 743.9,247.8 744.4,247.8 744.9,247.8 745.4,247.8 745.9,247.8 746.4,247.8 746.9,247.8 747.3,247.8 747.8,247.8 748.3,247.8 748.8,247.8 749.3,247.8 749.8,247.8 750.3,247.8 750.8,247.8 751.2,247.8 751.7,247.8 752.2,247.8 752.7,247.8 753.2,247.8 753.7,247.8 754.2,247.8 754.7,247.8 755.1,247.8 755.6,247.8 756.1,247.8 756.6,247.9 757.1,247.9 757.6,247.9 758.1,247.9 758.6,247.9 759.1,247.9 759.5,247.8 760.0,247.8 760.5,247.7 761.0,247.7 761.5,247.6 762.0,247.6 762.5,247.6 763.0,247.6 763.4,247.7 763.9,247.7 764.4,247.8 764.9,247.9 765.4,248.0 765.9,248.0 766.4,248.1 766.9,248.1 767.3,248.1 767.8,248.0 768.3,247.9 768.8,247.8 769.3,247.7 769.8,247.6 770.3,247.5 770.8,247.4 771.2,247.3 771.7,247.4 772.2,247.4 772.7,247.6 773.2,247.7 773.7,247.9 774.2,248.1 774.7,248.3 775.1,248.4 775.6,248.5 776.1,248.5 776.6,248.4 777.1,248.2 777.6,248.0 778.1,247.7 778.6,247.4 779.1,247.2 779.5,247.0 780.0,246.9 780.5,246.9 781.0,247.0 781.5,247.2 782.0,247.5 782.5,247.9 783.0,248.2 783.4,248.6 783.9,248.9 784.4,249.1 784.9,249.1 785.4,249.0 785.9,248.7 786.4,248.3 786.9,247.8 787.3,247.3 787.8,246.8 788.3,246.3 788.8,246.0 789.3,245.9 789.8,246.1 790.3,246.4 790.8,246.9 791.2,247.6 791.7,248.4 792.2,249.2 792.7,249.8 793.2,250.3 793.7,250.5 794.2,250.3 794.7,249.9 795.1,249.2 795.6,248.2 796.1,247.1 796.6,245.9 797.1,244.9 797.6,244.1 798.1,243.8 798.6,243.8 799.1,244.4 799.5,245.5 800.0,247.1 800.5,248.9 801.0,250.9 801.5,252.7 802.0,254.2 802.5,255.2 803.0,255.3 803.4,254.4 803.9,252.4 804.4,249.2 804.9,244.9 805.4,239.6 805.9,233.5 806.4,226.8 806.9,219.9 807.3,213.0 807.8,206.5 808.3,200.8 808.8,195.9 809.3,192.1 809.8,189.4 810.3,187.9 810.8,187.4 811.2,187.8 811.7,188.8 812.2,190.3 812.7,191.9 813.2,193.5 813.7,194.8 814.2,195.7 814.7,196.2 815.1,196.2 815.6,195.7 816.1,195.0 816.6,194.1 817.1,193.1 817.6,192.3 818.1,191.8 818.6,191.6 819.1,191.7 819.5,192.3 820.0,193.0 820.5,194.0 821.0,194.9 821.5,195.7 822.0,196.2 822.5,196.2 823.0,195.8 823.4,194.9 823.9,193.6 824.4,192.1 824.9,190.4 825.4,188.9 825.9,187.8 826.4,187.4 826.9,187.8 827.3,189.3 827.8,191.9 828.3,195.7 828.8,200.5 829.3,206.3 829.8,212.9 830.3,219.8 830.8,226.8 831.2,233.6 831.7,239.8 832.2,245.2 832.7,249.5 833.2,252.7 833.7,254.7 834.2,255.5 834.7,255.3 835.1,254.2 835.6,252.6 836.1,250.6 836.6,248.5 837.1,246.6 837.6,245.1 838.1,244.0 838.6,243.5 839.1,243.5 839.5,244.1 840.0,245.0 840.5,246.2 841.0,247.5 841.5,248.8 842.0,249.8 842.5,250.5 843.0,250.8 843.4,250.8 843.9,250.4 844.4,249.7 844.9,248.8 845.4,247.8 845.9,246.9 846.4,246.1 846.9,245.6 847.3,245.3 847.8,245.4 848.3,245.8 848.8,246.4 849.3,247.2 849.8,248.0 850.3,248.8 850.8,249.5 851.2,249.9 851.7,250.0 852.2,249.9 852.7,249.4 853.2,248.8 853.7,248.1 854.2,247.3 854.7,246.6 855.1,246.0 855.6,245.6 856.1,245.6 856.6,245.8 857.1,246.3 857.6,247.0 858.1,247.8 858.6,248.7 859.1,249.5 859.5,250.0 860.0,250.4 860.5,250.4 861.0,250.0 861.5,249.4 862.0,248.5 862.5,247.4 863.0,246.3 863.4,245.4 863.9,244.6 864.4,244.2 864.9,244.2 865.4,244.7 865.9,245.7 866.4,247.1 866.9,248.7 867.3,250.5 867.8,252.2 868.3,253.5 868.8,254.4 869.3,254.4 869.8,253.6 870.3,251.8 870.8,248.8 871.2,244.8 871.7,239.9 872.2,234.1 872.7,227.7 873.2,221.0 873.7,214.3 874.2,207.9 874.7,201.9 875.1,196.7 875.6,192.5 876.1,189.3 876.6,187.2 877.1,186.2 877.6,186.1 878.1,186.9 878.6,188.3 879.1,190.1 879.5,192.1 880.0,194.0 880.5,195.7 881.0,197.0 881.5,197.7 882.0,198.0 882.5,197.7 883.0,197.0 883.4,195.9 883.9,194.6 884.4,193.2 884.9,192.0 885.4,191.0 885.9,190.3 886.4,190.0 886.9,190.1 887.3,190.6 887.8,191.4 888.3,192.4 888.8,193.6 889.3,194.7 889.8,195.7 890.3,196.4 890.8,196.8 891.2,196.8 891.7,196.4 892.2,195.7 892.7,194.7 893.2,193.5 893.7,192.3 894.2,191.2 894.7,190.4 895.2,189.9 895.6,189.9 896.1,190.2 896.6,191.0 897.1,192.1 897.6,193.5 898.1,194.9 898.6,196.2 899.1,197.3 899.5,198.0 900.0,198.2 900.5,197.8 901.0,196.8 901.5,195.3 902.0,193.4 902.5,191.2 903.0,189.1 903.4,187.3 903.9,186.1 904.4,185.6 904.9,186.2 905.4,187.9 905.9,190.9 906.4,195.2 906.9,200.5 907.3,206.8 907.8,213.8 908.3,221.1 908.8,228.4 909.3,235.4 909.8,241.6 910.3,246.9 910.8,250.9 911.2,253.6 911.7,255.0 912.2,255.2 912.7,254.3 913.2,252.6 913.7,250.3 914.2,248.0 914.7,245.7 915.2,243.9 915.6,242.8 916.1,242.4 916.6,242.9 917.1,244.2 917.6,246.1 918.1,248.4 918.6,250.8 919.1,253.0 919.5,254.6 920.0,255.4 920.5,255.1 921.0,253.6 921.5,250.7 922.0,246.5 922.5,241.1 923.0,234.8 923.4,227.9 923.9,220.7 924.4,213.5 924.9,206.6 925.4,200.5 925.9,195.4 926.4,191.3 926.9,188.5 927.3,186.8 927.8,186.3 928.3,186.7 928.8,187.8 929.3,189.4 929.8,191.3 930.3,193.2 930.8,194.8 931.2,196.1 931.7,197.0 932.2,197.3 932.7,197.2 933.2,196.6 933.7,195.8 934.2,194.7 934.7,193.6 935.2,192.6 935.6,191.8 936.1,191.3 936.6,191.0 937.1,191.1 937.6,191.4 938.1,192.0 938.6,192.7 939.1,193.4 939.5,194.1 940.0,194.6 940.5,195.1 941.0,195.2 941.5,195.2 942.0,195.0 942.5,194.6 943.0,194.2 943.4,193.6 943.9,193.1 944.4,192.7 944.9,192.4 945.4,192.2 945.9,192.2 946.4,192.4 946.9,192.6 947.3,193.0 947.8,193.3 948.3,193.7 948.8,194.0 949.3,194.3 949.8,194.4 950.3,194.4 950.8,194.4 951.2,194.2 951.7,193.9 952.2,193.7 952.7,193.4 953.2,193.2 953.7,193.0 954.2,192.8 954.7,192.8 955.2,192.9 955.6,193.0 956.1,193.1 956.6,193.3 957.1,193.5 957.6,193.7 958.1,193.9 958.6,194.0 959.1,194.0 959.5,194.0 960.0,193.9 960.5,193.8 961.0,193.7 961.5,193.5 962.0,193.4 962.5,193.3 963.0,193.2 963.4,193.2 963.9,193.2 964.4,193.2 964.9,193.3 965.4,193.4 965.9,193.5 966.4,193.6 966.9,193.6 967.3,193.7 967.8,193.7 968.3,193.7 968.8,193.7 969.3,193.7 969.8,193.6 970.3,193.5 970.8,193.5 971.2,193.4 971.7,193.4 972.2,193.4 972.7,193.4 973.2,193.4 973.7,193.4 974.2,193.4 974.7,193.5 975.2,193.5 975.6,193.5 976.1,193.5 976.6,193.6 977.1,193.6 977.6,193.6 978.1,193.6 978.6,193.5 979.1,193.5 979.5,193.5 980.0,193.5 980.5,193.5 981.0,193.5 981.5,193.5 982.0,193.5 982.5,193.5 983.0,193.5 983.4,193.5 983.9,193.5 984.4,193.5 984.9,193.5 985.4,193.5 985.9,193.5 986.4,193.5 986.9,193.5 987.3,193.5 987.8,193.5 988.3,193.5 988.8,193.5 989.3,193.5 989.8,193.5 990.3,193.5 990.8,193.5 991.2,193.5 991.7,193.5 992.2,193.5 992.7,193.5 993.2,193.5 993.7,193.5 994.2,193.5 994.7,193.5 995.2,193.5 995.6,193.5 996.1,193.5 996.6,193.5 997.1,193.5 997.6,193.5 998.1,193.5 998.6,193.5 999.1,193.5 999.5,193.5 1000.0,193.5 1000.5,193.5 1001.0,193.5 1001.5,193.5 1002.0,193.5 1002.5,193.5 1003.0,193.5 1003.4,193.5 1003.9,193.5 1004.4,193.5 1004.9,193.5 1005.4,193.5 1005.9,193.5 1006.4,193.5 1006.9,193.5 1007.3,193.5 1007.8,193.5 1008.3,193.5 1008.8,193.5 1009.3,193.5 1009.8,193.5 1010.3,193.5 1010.8,193.5 1011.2,193.5 1011.7,193.5 1012.2,193.5 1012.7,193.5 1013.2,193.5 1013.7,193.5 1014.2,193.5 1014.7,193.5 1015.2,193.5 1015.6,193.5 1016.1,193.5 1016.6,193.5 1017.1,193.5 1017.6,193.5 1018.1,193.5 1018.6,193.5 1019.1,193.4 1019.5,193.4 1020.0,193.4 1020.5,193.5 1021.0,193.5 1021.5,193.5 1022.0,193.5 1022.5,193.5 1023.0,193.5 1023.4,193.6 1023.9,193.6 1024.4,193.6 1024.9,193.5 1025.4,193.5 1025.9,193.5 1026.4,193.5 1026.9,193.5 1027.3,193.5 1027.8,193.5 1028.3,193.4 1028.8,193.5 1029.3,193.5 1029.8,193.5 1030.3,193.5 1030.8,193.5 1031.2,193.5 1031.7,193.5 1032.2,193.5 1032.7,193.5 1033.2,193.5 1033.7,193.5 1034.2,193.5 1034.7,193.5 1035.2,193.5 1035.6,193.5 1036.1,193.5 1036.6,193.5 1037.1,193.5 1037.6,193.5 1038.1,193.5 1038.6,193.5 1039.1,193.5 1039.5,193.5 1040.0,193.5 1040.5,193.5 1041.0,193.5 1041.5,193.4 1042.0,193.4 1042.5,193.4 1043.0,193.4 1043.4,193.4 1043.9,193.5 1044.4,193.5 1044.9,193.6 1045.4,193.6 1045.9,193.7 1046.4,193.7 1046.9,193.7 1047.3,193.7 1047.8,193.6 1048.3,193.6 1048.8,193.5 1049.3,193.4 1049.8,193.3 1050.3,193.2 1050.8,193.2 1051.3,193.2 1051.7,193.2 1052.2,193.3 1052.7,193.4 1053.2,193.5 1053.7,193.7 1054.2,193.8 1054.7,193.9 1055.2,194.0 1055.6,194.0 1056.1,194.0 1056.6,193.9 1057.1,193.7 1057.6,193.5 1058.1,193.3 1058.6,193.1 1059.1,192.9 1059.5,192.7 1060.0,192.7 1060.5,192.7 1061.0,192.9 1061.5,193.1 1062.0,193.4 1062.5,193.7 1063.0,194.1 1063.4,194.4 1063.9,194.6 1064.4,194.7 1064.9,194.6 1065.4,194.4 1065.9,194.1 1066.4,193.7 1066.9,193.2 1067.3,192.8 1067.8,192.3 1068.3,192.0 1068.8,191.9 1069.3,191.9 1069.8,192.1 1070.3,192.5 1070.8,193.1 1071.3,193.7 1071.7,194.4 1072.2,195.0 1072.7,195.5 1073.2,195.8 1073.7,195.8 1074.2,195.5 1074.7,195.0 1075.2,194.2 1075.6,193.3 1076.1,192.4 1076.6,191.5 1077.1,190.8 1077.6,190.3 1078.1,190.2 1078.6,190.5 1079.1,191.2 1079.5,192.2 1080.0,193.4 1080.5,194.8 1081.0,196.1 1081.5,197.3 1082.0,198.1 1082.5,198.4 1083.0,198.1 1083.4,197.3 1083.9,195.9 1084.4,194.1 1084.9,192.0 1085.4,189.8 1085.9,187.8 1086.4,186.2 1086.9,185.2 1087.3,185.2 1087.8,186.1 1088.3,188.1 1088.8,191.1 1089.3,195.2 1089.8,200.0 1090.3,205.5 1090.8,211.3 1091.3,217.3 1091.7,223.0 1092.2,228.4 1092.7,233.3 1093.2,237.5 1093.7,241.0 1094.2,243.8 1094.7,246.1 1095.2,248.0 1095.6,249.5 1096.1,250.8 1096.6,252.1 1097.1,253.2 1097.6,254.3 1098.1,255.2 1098.6,255.7 1099.1,255.8 1099.5,255.1 1100.0,253.5 1100.5,250.9 1101.0,247.1 1101.5,242.3 1102.0,236.4 1102.5,229.8 1103.0,222.8 1103.4,215.8 1103.9,209.3 1104.4,203.8 1104.9,199.7 1105.4,197.5 1105.9,197.5 1106.4,199.7 1106.9,204.0 1107.3,210.4 1107.8,218.3 1108.3,227.2 1108.8,236.6 1109.3,245.6 1109.8,253.6 1110.3,260.0 1110.8,264.2 1111.3,266.0 1111.7,265.1 1112.2,261.6 1112.7,255.8 1113.2,248.1 1113.7,239.1 1114.2,229.4 1114.7,219.9 1115.2,211.1 1115.6,203.9 1116.1,198.5 1116.6,195.5 1117.1,195.0 1117.6,196.8 1118.1,200.9 1118.6,206.8 1119.1,214.1 1119.5,222.1 1120.0,230.2 1120.5,238.0 1121.0,244.9 1121.5,250.6 1122.0,254.8 1122.5,257.3 1123.0,258.4 1123.4,258.0 1123.9,256.5 1124.4,254.2 1124.9,251.5 1125.4,248.7 1125.9,246.1 1126.4,244.0 1126.9,242.6 1127.3,241.9 1127.8,242.0 1128.3,242.7 1128.8,243.9 1129.3,245.4 1129.8,247.1 1130.3,248.7 1130.8,250.0 1131.3,251.0 1131.7,251.6 1132.2,251.7 1132.7,251.3 1133.2,250.6 1133.7,249.7 1134.2,248.7 1134.7,247.6 1135.2,246.6 1135.6,245.9 1136.1,245.4 1136.6,245.1 1137.1,245.2 1137.6,245.5 1138.1,246.1 1138.6,246.7 1139.1,247.4 1139.5,248.1 1140.0,248.8 1140.5,249.3 1141.0,249.6 1141.5,249.8 1142.0,249.7 1142.5,249.5 1143.0,249.2 1143.4,248.7 1143.9,248.2 1144.4,247.7 1144.9,247.1 1145.4,246.7 1145.9,246.3 1146.4,246.1 1146.9,246.0 1147.3,246.1 1147.8,246.3 1148.3,246.7 1148.8,247.1 1149.3,247.7 1149.8,248.3 1150.3,248.9 1150.8,249.4 1151.3,249.8 1151.7,250.0 1152.2,250.0 1152.7,249.9 1153.2,249.4 1153.7,248.8 1154.2,248.0 1154.7,247.1 1155.2,246.2 1155.6,245.4 1156.1,244.7 1156.6,244.4 1157.1,244.3 1157.6,244.7 1158.1,245.5 1158.6,246.6 1159.1,248.1 1159.5,249.7 1160.0,251.3 1160.5,252.8 1161.0,254.0 1161.5,254.5 1162.0,254.4 1162.5,253.3 1163.0,251.3 1163.4,248.2 1163.9,244.1 1164.4,239.1 1164.9,233.4 1165.4,227.1 1165.9,220.6 1166.4,214.1 1166.9,207.8 1167.3,202.0 1167.8,197.1 1168.3,193.0 1168.8,189.9 1169.3,187.9 1169.8,186.9 1170.3,186.8"/><circle cx="172.7" cy="207.6" r="1.4" fill="#888888"/><circle cx="176.6" cy="199.3" r="1.4" fill="#888888"/><circle cx="180.5" cy="187.3" r="1.4" fill="#888888"/><circle cx="184.5" cy="184.9" r="1.4" fill="#888888"/><circle cx="188.4" cy="188.4" r="1.4" fill="#888888"/><circle cx="192.3" cy="187.1" r="1.4" fill="#888888"/><circle cx="196.2" cy="195.1" r="1.4" fill="#888888"/><circle cx="200.1" cy="214.9" r="1.4" fill="#888888"/><circle cx="204.0" cy="218.4" r="1.4" fill="#888888"/><circle cx="208.0" cy="203.3" r="1.4" fill="#888888"/><circle cx="211.9" cy="194.4" r="1.4" fill="#888888"/><circle cx="215.8" cy="191.8" r="1.4" fill="#888888"/><circle cx="219.7" cy="183.3" r="1.4" fill="#888888"/><circle cx="223.6" cy="175.6" r="1.4" fill="#888888"/><circle cx="227.5" cy="174.0" r="1.4" fill="#888888"/><circle cx="231.5" cy="169.3" r="1.4" fill="#888888"/><circle cx="235.4" cy="162.9" r="1.4" fill="#888888"/><circle cx="239.3" cy="161.6" r="1.4" fill="#888888"/><circle cx="243.2" cy="158.9" r="1.4" fill="#888888"/><circle cx="247.1" cy="154.4" r="1.4" fill="#888888"/><circle cx="251.0" cy="153.8" r="1.4" fill="#888888"/><circle cx="255.0" cy="152.2" r="1.4" fill="#888888"/><circle cx="258.9" cy="148.2" r="1.4" fill="#888888"/><circle cx="262.8" cy="146.4" r="1.4" fill="#888888"/><circle cx="266.7" cy="145.8" r="1.4" fill="#888888"/><circle cx="270.6" cy="145.8" r="1.4" fill="#888888"/><circle cx="274.5" cy="144.4" r="1.4" fill="#888888"/><circle cx="278.5" cy="141.8" r="1.4" fill="#888888"/><circle cx="282.4" cy="139.1" r="1.4" fill="#888888"/><circle cx="286.3" cy="135.1" r="1.4" fill="#888888"/><circle cx="290.2" cy="135.1" r="1.4" fill="#888888"/><circle cx="294.1" cy="134.4" r="1.4" fill="#888888"/><circle cx="298.0" cy="134.4" r="1.4" fill="#888888"/><circle cx="302.0" cy="136.9" r="1.4" fill="#888888"/><circle cx="305.9" cy="138.9" r="1.4" fill="#888888"/><circle cx="309.8" cy="140.7" r="1.4" fill="#888888"/><circle cx="313.7" cy="145.1" r="1.4" fill="#888888"/><circle cx="317.6" cy="148.9" r="1.4" fill="#888888"/><circle cx="321.5" cy="151.6" r="1.4" fill="#888888"/><circle cx="325.5" cy="155.6" r="1.4" fill="#888888"/><circle cx="329.4" cy="158.7" r="1.4" fill="#888888"/><circle cx="333.3" cy="158.9" r="1.4" fill="#888888"/><circle cx="337.2" cy="160.0" r="1.4" fill="#888888"/><circle cx="341.1" cy="160.7" r="1.4" fill="#888888"/><circle cx="345.0" cy="158.2" r="1.4" fill="#888888"/><circle cx="349.0" cy="156.2" r="1.4" fill="#888888"/><circle cx="352.9" cy="155.1" r="1.4" fill="#888888"/><circle cx="356.8" cy="151.8" r="1.4" fill="#888888"/><circle cx="360.7" cy="148.9" r="1.4" fill="#888888"/><circle cx="364.6" cy="147.6" r="1.4" fill="#888888"/><circle cx="368.5" cy="145.1" r="1.4" fill="#888888"/><circle cx="372.5" cy="141.6" r="1.4" fill="#888888"/><circle cx="376.4" cy="141.3" r="1.4" fill="#888888"/><circle cx="380.3" cy="139.6" r="1.4" fill="#888888"/><circle cx="384.2" cy="136.7" r="1.4" fill="#888888"/><circle cx="388.1" cy="138.4" r="1.4" fill="#888888"/><circle cx="392.1" cy="140.0" r="1.4" fill="#888888"/><circle cx="396.0" cy="140.7" r="1.4" fill="#888888"/><circle cx="399.9" cy="141.3" r="1.4" fill="#888888"/><circle cx="403.8" cy="141.8" r="1.4" fill="#888888"/><circle cx="407.7" cy="142.2" r="1.4" fill="#888888"/><circle cx="411.6" cy="142.2" r="1.4" fill="#888888"/><circle cx="415.6" cy="142.9" r="1.4" fill="#888888"/><circle cx="419.5" cy="143.3" r="1.4" fill="#888888"/><circle cx="423.4" cy="143.6" r="1.4" fill="#888888"/><circle cx="427.3" cy="143.1" r="1.4" fill="#888888"/><circle cx="431.2" cy="142.2" r="1.4" fill="#888888"/><circle cx="435.1" cy="140.4" r="1.4" fill="#888888"/><circle cx="439.1" cy="137.1" r="1.4" fill="#888888"/><circle cx="443.0" cy="139.1" r="1.4" fill="#888888"/><circle cx="446.9" cy="137.1" r="1.4" fill="#888888"/><circle cx="450.8" cy="165.6" r="1.4" fill="#888888"/><circle cx="454.7" cy="215.1" r="1.4" fill="#888888"/><circle cx="458.6" cy="237.8" r="1.4" fill="#888888"/><circle cx="462.6" cy="233.3" r="1.4" fill="#888888"/><circle cx="466.5" cy="230.0" r="1.4" fill="#888888"/><circle cx="470.4" cy="223.8" r="1.4" fill="#888888"/><circle cx="474.3" cy="219.8" r="1.4" fill="#888888"/><circle cx="478.2" cy="217.8" r="1.4" fill="#888888"/><circle cx="482.1" cy="218.4" r="1.4" fill="#888888"/><circle cx="486.1" cy="221.1" r="1.4" fill="#888888"/><circle cx="490.0" cy="220.7" r="1.4" fill="#888888"/><circle cx="493.9" cy="219.6" r="1.4" fill="#888888"/><circle cx="497.8" cy="214.0" r="1.4" fill="#888888"/><circle cx="501.7" cy="203.3" r="1.4" fill="#888888"/><circle cx="505.6" cy="196.2" r="1.4" fill="#888888"/><circle cx="509.6" cy="191.6" r="1.4" fill="#888888"/><circle cx="513.5" cy="189.6" r="1.4" fill="#888888"/><circle cx="517.4" cy="191.1" r="1.4" fill="#888888"/><circle cx="521.3" cy="194.0" r="1.4" fill="#888888"/><circle cx="525.2" cy="192.9" r="1.4" fill="#888888"/><circle cx="529.1" cy="188.0" r="1.4" fill="#888888"/><circle cx="533.1" cy="188.7" r="1.4" fill="#888888"/><circle cx="537.0" cy="200.2" r="1.4" fill="#888888"/><circle cx="540.9" cy="211.8" r="1.4" fill="#888888"/><circle cx="544.8" cy="213.3" r="1.4" fill="#888888"/><circle cx="548.7" cy="210.7" r="1.4" fill="#888888"/><circle cx="552.6" cy="215.6" r="1.4" fill="#888888"/><circle cx="556.6" cy="223.8" r="1.4" fill="#888888"/><circle cx="560.5" cy="227.6" r="1.4" fill="#888888"/><circle cx="564.4" cy="227.1" r="1.4" fill="#888888"/><circle cx="568.3" cy="224.4" r="1.4" fill="#888888"/><circle cx="572.2" cy="222.7" r="1.4" fill="#888888"/><circle cx="576.2" cy="221.3" r="1.4" fill="#888888"/><circle cx="580.1" cy="218.9" r="1.4" fill="#888888"/><circle cx="584.0" cy="216.7" r="1.4" fill="#888888"/><circle cx="587.9" cy="216.4" r="1.4" fill="#888888"/><circle cx="591.8" cy="217.3" r="1.4" fill="#888888"/><circle cx="595.7" cy="218.4" r="1.4" fill="#888888"/><circle cx="599.7" cy="220.4" r="1.4" fill="#888888"/><circle cx="603.6" cy="223.6" r="1.4" fill="#888888"/><circle cx="607.5" cy="228.2" r="1.4" fill="#888888"/><circle cx="611.4" cy="234.7" r="1.4" fill="#888888"/><circle cx="615.3" cy="241.6" r="1.4" fill="#888888"/><circle cx="619.2" cy="246.2" r="1.4" fill="#888888"/><circle cx="623.2" cy="248.4" r="1.4" fill="#888888"/><circle cx="627.1" cy="249.3" r="1.4" fill="#888888"/><circle cx="631.0" cy="251.6" r="1.4" fill="#888888"/><circle cx="634.9" cy="256.2" r="1.4" fill="#888888"/><circle cx="638.8" cy="235.8" r="1.4" fill="#888888"/><circle cx="642.7" cy="238.0" r="1.4" fill="#888888"/><circle cx="646.7" cy="240.2" r="1.4" fill="#888888"/><circle cx="650.6" cy="242.9" r="1.4" fill="#888888"/><circle cx="654.5" cy="246.0" r="1.4" fill="#888888"/><circle cx="658.4" cy="248.4" r="1.4" fill="#888888"/><circle cx="662.3" cy="251.1" r="1.4" fill="#888888"/><circle cx="666.2" cy="252.7" r="1.4" fill="#888888"/><circle cx="670.2" cy="253.6" r="1.4" fill="#888888"/><circle cx="674.1" cy="253.6" r="1.4" fill="#888888"/><circle cx="678.0" cy="252.7" r="1.4" fill="#888888"/><circle cx="681.9" cy="251.6" r="1.4" fill="#888888"/><circle cx="685.8" cy="250.2" r="1.4" fill="#888888"/><circle cx="689.7" cy="248.4" r="1.4" fill="#888888"/><circle cx="693.7" cy="246.7" r="1.4" fill="#888888"/><circle cx="697.6" cy="245.3" r="1.4" fill="#888888"/><circle cx="701.5" cy="244.2" r="1.4" fill="#888888"/><circle cx="705.4" cy="243.8" r="1.4" fill="#888888"/><circle cx="709.3" cy="243.8" r="1.4" fill="#888888"/><circle cx="713.2" cy="244.2" r="1.4" fill="#888888"/><circle cx="717.2" cy="245.3" r="1.4" fill="#888888"/><circle cx="721.1" cy="246.9" r="1.4" fill="#888888"/><circle cx="725.0" cy="247.8" r="1.4" fill="#888888"/><circle cx="728.9" cy="248.7" r="1.4" fill="#888888"/><circle cx="732.8" cy="249.1" r="1.4" fill="#888888"/><circle cx="736.7" cy="249.6" r="1.4" fill="#888888"/><circle cx="740.7" cy="249.3" r="1.4" fill="#888888"/><circle cx="744.6" cy="249.1" r="1.4" fill="#888888"/><circle cx="748.5" cy="248.2" r="1.4" fill="#888888"/><circle cx="752.4" cy="247.1" r="1.4" fill="#888888"/><circle cx="756.3" cy="245.8" r="1.4" fill="#888888"/><circle cx="760.2" cy="242.9" r="1.4" fill="#888888"/><circle cx="764.2" cy="241.3" r="1.4" fill="#888888"/><circle cx="768.1" cy="240.0" r="1.4" fill="#888888"/><circle cx="772.0" cy="239.1" r="1.4" fill="#888888"/><circle cx="775.9" cy="238.7" r="1.4" fill="#888888"/><circle cx="779.8" cy="238.4" r="1.4" fill="#888888"/><circle cx="783.8" cy="236.9" r="1.4" fill="#888888"/><circle cx="787.7" cy="235.1" r="1.4" fill="#888888"/><circle cx="791.6" cy="233.3" r="1.4" fill="#888888"/><circle cx="795.5" cy="230.7" r="1.4" fill="#888888"/><circle cx="799.4" cy="228.4" r="1.4" fill="#888888"/><circle cx="803.3" cy="226.2" r="1.4" fill="#888888"/><circle cx="807.3" cy="222.7" r="1.4" fill="#888888"/><circle cx="811.2" cy="220.2" r="1.4" fill="#888888"/><circle cx="815.1" cy="218.7" r="1.4" fill="#888888"/><circle cx="819.0" cy="217.6" r="1.4" fill="#888888"/><circle cx="822.9" cy="217.3" r="1.4" fill="#888888"/><circle cx="826.8" cy="218.2" r="1.4" fill="#888888"/><circle cx="830.8" cy="220.0" r="1.4" fill="#888888"/><circle cx="834.7" cy="222.0" r="1.4" fill="#888888"/><circle cx="838.6" cy="224.4" r="1.4" fill="#888888"/><circle cx="842.5" cy="226.9" r="1.4" fill="#888888"/><circle cx="846.4" cy="228.9" r="1.4" fill="#888888"/><circle cx="850.3" cy="230.2" r="1.4" fill="#888888"/><circle cx="854.3" cy="231.3" r="1.4" fill="#888888"/><circle cx="858.2" cy="230.7" r="1.4" fill="#888888"/><circle cx="862.1" cy="229.6" r="1.4" fill="#888888"/><circle cx="866.0" cy="227.8" r="1.4" fill="#888888"/><circle cx="869.9" cy="224.4" r="1.4" fill="#888888"/><circle cx="873.8" cy="221.6" r="1.4" fill="#888888"/><circle cx="877.8" cy="217.8" r="1.4" fill="#888888"/><circle cx="881.7" cy="215.6" r="1.4" fill="#888888"/><circle cx="885.6" cy="214.7" r="1.4" fill="#888888"/><circle cx="889.5" cy="214.4" r="1.4" fill="#888888"/><circle cx="893.4" cy="215.1" r="1.4" fill="#888888"/><circle cx="897.3" cy="216.4" r="1.4" fill="#888888"/><circle cx="901.3" cy="217.8" r="1.4" fill="#888888"/><circle cx="905.2" cy="219.1" r="1.4" fill="#888888"/><circle cx="909.1" cy="220.4" r="1.4" fill="#888888"/><circle cx="913.0" cy="221.6" r="1.4" fill="#888888"/><circle cx="916.9" cy="222.0" r="1.4" fill="#888888"/><circle cx="920.8" cy="221.8" r="1.4" fill="#888888"/><circle cx="924.8" cy="220.9" r="1.4" fill="#888888"/><circle cx="928.7" cy="218.7" r="1.4" fill="#888888"/><circle cx="932.6" cy="216.4" r="1.4" fill="#888888"/><circle cx="936.5" cy="214.0" r="1.4" fill="#888888"/><circle cx="940.4" cy="211.8" r="1.4" fill="#888888"/><circle cx="944.3" cy="209.3" r="1.4" fill="#888888"/><circle cx="948.3" cy="205.3" r="1.4" fill="#888888"/><circle cx="952.2" cy="205.6" r="1.4" fill="#888888"/><circle cx="956.1" cy="205.8" r="1.4" fill="#888888"/><circle cx="960.0" cy="205.8" r="1.4" fill="#888888"/><circle cx="963.9" cy="205.6" r="1.4" fill="#888888"/><circle cx="967.9" cy="205.1" r="1.4" fill="#888888"/><circle cx="971.8" cy="204.2" r="1.4" fill="#888888"/><circle cx="975.7" cy="201.8" r="1.4" fill="#888888"/><circle cx="979.6" cy="198.9" r="1.4" fill="#888888"/><circle cx="983.5" cy="195.1" r="1.4" fill="#888888"/><circle cx="987.4" cy="192.4" r="1.4" fill="#888888"/><circle cx="991.4" cy="188.9" r="1.4" fill="#888888"/><circle cx="995.3" cy="186.2" r="1.4" fill="#888888"/><circle cx="999.2" cy="184.4" r="1.4" fill="#888888"/><circle cx="1003.1" cy="183.3" r="1.4" fill="#888888"/><circle cx="1007.0" cy="183.3" r="1.4" fill="#888888"/><circle cx="1010.9" cy="184.4" r="1.4" fill="#888888"/><circle cx="1014.9" cy="186.2" r="1.4" fill="#888888"/><circle cx="1018.8" cy="189.1" r="1.4" fill="#888888"/><circle cx="1022.7" cy="191.8" r="1.4" fill="#888888"/><circle cx="1026.6" cy="194.0" r="1.4" fill="#888888"/><circle cx="1030.5" cy="195.6" r="1.4" fill="#888888"/><circle cx="1034.4" cy="196.7" r="1.4" fill="#888888"/><circle cx="1038.4" cy="196.0" r="1.4" fill="#888888"/><circle cx="1042.3" cy="193.8" r="1.4" fill="#888888"/><circle cx="1046.2" cy="189.6" r="1.4" fill="#888888"/><circle cx="1050.1" cy="185.6" r="1.4" fill="#888888"/><circle cx="1054.0" cy="187.8" r="1.4" fill="#888888"/><circle cx="1057.9" cy="189.3" r="1.4" fill="#888888"/><circle cx="1061.9" cy="193.8" r="1.4" fill="#888888"/><circle cx="1065.8" cy="201.1" r="1.4" fill="#888888"/><circle cx="1069.7" cy="209.8" r="1.4" fill="#888888"/><circle cx="1073.6" cy="208.9" r="1.4" fill="#888888"/><circle cx="1077.5" cy="198.4" r="1.4" fill="#888888"/><circle cx="1081.4" cy="195.8" r="1.4" fill="#888888"/><circle cx="1085.4" cy="197.8" r="1.4" fill="#888888"/><circle cx="1089.3" cy="191.6" r="1.4" fill="#888888"/><circle cx="1093.2" cy="195.8" r="1.4" fill="#888888"/><circle cx="1097.1" cy="222.7" r="1.4" fill="#888888"/><circle cx="1101.0" cy="236.9" r="1.4" fill="#888888"/><circle cx="1104.9" cy="223.3" r="1.4" fill="#888888"/><circle cx="1108.9" cy="217.3" r="1.4" fill="#888888"/><circle cx="1112.8" cy="226.9" r="1.4" fill="#888888"/><circle cx="1116.7" cy="225.3" r="1.4" fill="#888888"/><circle cx="1120.6" cy="220.4" r="1.4" fill="#888888"/><circle cx="1124.5" cy="228.0" r="1.4" fill="#888888"/><circle cx="1128.4" cy="234.9" r="1.4" fill="#888888"/><circle cx="1132.4" cy="235.1" r="1.4" fill="#888888"/><circle cx="1136.3" cy="235.1" r="1.4" fill="#888888"/><circle cx="1140.2" cy="236.4" r="1.4" fill="#888888"/><circle cx="1144.1" cy="239.3" r="1.4" fill="#888888"/><circle cx="1148.0" cy="242.4" r="1.4" fill="#888888"/><circle cx="1152.0" cy="246.4" r="1.4" fill="#888888"/><circle cx="1155.9" cy="250.0" r="1.4" fill="#888888"/><circle cx="1159.8" cy="238.9" r="1.4" fill="#888888"/><circle cx="1163.7" cy="240.4" r="1.4" fill="#888888"/><circle cx="1167.6" cy="236.2" r="1.4" fill="#888888"/><circle cx="1171.5" cy="219.3" r="1.4" fill="#888888"/></svg>
<div style="left:168px;top:271.5px;width:1007px;height:148.7px;background:#272727;border-radius:2px;overflow:hidden">
<svg width="1007" height="148.7" viewBox="168 271.5 1007 148.7" style="left:0;top:0"><rect x="172.30" y="399.5" width="7" height="18.3" fill="#facd3c"/><rect x="172.30" y="404.7" width="7" height="13.1" fill="#eeb61b" fill-opacity="0.77"/><rect x="180.11" y="381.5" width="7" height="36.3" fill="#facd3c"/><rect x="180.11" y="378.7" width="7" height="39.1" fill="#eeb61b" fill-opacity="0.77"/><rect x="187.91" y="370.4" width="7" height="47.4" fill="#facd3c"/><rect x="187.91" y="364.5" width="7" height="53.3" fill="#eeb61b" fill-opacity="0.77"/><rect x="195.72" y="382.2" width="7" height="35.6" fill="#facd3c"/><rect x="195.72" y="375.1" width="7" height="42.7" fill="#eeb61b" fill-opacity="0.77"/><rect x="203.52" y="385.3" width="7" height="32.5" fill="#facd3c"/><rect x="203.52" y="383.4" width="7" height="34.4" fill="#eeb61b" fill-opacity="0.77"/><rect x="211.33" y="380.4" width="7" height="37.4" fill="#facd3c"/><rect x="211.33" y="390.8" width="7" height="27.0" fill="#eeb61b" fill-opacity="0.77"/><rect x="219.13" y="378.2" width="7" height="39.6" fill="#facd3c"/><rect x="219.13" y="375.8" width="7" height="42.0" fill="#eeb61b" fill-opacity="0.77"/><rect x="226.94" y="377.5" width="7" height="40.3" fill="#facd3c"/><rect x="226.94" y="388.8" width="7" height="29.0" fill="#eeb61b" fill-opacity="0.77"/><rect x="234.74" y="377.3" width="7" height="40.5" fill="#facd3c"/><rect x="234.74" y="388.6" width="7" height="29.2" fill="#eeb61b" fill-opacity="0.77"/><rect x="242.55" y="375.8" width="7" height="42.0" fill="#facd3c"/><rect x="242.55" y="387.6" width="7" height="30.2" fill="#eeb61b" fill-opacity="0.77"/><rect x="250.35" y="375.8" width="7" height="42.0" fill="#facd3c"/><rect x="250.35" y="387.6" width="7" height="30.2" fill="#eeb61b" fill-opacity="0.77"/><rect x="258.15" y="374.0" width="7" height="43.8" fill="#facd3c"/><rect x="258.15" y="338.9" width="7" height="78.9" fill="#eeb61b" fill-opacity="0.77"/><rect x="265.96" y="372.8" width="7" height="45.0" fill="#facd3c"/><rect x="265.96" y="364.0" width="7" height="53.8" fill="#eeb61b" fill-opacity="0.77"/><rect x="273.76" y="371.6" width="7" height="46.2" fill="#facd3c"/><rect x="273.76" y="315.6" width="7" height="102.2" fill="#eeb61b" fill-opacity="0.77"/><rect x="281.57" y="369.2" width="7" height="48.6" fill="#facd3c"/><rect x="281.57" y="333.2" width="7" height="84.6" fill="#eeb61b" fill-opacity="0.77"/><rect x="289.38" y="365.9" width="7" height="51.9" fill="#facd3c"/><rect x="289.38" y="380.4" width="7" height="37.4" fill="#eeb61b" fill-opacity="0.77"/><rect x="297.18" y="364.0" width="7" height="53.8" fill="#facd3c"/><rect x="297.18" y="328.9" width="7" height="88.9" fill="#eeb61b" fill-opacity="0.77"/><rect x="304.99" y="361.6" width="7" height="56.2" fill="#facd3c"/><rect x="304.99" y="298.1" width="7" height="119.7" fill="#eeb61b" fill-opacity="0.77"/><rect x="312.79" y="401.7" width="7" height="16.1" fill="#facd3c"/><rect x="312.79" y="350.7" width="7" height="67.1" fill="#eeb61b" fill-opacity="0.77"/><rect x="320.60" y="367.3" width="7" height="50.5" fill="#facd3c"/><rect x="320.60" y="362.8" width="7" height="55.0" fill="#eeb61b" fill-opacity="0.77"/><rect x="328.40" y="353.8" width="7" height="64.0" fill="#facd3c"/><rect x="328.40" y="296.9" width="7" height="120.9" fill="#eeb61b" fill-opacity="0.77"/><rect x="336.21" y="398.8" width="7" height="19.0" fill="#facd3c"/><rect x="336.21" y="345.0" width="7" height="72.8" fill="#eeb61b" fill-opacity="0.77"/><rect x="344.01" y="382.7" width="7" height="35.1" fill="#facd3c"/><rect x="344.01" y="326.1" width="7" height="91.7" fill="#eeb61b" fill-opacity="0.77"/><rect x="351.81" y="355.0" width="7" height="62.8" fill="#facd3c"/><rect x="351.81" y="372.6" width="7" height="45.2" fill="#eeb61b" fill-opacity="0.77"/><rect x="359.62" y="378.0" width="7" height="39.8" fill="#facd3c"/><rect x="359.62" y="389.1" width="7" height="28.7" fill="#eeb61b" fill-opacity="0.77"/><rect x="367.43" y="385.3" width="7" height="32.5" fill="#facd3c"/><rect x="367.43" y="394.4" width="7" height="23.4" fill="#eeb61b" fill-opacity="0.77"/><rect x="375.23" y="392.9" width="7" height="24.9" fill="#facd3c"/><rect x="375.23" y="295.3" width="7" height="122.5" fill="#eeb61b" fill-opacity="0.77"/><rect x="383.03" y="378.0" width="7" height="39.8" fill="#facd3c"/><rect x="383.03" y="328.9" width="7" height="88.9" fill="#eeb61b" fill-opacity="0.77"/><rect x="390.84" y="353.1" width="7" height="64.7" fill="#facd3c"/><rect x="390.84" y="371.2" width="7" height="46.6" fill="#eeb61b" fill-opacity="0.77"/><rect x="398.64" y="396.0" width="7" height="21.8" fill="#facd3c"/><rect x="398.64" y="318.2" width="7" height="99.6" fill="#eeb61b" fill-opacity="0.77"/><rect x="406.45" y="353.4" width="7" height="64.4" fill="#facd3c"/><rect x="406.45" y="316.2" width="7" height="101.6" fill="#eeb61b" fill-opacity="0.77"/><rect x="414.25" y="348.9" width="7" height="68.9" fill="#facd3c"/><rect x="414.25" y="368.2" width="7" height="49.6" fill="#eeb61b" fill-opacity="0.77"/><rect x="422.06" y="403.8" width="7" height="14.0" fill="#facd3c"/><rect x="422.06" y="407.7" width="7" height="10.1" fill="#eeb61b" fill-opacity="0.77"/><rect x="429.87" y="373.4" width="7" height="44.4" fill="#facd3c"/><rect x="429.87" y="301.8" width="7" height="116.0" fill="#eeb61b" fill-opacity="0.77"/><rect x="437.67" y="377.4" width="7" height="40.4" fill="#facd3c"/><rect x="437.67" y="333.4" width="7" height="84.4" fill="#eeb61b" fill-opacity="0.77"/><rect x="445.48" y="379.6" width="7" height="38.2" fill="#facd3c"/><rect x="445.48" y="331.6" width="7" height="86.2" fill="#eeb61b" fill-opacity="0.77"/><rect x="453.28" y="358.2" width="7" height="59.6" fill="#facd3c"/><rect x="453.28" y="374.9" width="7" height="42.9" fill="#eeb61b" fill-opacity="0.77"/><rect x="461.08" y="405.1" width="7" height="12.7" fill="#facd3c"/><rect x="461.08" y="328.0" width="7" height="89.8" fill="#eeb61b" fill-opacity="0.77"/><rect x="468.89" y="373.4" width="7" height="44.4" fill="#facd3c"/><rect x="468.89" y="348.2" width="7" height="69.6" fill="#eeb61b" fill-opacity="0.77"/><rect x="476.69" y="370.5" width="7" height="47.3" fill="#facd3c"/><rect x="476.69" y="307.8" width="7" height="110.0" fill="#eeb61b" fill-opacity="0.77"/><rect x="484.50" y="404.0" width="7" height="13.8" fill="#facd3c"/><rect x="484.50" y="356.5" width="7" height="61.3" fill="#eeb61b" fill-opacity="0.77"/><rect x="492.31" y="396.7" width="7" height="21.1" fill="#facd3c"/><rect x="492.31" y="368.2" width="7" height="49.6" fill="#eeb61b" fill-opacity="0.77"/><rect x="500.11" y="400.0" width="7" height="17.8" fill="#facd3c"/><rect x="500.11" y="302.5" width="7" height="115.3" fill="#eeb61b" fill-opacity="0.77"/><rect x="507.92" y="412.9" width="7" height="4.9" fill="#facd3c"/><rect x="507.92" y="380.5" width="7" height="37.3" fill="#eeb61b" fill-opacity="0.77"/><rect x="515.72" y="392.2" width="7" height="25.6" fill="#facd3c"/><rect x="515.72" y="315.4" width="7" height="102.4" fill="#eeb61b" fill-opacity="0.77"/><rect x="523.52" y="382.7" width="7" height="35.1" fill="#facd3c"/><rect x="523.52" y="367.1" width="7" height="50.7" fill="#eeb61b" fill-opacity="0.77"/><rect x="531.33" y="394.7" width="7" height="23.1" fill="#facd3c"/><rect x="531.33" y="356.5" width="7" height="61.3" fill="#eeb61b" fill-opacity="0.77"/><rect x="539.13" y="371.6" width="7" height="46.2" fill="#facd3c"/><rect x="539.13" y="343.6" width="7" height="74.2" fill="#eeb61b" fill-opacity="0.77"/><rect x="546.94" y="381.1" width="7" height="36.7" fill="#facd3c"/><rect x="546.94" y="391.4" width="7" height="26.4" fill="#eeb61b" fill-opacity="0.77"/><rect x="554.75" y="401.1" width="7" height="16.7" fill="#facd3c"/><rect x="554.75" y="366.9" width="7" height="50.9" fill="#eeb61b" fill-opacity="0.77"/><rect x="562.55" y="381.8" width="7" height="36.0" fill="#facd3c"/><rect x="562.55" y="391.9" width="7" height="25.9" fill="#eeb61b" fill-opacity="0.77"/><rect x="570.36" y="385.1" width="7" height="32.7" fill="#facd3c"/><rect x="570.36" y="362.5" width="7" height="55.3" fill="#eeb61b" fill-opacity="0.77"/><rect x="578.16" y="391.6" width="7" height="26.2" fill="#facd3c"/><rect x="578.16" y="398.9" width="7" height="18.9" fill="#eeb61b" fill-opacity="0.77"/><rect x="585.96" y="411.6" width="7" height="6.2" fill="#facd3c"/><rect x="585.96" y="387.1" width="7" height="30.7" fill="#eeb61b" fill-opacity="0.77"/><rect x="593.77" y="402.7" width="7" height="15.1" fill="#facd3c"/><rect x="593.77" y="360.9" width="7" height="56.9" fill="#eeb61b" fill-opacity="0.77"/><rect x="601.58" y="398.5" width="7" height="19.3" fill="#facd3c"/><rect x="601.58" y="403.9" width="7" height="13.9" fill="#eeb61b" fill-opacity="0.77"/><rect x="609.38" y="364.0" width="7" height="53.8" fill="#facd3c"/><rect x="609.38" y="379.1" width="7" height="38.7" fill="#eeb61b" fill-opacity="0.77"/><rect x="617.18" y="403.4" width="7" height="14.4" fill="#facd3c"/><rect x="617.18" y="332.5" width="7" height="85.3" fill="#eeb61b" fill-opacity="0.77"/><rect x="624.99" y="371.1" width="7" height="46.7" fill="#facd3c"/><rect x="624.99" y="294.0" width="7" height="123.8" fill="#eeb61b" fill-opacity="0.77"/><rect x="632.80" y="371.1" width="7" height="46.7" fill="#facd3c"/><rect x="632.80" y="325.8" width="7" height="92.0" fill="#eeb61b" fill-opacity="0.77"/><rect x="640.60" y="410.0" width="7" height="7.8" fill="#facd3c"/><rect x="640.60" y="392.5" width="7" height="25.3" fill="#eeb61b" fill-opacity="0.77"/><rect x="648.40" y="386.7" width="7" height="31.1" fill="#facd3c"/><rect x="648.40" y="272.2" width="7" height="145.6" fill="#eeb61b" fill-opacity="0.77"/><rect x="656.21" y="381.6" width="7" height="36.2" fill="#facd3c"/><rect x="656.21" y="352.9" width="7" height="64.9" fill="#eeb61b" fill-opacity="0.77"/><rect x="664.01" y="395.1" width="7" height="22.7" fill="#facd3c"/><rect x="664.01" y="390.5" width="7" height="27.3" fill="#eeb61b" fill-opacity="0.77"/><rect x="671.82" y="382.9" width="7" height="34.9" fill="#facd3c"/><rect x="671.82" y="380.5" width="7" height="37.3" fill="#eeb61b" fill-opacity="0.77"/><rect x="679.62" y="391.1" width="7" height="26.7" fill="#facd3c"/><rect x="679.62" y="292.0" width="7" height="125.8" fill="#eeb61b" fill-opacity="0.77"/><rect x="687.43" y="398.2" width="7" height="19.6" fill="#facd3c"/><rect x="687.43" y="351.1" width="7" height="66.7" fill="#eeb61b" fill-opacity="0.77"/><rect x="695.23" y="361.8" width="7" height="56.0" fill="#facd3c"/><rect x="695.23" y="288.5" width="7" height="129.3" fill="#eeb61b" fill-opacity="0.77"/><rect x="703.04" y="376.2" width="7" height="41.6" fill="#facd3c"/><rect x="703.04" y="326.7" width="7" height="91.1" fill="#eeb61b" fill-opacity="0.77"/><rect x="710.85" y="387.1" width="7" height="30.7" fill="#facd3c"/><rect x="710.85" y="274.0" width="7" height="143.8" fill="#eeb61b" fill-opacity="0.77"/><rect x="718.65" y="380.9" width="7" height="36.9" fill="#facd3c"/><rect x="718.65" y="313.8" width="7" height="104.0" fill="#eeb61b" fill-opacity="0.77"/><rect x="726.45" y="406.0" width="7" height="11.8" fill="#facd3c"/><rect x="726.45" y="390.5" width="7" height="27.3" fill="#eeb61b" fill-opacity="0.77"/><rect x="734.26" y="380.9" width="7" height="36.9" fill="#facd3c"/><rect x="734.26" y="319.8" width="7" height="98.0" fill="#eeb61b" fill-opacity="0.77"/><rect x="742.07" y="377.4" width="7" height="40.4" fill="#facd3c"/><rect x="742.07" y="388.7" width="7" height="29.1" fill="#eeb61b" fill-opacity="0.77"/><rect x="749.87" y="386.2" width="7" height="31.6" fill="#facd3c"/><rect x="749.87" y="379.4" width="7" height="38.4" fill="#eeb61b" fill-opacity="0.77"/><rect x="757.67" y="352.5" width="7" height="65.3" fill="#facd3c"/><rect x="757.67" y="272.2" width="7" height="145.6" fill="#eeb61b" fill-opacity="0.77"/><rect x="765.48" y="377.1" width="7" height="40.7" fill="#facd3c"/><rect x="765.48" y="328.7" width="7" height="89.1" fill="#eeb61b" fill-opacity="0.77"/><rect x="773.29" y="384.0" width="7" height="33.8" fill="#facd3c"/><rect x="773.29" y="393.5" width="7" height="24.3" fill="#eeb61b" fill-opacity="0.77"/><rect x="781.09" y="374.9" width="7" height="42.9" fill="#facd3c"/><rect x="781.09" y="272.2" width="7" height="145.6" fill="#eeb61b" fill-opacity="0.77"/><rect x="788.89" y="367.4" width="7" height="50.4" fill="#facd3c"/><rect x="788.89" y="304.9" width="7" height="112.9" fill="#eeb61b" fill-opacity="0.77"/><rect x="796.70" y="398.2" width="7" height="19.6" fill="#facd3c"/><rect x="796.70" y="336.0" width="7" height="81.8" fill="#eeb61b" fill-opacity="0.77"/><rect x="804.50" y="414.5" width="7" height="3.3" fill="#facd3c"/><rect x="804.50" y="353.6" width="7" height="64.2" fill="#eeb61b" fill-opacity="0.77"/><rect x="812.31" y="414.5" width="7" height="3.3" fill="#facd3c"/><rect x="812.31" y="376.9" width="7" height="40.9" fill="#eeb61b" fill-opacity="0.77"/><rect x="820.12" y="402.7" width="7" height="15.1" fill="#facd3c"/><rect x="820.12" y="333.4" width="7" height="84.4" fill="#eeb61b" fill-opacity="0.77"/><rect x="827.92" y="398.2" width="7" height="19.6" fill="#facd3c"/><rect x="827.92" y="313.8" width="7" height="104.0" fill="#eeb61b" fill-opacity="0.77"/><rect x="835.72" y="406.2" width="7" height="11.6" fill="#facd3c"/><rect x="835.72" y="364.7" width="7" height="53.1" fill="#eeb61b" fill-opacity="0.77"/><rect x="843.53" y="393.8" width="7" height="24.0" fill="#facd3c"/><rect x="843.53" y="376.2" width="7" height="41.6" fill="#eeb61b" fill-opacity="0.77"/><rect x="851.34" y="406.0" width="7" height="11.8" fill="#facd3c"/><rect x="851.34" y="402.9" width="7" height="14.9" fill="#eeb61b" fill-opacity="0.77"/><rect x="859.14" y="402.2" width="7" height="15.6" fill="#facd3c"/><rect x="859.14" y="396.2" width="7" height="21.6" fill="#eeb61b" fill-opacity="0.77"/><rect x="866.94" y="396.0" width="7" height="21.8" fill="#facd3c"/><rect x="866.94" y="402.1" width="7" height="15.7" fill="#eeb61b" fill-opacity="0.77"/><rect x="874.75" y="388.2" width="7" height="29.6" fill="#facd3c"/><rect x="874.75" y="334.2" width="7" height="83.6" fill="#eeb61b" fill-opacity="0.77"/><rect x="882.56" y="411.6" width="7" height="6.2" fill="#facd3c"/><rect x="882.56" y="310.7" width="7" height="107.1" fill="#eeb61b" fill-opacity="0.77"/><rect x="890.36" y="408.9" width="7" height="8.9" fill="#facd3c"/><rect x="890.36" y="354.0" width="7" height="63.8" fill="#eeb61b" fill-opacity="0.77"/><rect x="898.16" y="405.1" width="7" height="12.7" fill="#facd3c"/><rect x="898.16" y="348.9" width="7" height="68.9" fill="#eeb61b" fill-opacity="0.77"/><rect x="905.97" y="394.5" width="7" height="23.3" fill="#facd3c"/><rect x="905.97" y="272.2" width="7" height="145.6" fill="#eeb61b" fill-opacity="0.77"/><rect x="913.78" y="405.1" width="7" height="12.7" fill="#facd3c"/><rect x="913.78" y="306.2" width="7" height="111.6" fill="#eeb61b" fill-opacity="0.77"/><rect x="921.58" y="396.7" width="7" height="21.1" fill="#facd3c"/><rect x="921.58" y="343.4" width="7" height="74.4" fill="#eeb61b" fill-opacity="0.77"/><rect x="929.38" y="412.7" width="7" height="5.1" fill="#facd3c"/><rect x="929.38" y="380.5" width="7" height="37.3" fill="#eeb61b" fill-opacity="0.77"/><rect x="937.19" y="408.2" width="7" height="9.6" fill="#facd3c"/><rect x="937.19" y="390.2" width="7" height="27.6" fill="#eeb61b" fill-opacity="0.77"/><rect x="944.99" y="410.0" width="7" height="7.8" fill="#facd3c"/><rect x="944.99" y="294.0" width="7" height="123.8" fill="#eeb61b" fill-opacity="0.77"/><rect x="952.80" y="394.5" width="7" height="23.3" fill="#facd3c"/><rect x="952.80" y="272.2" width="7" height="145.6" fill="#eeb61b" fill-opacity="0.77"/><rect x="960.61" y="410.5" width="7" height="7.3" fill="#facd3c"/><rect x="960.61" y="272.2" width="7" height="145.6" fill="#eeb61b" fill-opacity="0.77"/><rect x="968.41" y="401.1" width="7" height="16.7" fill="#facd3c"/><rect x="968.41" y="308.2" width="7" height="109.6" fill="#eeb61b" fill-opacity="0.77"/><rect x="976.21" y="411.6" width="7" height="6.2" fill="#facd3c"/><rect x="976.21" y="286.0" width="7" height="131.8" fill="#eeb61b" fill-opacity="0.77"/><rect x="984.02" y="406.7" width="7" height="11.1" fill="#facd3c"/><rect x="984.02" y="272.2" width="7" height="145.6" fill="#eeb61b" fill-opacity="0.77"/><rect x="991.83" y="410.0" width="7" height="7.8" fill="#facd3c"/><rect x="991.83" y="401.6" width="7" height="16.2" fill="#eeb61b" fill-opacity="0.77"/><rect x="999.63" y="404.0" width="7" height="13.8" fill="#facd3c"/><rect x="999.63" y="378.9" width="7" height="38.9" fill="#eeb61b" fill-opacity="0.77"/><rect x="1007.43" y="407.1" width="7" height="10.7" fill="#facd3c"/><rect x="1007.43" y="388.5" width="7" height="29.3" fill="#eeb61b" fill-opacity="0.77"/><rect x="1015.24" y="401.8" width="7" height="16.0" fill="#facd3c"/><rect x="1015.24" y="284.5" width="7" height="133.3" fill="#eeb61b" fill-opacity="0.77"/><rect x="1023.05" y="411.6" width="7" height="6.2" fill="#facd3c"/><rect x="1023.05" y="381.1" width="7" height="36.7" fill="#eeb61b" fill-opacity="0.77"/><rect x="1030.85" y="400.5" width="7" height="17.3" fill="#facd3c"/><rect x="1030.85" y="272.2" width="7" height="145.6" fill="#eeb61b" fill-opacity="0.77"/><rect x="1038.65" y="408.2" width="7" height="9.6" fill="#facd3c"/><rect x="1038.65" y="330.2" width="7" height="87.6" fill="#eeb61b" fill-opacity="0.77"/><rect x="1046.46" y="411.6" width="7" height="6.2" fill="#facd3c"/><rect x="1046.46" y="272.2" width="7" height="145.6" fill="#eeb61b" fill-opacity="0.77"/><rect x="1054.26" y="408.2" width="7" height="9.6" fill="#facd3c"/><rect x="1054.26" y="286.7" width="7" height="131.1" fill="#eeb61b" fill-opacity="0.77"/><rect x="1062.07" y="403.4" width="7" height="14.4" fill="#facd3c"/><rect x="1062.07" y="368.2" width="7" height="49.6" fill="#eeb61b" fill-opacity="0.77"/><rect x="1069.88" y="402.7" width="7" height="15.1" fill="#facd3c"/><rect x="1069.88" y="272.2" width="7" height="145.6" fill="#eeb61b" fill-opacity="0.77"/><rect x="1077.68" y="409.4" width="7" height="8.4" fill="#facd3c"/><rect x="1077.68" y="368.2" width="7" height="49.6" fill="#eeb61b" fill-opacity="0.77"/><rect x="1085.48" y="404.0" width="7" height="13.8" fill="#facd3c"/><rect x="1085.48" y="308.9" width="7" height="108.9" fill="#eeb61b" fill-opacity="0.77"/><rect x="1093.29" y="408.9" width="7" height="8.9" fill="#facd3c"/><rect x="1093.29" y="294.5" width="7" height="123.3" fill="#eeb61b" fill-opacity="0.77"/><rect x="1101.10" y="401.1" width="7" height="16.7" fill="#facd3c"/><rect x="1101.10" y="335.4" width="7" height="82.4" fill="#eeb61b" fill-opacity="0.77"/><rect x="1108.90" y="404.0" width="7" height="13.8" fill="#facd3c"/><rect x="1108.90" y="346.7" width="7" height="71.1" fill="#eeb61b" fill-opacity="0.77"/><rect x="1116.70" y="402.7" width="7" height="15.1" fill="#facd3c"/><rect x="1116.70" y="304.7" width="7" height="113.1" fill="#eeb61b" fill-opacity="0.77"/><rect x="1124.51" y="411.6" width="7" height="6.2" fill="#facd3c"/><rect x="1124.51" y="292.7" width="7" height="125.1" fill="#eeb61b" fill-opacity="0.77"/><rect x="1132.32" y="407.1" width="7" height="10.7" fill="#facd3c"/><rect x="1132.32" y="361.6" width="7" height="56.2" fill="#eeb61b" fill-opacity="0.77"/><rect x="1140.12" y="409.4" width="7" height="8.4" fill="#facd3c"/><rect x="1140.12" y="358.9" width="7" height="58.9" fill="#eeb61b" fill-opacity="0.77"/><rect x="1147.92" y="396.7" width="7" height="21.1" fill="#facd3c"/><rect x="1147.92" y="308.5" width="7" height="109.3" fill="#eeb61b" fill-opacity="0.77"/><rect x="1155.73" y="407.1" width="7" height="10.7" fill="#facd3c"/><rect x="1155.73" y="277.8" width="7" height="140.0" fill="#eeb61b" fill-opacity="0.77"/><rect x="1163.54" y="400.5" width="7" height="17.3" fill="#facd3c"/><rect x="1163.54" y="327.4" width="7" height="90.4" fill="#eeb61b" fill-opacity="0.77"/></svg></div>
<div class="lbl" style="top:425px">Waveshaper</div>
<div class="row" style="top:439.3px"><span>Pre Gain: <b>0</b>.<b>0</b><b>0</b><b>0</b></span><div class="h" style="left:1.2px"></div></div>
<div class="row" style="top:459.5px"><span>Harmonic Shift: <b>0</b>.<b>0</b><b>0</b><b>0</b></span><div class="h" style="left:1.2px"></div></div>
<div class="row" style="top:479.7px"><span>Comb: <b>0</b>.<b>0</b><b>0</b><b>0</b></span><div class="h" style="left:1.2px"></div></div>
<div class="row" style="top:500px"><span>Chebyshev: <b>0</b>.<b>0</b><b>0</b><b>0</b></span><div class="h" style="left:1.2px"></div></div>
<div class="row" style="top:520.2px"><span>Quantization: <b>0</b>.<b>0</b><b>0</b><b>0</b></span><div class="h" style="left:1.2px"></div></div>
<div class="row" style="top:540.4px"><span>Posterization: <b>0</b>.825</span><div class="h" style="left:823.7px"></div></div>
<div class="row" style="top:560.6px"><span>Slew Limiter: <b>0</b>.<b>0</b><b>0</b><b>0</b></span><div class="h" style="left:1.2px"></div></div>
<div class="row" style="top:580.8px"><span>Brickwall Lowpass: <b>0</b>.<b>0</b><b>0</b><b>0</b></span><div class="h" style="left:1.2px"></div></div>
<div class="row" style="top:601.1px"><span>Brickwall Highpass: <b>0</b>.<b>0</b><b>0</b><b>0</b></span><div class="h" style="left:1.2px"></div></div>
<div class="row" style="top:621.3px"><span>Post Gain: <b>0</b>.<b>0</b><b>0</b><b>0</b></span><div class="h" style="left:1.2px"></div></div>
<div class="cb" style="left:168px;top:641.2px;background:#2a2a2a"></div>
<div class="tx" style="left:188px;top:644.5px">Normalize</div>
<div class="btn" style="left:168px;top:661.2px;width:36.7px"><span style="top:4.2px">Apply</span></div>
<div class="btn" style="left:210.6px;top:661.2px;width:42.3px"><span style="top:4.2px">Cancel</span></div>
<div style="left:1182.3px;top:25.5px;width:10.4px;height:643px;background:#3a3a3a"></div>
<div style="left:1184px;top:26px;width:7px;height:627px;background:#5b5b5b;border-radius:1.5px"></div>
<div style="left:1192.7px;top:0;width:7.3px;height:675px;background:#3e3e3e"></div>
<div style="left:0;top:0;width:6px;height:675px;background:#3d3d3d"></div>
<div style="left:0;top:668.5px;width:1200px;height:7px;background:#3c3c3c"></div>
<svg width="14" height="20" viewBox="0 0 14 20" style="left:998px;top:505.5px"><path d="M1.3 1.2 L1.3 14.2 L4.3 11.5 L6.3 15.7 L8.2 14.9 L6.3 10.8 L10.4 10.6 Z" fill="#1a1a1a" stroke="#d8d8d8" stroke-width="1.1" stroke-linejoin="round"/></svg>
</div></body></html>
